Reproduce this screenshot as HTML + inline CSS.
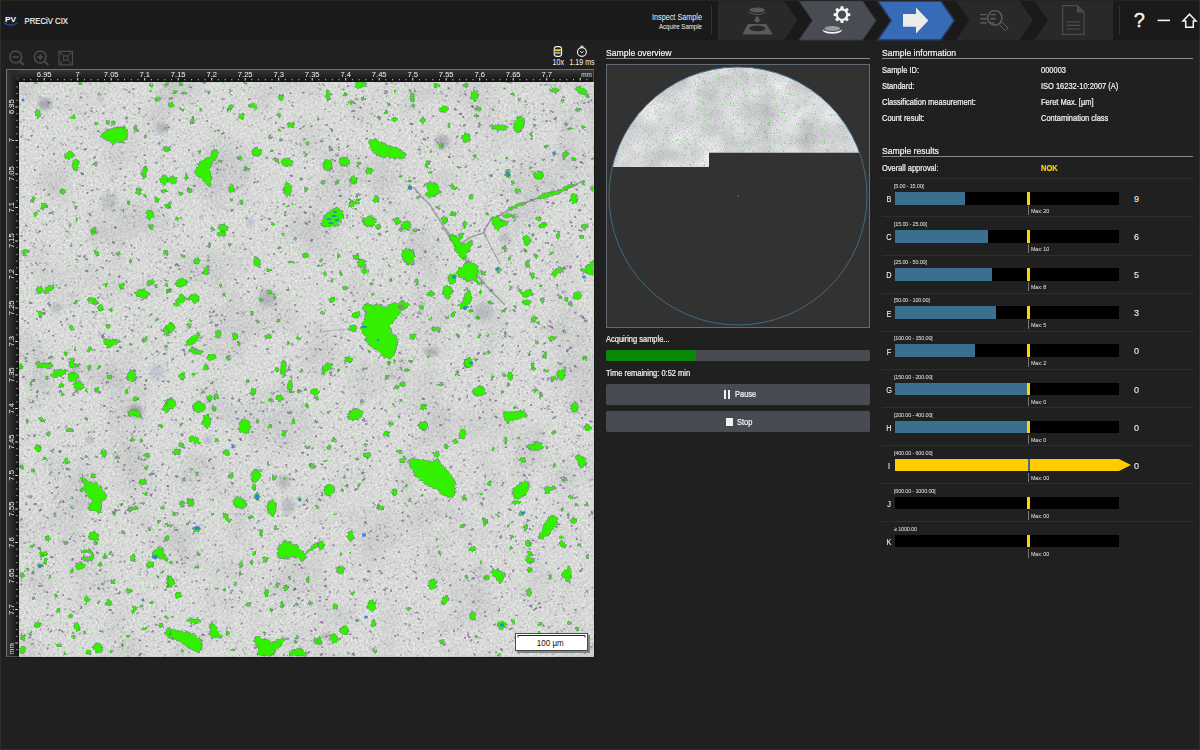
<!DOCTYPE html>
<html><head><meta charset="utf-8"><title>PRECiV CIX</title>
<style>
*{box-sizing:border-box;margin:0;padding:0}
html,body{width:1200px;height:750px;overflow:hidden;background:#202020}
body{position:relative;font-family:"Liberation Sans",sans-serif;color:#f2f2f2;font-size:8.5px}
.abs{position:absolute}
#hdr{left:0;top:0;width:1200px;height:40px;background:#1a1a1a}
.t{position:absolute;white-space:nowrap;line-height:1}
.sec{position:absolute;height:1px;background:#8a8a8a}
.lbl{font-size:8.6px;color:#f4f4f4;-webkit-text-stroke:0.22px #f4f4f4;transform:scaleX(.87);transform-origin:0 50%}
.ttl{font-size:9.8px;color:#f6f6f6;-webkit-text-stroke:0.2px #f6f6f6;transform:scaleX(.878);transform-origin:0 50%}
.btn{position:absolute;left:606px;width:264px;height:21px;background:#494b52;border-radius:2px}
.row{position:absolute;left:882px;width:311px;height:38px}
.row .sep{position:absolute;left:0;top:-0.7px;width:311px;height:1px;background:#2e2e2e}
.row .rng{position:absolute;left:12px;top:4px;font-size:6px;color:#e8e8e8;white-space:nowrap;letter-spacing:-0.2px;transform:scaleX(.92);transform-origin:0 50%}
.row .let{position:absolute;left:2.5px;top:15.3px;width:8px;text-align:center;font-size:8.5px;color:#f4f4f4;transform:scaleX(.86);-webkit-text-stroke:0.08px #f4f4f4}
.row .bar{position:absolute;left:12.5px;top:13px;width:224.5px;height:12.5px;background:#000}
.row .fill{position:absolute;left:0;top:0;height:100%;background:#3a6f8f}
.row .mk{position:absolute;left:145px;top:13px;width:3.2px;height:12.5px;background:#ffd500}
.row .tick{position:absolute;left:146px;top:27px;width:1px;height:9px;background:#777}
.row .mx{position:absolute;left:148.5px;top:29px;font-size:6px;color:#e8e8e8;white-space:nowrap;letter-spacing:-0.2px;transform:scaleX(.9);transform-origin:0 50%}
.row .val{position:absolute;left:252px;top:15px;font-size:9px;color:#f4f4f4;-webkit-text-stroke:0.08px #f4f4f4}
</style></head><body>
<div id="hdr" class="abs"></div>
<svg class="abs" style="left:0;top:0" width="1200" height="41" viewBox="0 0 1200 41">
<rect x="0" y="0" width="1200" height="1" fill="#232323"/>
<!-- logo -->
<rect x="3.4" y="12.8" width="14.6" height="14.6" fill="#161c2c"/>
<path d="M4 22 Q10.5 27 17.5 22 L17.5 23.5 Q10.5 28 4 23.5Z" fill="#2d4f86"/>
<text x="10.5" y="22.3" font-family="Liberation Sans, sans-serif" font-weight="bold" font-size="8" fill="#fff" text-anchor="middle" textLength="11" lengthAdjust="spacingAndGlyphs">PV</text>
<text x="24.5" y="23.6" font-family="Liberation Sans, sans-serif" font-size="9.4" fill="#f4f4f4" stroke="#f4f4f4" stroke-width="0.2" textLength="43.5" lengthAdjust="spacingAndGlyphs">PRECiV CIX</text>
<text x="702" y="20" font-family="Liberation Sans, sans-serif" font-size="8.6" fill="#f2f2f2" text-anchor="end" textLength="50" lengthAdjust="spacingAndGlyphs">Inspect Sample</text>
<text x="702" y="28.6" font-family="Liberation Sans, sans-serif" font-size="7" fill="#f2f2f2" text-anchor="end" textLength="43" lengthAdjust="spacingAndGlyphs">Acquire Sample</text>
<rect x="711" y="6" width="1" height="28" fill="#333"/>
<!-- steps -->
<path d="M718 1H784L797.5 20.5L784 40H718Z" fill="#28292b"/>
<path d="M799 1H862.5L876 20.5L862.5 40H799L812.5 20.5Z" fill="#4a4c54" stroke="#3a3c42" stroke-width="1"/>
<path d="M877.5 1H941L954.5 20.5L941 40H877.5L891 20.5Z" fill="#376bb7" stroke="#27344e" stroke-width="1.6"/>
<path d="M956 1H1019.5L1033 20.5L1019.5 40H956L969.5 20.5Z" fill="#28292b"/>
<path d="M1034.5 1H1113V40H1034.5L1048 20.5Z" fill="#28292b"/>
<!-- icon1 -->
<g fill="#5a5a5c">
<ellipse cx="757.2" cy="10" rx="7.6" ry="2.5"/>
<path d="M747.8 11.2 Q757.2 17 766.6 11.2 L766.6 12 Q757.2 18.2 747.8 12Z"/>
<path d="M755.5 16.5h3.4v3h2.3l-4 3.4l-4-3.4h2.3z"/>
<path fill-rule="evenodd" d="M747.8 24H766.4L772.6 34.6H742.4Z M757.3 25.6a8 2.8 0 1 0 0.01 0Z"/>
</g>
<!-- icon2 gear -->
<g transform="translate(842,14.6)" fill="#f4f4f4">
<path fill-rule="evenodd" d="M0 -6.3a6.3 6.3 0 1 0 0.01 0Z M0 -4.1a4.1 4.1 0 1 1 -0.01 0Z"/>
<g id="teeth"><path d="M-1.7 -5.6L-1.3 -8.3H1.3L1.7 -5.6Z"/><path d="M-1.7 5.6L-1.3 8.3H1.3L1.7 5.6Z"/></g>
<use href="#teeth" transform="rotate(45)"/><use href="#teeth" transform="rotate(90)"/><use href="#teeth" transform="rotate(135)"/>
</g>
<ellipse cx="832.3" cy="30.3" rx="9.6" ry="3.5" fill="#f4f4f4"/>
<ellipse cx="832.3" cy="28.9" rx="9.4" ry="3.1" fill="#4a4c54"/>
<ellipse cx="832.3" cy="28.5" rx="7.8" ry="2.5" fill="#9a9b9f"/>
<!-- icon3 arrow -->
<path d="M903 14H916V7.4L928.4 20.5L916 33.6V26.8H903Z" fill="#ebebeb"/>
<!-- icon4 -->
<g stroke="#5e5e60" fill="none" stroke-width="1.4">
<circle cx="994.8" cy="17.8" r="7.2"/>
<path d="M980.3 14.6h6.2M980.3 18.8h6.2M980.3 23h6.2M990.2 14.6h5.6M990.2 18.8h5.6M990.2 23h4"/>
<path d="M1000 23.4l1.6-1.6 6.4 6.2-2.6 2.8-6.2-6.4z" stroke-width="1"/>
</g>
<!-- icon5 -->
<g stroke="#4c4c4e" fill="none" stroke-width="1.2">
<path d="M1062.6 5.6H1077.4L1084 12V34.4H1062.6Z"/>
<path d="M1077.4 5.6V12H1084" fill="#4c4c4e"/>
<path d="M1066.4 21.8h13.6M1066.4 25.4h13.6M1066.4 29h13.6"/>
</g>
<rect x="1119" y="6" width="1" height="28" fill="#333"/>
<text x="1139.3" y="27.2" font-family="Liberation Sans, sans-serif" font-size="20" fill="#f6f6f6" stroke="#f6f6f6" stroke-width="0.35" text-anchor="middle">?</text>
<rect x="1157.6" y="19.6" width="12.4" height="1.6" fill="#f6f6f6"/>
<path d="M1189.5 14.2L1196 21H1193.3V27.2H1185.7V21H1183Z" fill="none" stroke="#f6f6f6" stroke-width="1.5" stroke-linejoin="miter"/>
</svg>

<svg class="abs" style="left:0;top:44px" width="600" height="24" viewBox="0 44 600 24">
<g fill="none" stroke="#4d4d4d" stroke-width="1.5">
<circle cx="15.7" cy="57" r="5.9"/><path d="M12.6 57h6.2"/><path d="M20 61.4l3.8 3.6" stroke-width="1.8"/>
<circle cx="40.2" cy="57" r="5.9"/><path d="M37.1 57h6.2M40.2 53.9v6.2"/><path d="M44.5 61.4l3.8 3.6" stroke-width="1.8"/>
<rect x="58.9" y="51.3" width="13.6" height="13.6" stroke-width="1.2"/>
<rect x="63.6" y="56" width="4.2" height="4.2" stroke-width="1.1"/>
<path d="M60.6 53l2.6 2.6M70.8 53l-2.6 2.6M60.6 63.2l2.6-2.6M70.8 63.2l-2.6-2.6" stroke-width="0.9"/><path d="M60.5 54.6v-1.7h1.7M69.2 52.9h1.7v1.7M60.5 61.6v1.7h1.7M69.2 63.3h1.7v-1.7" stroke-width="0.8"/>
</g>
<!-- objective icon -->
<g>
<rect x="554.2" y="46.6" width="7.4" height="9.8" rx="2.6" fill="none" stroke="#f0f0f0" stroke-width="1.1"/>
<rect x="555" y="49.3" width="5.8" height="1.9" fill="#ffd400"/>
<rect x="555" y="52.4" width="5.8" height="1.2" fill="#f0f0f0"/>
</g>
<g fill="none" stroke="#f0f0f0" stroke-width="1.1">
<circle cx="581.9" cy="52" r="4.4"/><path d="M580.4 46.3h3M581.9 46.3v1.4" /><path d="M580.2 51.2l1.7 1.6 1.7-1.6" stroke-width="1"/>
</g>
<text x="558.3" y="64.9" font-family="Liberation Sans, sans-serif" font-size="8.2" fill="#f2f2f2" text-anchor="middle" textLength="11.5" lengthAdjust="spacingAndGlyphs">10x</text>
<text x="582" y="64.9" font-family="Liberation Sans, sans-serif" font-size="8.2" fill="#f2f2f2" text-anchor="middle" textLength="25" lengthAdjust="spacingAndGlyphs">1.19 ms</text>
</svg>

<svg class="abs" style="left:0;top:66px" width="600" height="594" viewBox="0 66 600 594">
<defs>
<linearGradient id="rt" x1="0" y1="0" x2="0" y2="1"><stop offset="0" stop-color="#3a3a3a"/><stop offset="1" stop-color="#111"/></linearGradient>
<linearGradient id="rl" x1="0" y1="0" x2="1" y2="0"><stop offset="0" stop-color="#3a3a3a"/><stop offset="1" stop-color="#111"/></linearGradient>
<filter id="rough" x="0" y="0" width="100%" height="100%" filterUnits="objectBoundingBox"><feTurbulence type="fractalNoise" baseFrequency="0.28" numOctaves="2" seed="5" result="n"/><feDisplacementMap in="SourceGraphic" in2="n" scale="4.4" xChannelSelector="R" yChannelSelector="G"/></filter>
<filter id="spk" x="0" y="0" width="100%" height="100%"><feTurbulence type="fractalNoise" baseFrequency="0.42" numOctaves="1" seed="11"/><feColorMatrix type="matrix" values="0 0 0 0 0.33  0 0 0 0 0.27  0 0 0 0 0.42  6 0 0 0 -3.75"/></filter>
<filter id="spk2" x="0" y="0" width="100%" height="100%"><feTurbulence type="fractalNoise" baseFrequency="0.3" numOctaves="1" seed="23"/><feColorMatrix type="matrix" values="0 0 0 0 0.30  0 0 0 0 0.28  0 0 0 0 0.36  0 7 0 0 -4.55"/></filter>
<filter id="lowf" color-interpolation-filters="sRGB" x="0" y="0" width="100%" height="100%"><feTurbulence type="fractalNoise" baseFrequency="0.02" numOctaves="3" seed="4"/><feColorMatrix type="matrix" values="0 0 0 0 0.42  0 0 0 0 0.42  0 0 0 0 0.45  0.4 0 0 0 -0.185"/></filter>
<filter id="grain" color-interpolation-filters="sRGB" x="0" y="0" width="100%" height="100%"><feTurbulence type="fractalNoise" baseFrequency="0.45" numOctaves="2" seed="9"/><feColorMatrix type="matrix" values="0.24 0 0 0 0.725  0.24 0 0 0 0.735  0.24 0 0 0 0.725  0 0 0 0 1"/></filter>
<filter id="blur2"><feGaussianBlur stdDeviation="2"/></filter>
<filter id="blur1"><feGaussianBlur stdDeviation="0.55"/></filter>
<clipPath id="imgc"><rect x="19" y="82" width="574.8" height="574.8"/></clipPath>
</defs>
<rect x="6" y="69" width="589" height="589" fill="#1a1a1a"/>
<rect x="6" y="69" width="588" height="588" fill="#161616"/>
<rect x="6" y="69" width="588" height="13" fill="url(#rt)"/>
<rect x="6" y="69" width="13" height="588" fill="url(#rl)"/>
<path d="M6 69L19 82V69Z" fill="#2a2a2a"/>
<rect x="6" y="69" width="588" height="1" fill="#6a7078"/><rect x="6" y="69" width="1" height="588" fill="#6a7078"/><rect x="6" y="656.3" width="588" height="0.7" fill="#5c6a78"/><rect x="593.3" y="69" width="0.7" height="588" fill="#5c6a78"/>
<g clip-path="url(#imgc)">
<rect x="19" y="82" width="575" height="575" fill="#d3d4d3"/>
<rect x="19" y="82" width="575" height="575" filter="url(#grain)"/>
<rect x="19" y="82" width="575" height="575" filter="url(#lowf)"/>
<ellipse cx="45" cy="104" rx="7" ry="6" fill="#555566" opacity="0.39" filter="url(#blur2)"/>
<ellipse cx="162" cy="128" rx="6" ry="6" fill="#666680" opacity="0.28" filter="url(#blur2)"/>
<ellipse cx="110" cy="200" rx="8" ry="8" fill="#77778a" opacity="0.21" filter="url(#blur2)"/>
<ellipse cx="442" cy="142" rx="7" ry="7" fill="#55556a" opacity="0.32" filter="url(#blur2)"/>
<ellipse cx="267" cy="298" rx="9" ry="9" fill="#66667a" opacity="0.28" filter="url(#blur2)"/>
<ellipse cx="431" cy="352" rx="8" ry="4" fill="#5a4a6a" opacity="0.32" filter="url(#blur2)"/>
<ellipse cx="483" cy="312" rx="9" ry="9" fill="#7a7a90" opacity="0.28" filter="url(#blur2)"/>
<ellipse cx="505" cy="238" rx="6" ry="5" fill="#6a6a7a" opacity="0.24" filter="url(#blur2)"/>
<ellipse cx="90" cy="440" rx="4" ry="4" fill="#66667a" opacity="0.28" filter="url(#blur2)"/>
<ellipse cx="135" cy="411" rx="7" ry="6" fill="#4a3a4a" opacity="0.35" filter="url(#blur2)"/>
<ellipse cx="284" cy="482" rx="7" ry="7" fill="#6a6a80" opacity="0.28" filter="url(#blur2)"/>
<ellipse cx="288" cy="506" rx="6" ry="9" fill="#6a6a80" opacity="0.28" filter="url(#blur2)"/>
<ellipse cx="208" cy="440" rx="4" ry="4" fill="#6a78b0" opacity="0.35" filter="url(#blur2)"/>
<ellipse cx="157" cy="372" rx="8" ry="8" fill="#8a90c0" opacity="0.28" filter="url(#blur2)"/>
<ellipse cx="250" cy="222" rx="4" ry="5" fill="#8a90d8" opacity="0.35" filter="url(#blur2)"/>
<ellipse cx="100" cy="100" rx="3" ry="3" fill="#555" opacity="0.21" filter="url(#blur2)"/>
<ellipse cx="325" cy="636" rx="5" ry="4" fill="#66667a" opacity="0.28" filter="url(#blur2)"/>
<ellipse cx="56" cy="308" rx="6" ry="5" fill="#66667a" opacity="0.21" filter="url(#blur2)"/>
<ellipse cx="75" cy="370" rx="6" ry="5" fill="#66667a" opacity="0.21" filter="url(#blur2)"/>
<g fill="none" stroke="#3c3444" stroke-linecap="round" stroke-linejoin="round" filter="url(#blur1)" opacity="0.36">
<path d="M413.6 187.4L421 196L429.5 204.4L437 216L445.4 229.4L452 240L459 249.8L467 261L474.8 272.4L483 282L490.7 290.6L504.3 304.2" stroke-width="1.6"/>
<path d="M445.4 229.4L452 240L459 249.8L467 261L474.8 272.4L484 283" stroke-width="3" opacity="0.7"/>
<path d="M583.7 180.6L571 187L558.7 193L536 198.8L522 204L508.8 210L490.7 220.3L486 227L483.9 232.8L470.3 237.3L459 245.2" stroke-width="1.7"/>
<path d="M483.9 232.8L491 247L499.8 263.4" stroke-width="1.1"/>
<path d="M321 332L335 330L349 329" stroke-width="1.2" opacity="0.6"/>
</g>
<path d="M387 96l-1.3 0.9M78 300l1.4 0.6M238 342l0.8 -0.6M170 418h0M111 473h0M228 648l-1.5 1.1M459 156h0M405 296h0M357 86l-1.5 0.9M60 219l-1.3 0.9M350 221h0M73 460h0M516 113h0M54 500l-0.8 -0.1M262 242h0M20 306h0M183 482h0M449 115h0M509 172l-0.7 -1.0M515 314h0M200 234h0M282 615l-0.7 -0.7M171 618h0M231 173h0M524 234h0M108 244l1.1 -0.6M541 111h0M44 273h0M112 336h0M83 624l-1.4 0.2M104 155h0M341 584h0M121 319h0M162 173h0M41 352h0M220 553l-1.0 -0.5M172 144h0M199 430h0M351 228l-1.0 -1.0M204 336h0M182 463l-1.3 -0.7M133 96h0M131 482l-1.5 0.9M89 159h0M340 264h0M275 173h0M298 219h0M154 275l-0.8 0.5M425 119h0M258 201h0M355 481h0M238 85h0M237 514l-1.1 0.6M134 94l-1.2 -0.7M449 148h0M81 97h0M310 278h0M80 633h0M426 332h0M497 132l1.2 0.4M223 230h0M195 416h0M175 226l-1.3 1.1M416 192l1.6 0.8M189 289h0M92 108l-1.2 0.6M78 89h0M85 120h0M414 169h0M68 224h0M362 437h0M346 117l-1.2 -0.6M66 220l1.1 0.2M186 215h0M280 477h0M378 462h0M332 454h0M60 177h0M65 105l0.6 -0.7M120 380l1.2 -0.0M71 282h0M512 271l1.4 0.1M281 263h0M251 377h0M420 152h0M157 173h0M73 652h0M87 560h0M312 239h0M159 398h0M311 587l0.9 0.7M173 83h0M352 461h0M297 273h0M555 581l0.8 0.7M44 509h0M241 463h0M304 103h0M108 351l1.2 0.8M58 444h0M103 387h0M117 127h0M218 419h0M297 218h0M590 251h0M177 407h0M47 430h0M184 541h0M120 158h0M474 90h0M55 555l0.7 -1.1M144 337h0M583 293h0M54 240h0M472 200h0M448 355h0M82 371l1.1 1.1M54 357h0M324 342l-1.5 0.4M150 277h0M74 327h0M73 137h0M560 325l1.2 -0.4M351 204l-1.0 0.1M85 242h0M339 432h0M36 239h0M221 186h0M59 507l-1.0 -0.1M110 261h0M48 129h0M217 146h0M50 199h0M267 156l0.7 0.9M43 93h0M350 411h0M85 94h0M374 560l-0.8 0.2M352 473h0M586 268l0.7 -0.1M63 578h0M311 348h0M534 340h0M584 130l1.6 0.1M370 291h0M211 271h0M164 571h0M105 129h0M197 459l-0.9 -0.3M262 290l-0.9 0.6M228 495h0M163 450h0M78 568l-0.9 1.0M104 333l1.5 1.0M258 310h0M66 211l1.4 -0.9M184 558l1.0 -1.2M65 229h0M306 390h0M347 190h0M311 94l1.6 -0.6M28 535h0M172 129h0M366 327h0M177 645l1.0 0.7M230 302h0M163 147h0M275 132h0M303 289h0M584 156l1.6 0.5M321 524l1.2 -0.1M410 280h0M387 186h0M336 154h0M308 179l1.4 0.2M351 456h0M386 368l1.1 0.7M215 164l1.6 -0.9M173 224l1.5 -0.2M506 329h0M459 243h0M214 621l1.1 -1.1M98 273h0M112 651l1.1 0.0M34 354h0M117 443h0M82 93l-1.0 0.7M283 388h0M340 211l1.3 0.5M300 357h0M434 247h0M103 106l1.3 0.6M175 145l-1.3 0.1M386 112h0M553 316h0M294 196l-1.5 -1.0M349 389h0M544 182l-1.6 -0.2M304 620h0M523 87l0.9 1.2M331 366h0M27 276h0M130 433h0M265 270l-1.1 1.0M23 302l0.9 0.5M26 457l-1.1 -0.8M416 449h0M410 424h0M323 290l-1.2 -0.8M52 347h0M247 551h0M45 280h0M556 122l0.8 -0.9M388 501h0M532 339h0M65 635l0.7 1.2M245 155h0M108 190h0M38 461h0M276 468l-1.0 -0.6M185 550l0.8 0.9M304 640h0M158 211l1.5 0.1M278 295h0M49 298l-0.8 0.6M572 149h0M226 232h0M146 166h0M300 497h0M125 592h0M47 86h0M58 169h0M54 448h0M398 91h0M29 497l1.4 1.0M81 137l1.4 -0.6M247 296h0M390 272h0M413 243h0M248 126l1.3 0.1M240 507h0M64 510l-1.4 -0.4M36 239h0M399 131h0M516 89h0M436 403l-1.3 -0.8M174 236l1.0 -0.0M63 226h0M248 265h0M34 499l1.4 -1.0M295 312h0M417 394h0M391 107h0M249 514h0M25 231h0M548 131h0M219 279h0M219 138h0M58 108l1.2 0.4M127 269l1.1 0.3M425 253l-0.9 -0.6M86 296h0M328 610l-1.1 -0.9M25 160h0M310 366h0M328 179h0M38 233l-1.4 -0.6M187 411h0M256 116h0M279 446l1.3 0.9M280 362h0M506 135h0M47 139h0M74 205h0M95 123h0M78 262l-1.2 0.4M58 405l1.3 0.3M106 318h0M69 140h0M34 568l-1.3 -0.5M50 597h0M84 369h0M581 648l1.0 0.4M51 464l-1.3 0.5M174 591l0.9 -1.0M226 369h0M166 141h0M160 353l-1.2 1.0M24 197l-1.1 0.2M153 281h0M566 83h0M437 142l1.6 1.1M101 243l1.3 -0.3M82 143l-1.1 1.1M138 259l-1.4 -0.5M104 490h0M47 254l1.5 0.1M89 117l-1.4 -0.3M116 411h0M104 434h0M332 360h0M242 185l0.7 1.2M323 522h0M546 114l1.0 0.8M505 183h0M41 114l0.6 1.0M135 157h0M571 296h0M77 255l1.4 1.1M392 182h0M120 258l-1.5 1.1M244 653l1.5 1.1M146 407l-0.8 1.2M260 177h0M221 297h0M73 423h0M109 140l1.3 -0.5M74 308h0M50 84h0M85 533h0M517 355h0M64 600h0M587 332h0M499 230h0M58 305l1.1 1.0M26 484h0M84 168h0M171 458h0M118 313h0M250 309h0M47 355h0M512 475l1.6 -0.1M127 203h0M110 261l-0.8 0.9M71 98h0M31 530l-1.2 0.2M24 227l1.0 -0.3M220 227h0M169 490l-1.1 -0.6M52 574h0M123 138l-1.5 1.0M191 113l-0.9 1.2M123 128h0M199 115l-1.2 -0.8M266 328l-1.3 1.1M357 178l1.1 0.0M320 331l1.0 -0.7M309 153h0M235 450h0M47 148l1.1 -0.8M400 237l-1.1 0.3M466 559h0M255 174h0M208 595l-1.0 -0.4M84 312h0M115 158h0M505 142h0M346 334h0M272 118l-1.6 0.4M214 382l-1.1 0.4M388 167h0M371 89h0M203 272h0M336 299l1.4 -0.1M395 141h0M19 134h0M282 531l0.6 0.3M405 153h0M358 371l-1.2 -0.2M417 182l1.1 -0.3M96 319h0M191 485h0M186 280h0M204 148h0M503 246h0M320 97h0M470 199h0M279 436h0M148 453h0M427 293h0M584 125h0M88 105l-1.2 -0.6M335 124h0M142 273l1.6 0.8M583 87h0M411 266h0M492 297h0M564 178h0M23 120h0M210 132h0M422 124l1.2 -0.5M552 301l-1.1 -0.9M102 471h0M438 296h0M314 174h0M131 186h0M509 617h0M373 257h0M229 264l-1.4 0.5M210 357h0M299 144l1.5 -0.9M329 233l-1.5 0.8M141 103h0M114 377l-1.3 -0.0M225 208l0.8 0.4M526 105l1.4 -0.6M332 182h0M299 359h0M99 177h0M141 189h0M87 214h0M349 174l-0.7 -0.6M30 495l-0.8 0.3M101 416h0M313 178h0M362 122l-0.8 0.9M20 620h0M264 228h0M67 425l-1.3 0.7M344 433h0M136 399l0.9 -0.5M217 487h0M112 205l-0.8 1.1M22 134h0M269 119l-1.3 1.0M25 570h0M131 532h0M214 149l1.3 1.1M283 346l-0.9 -0.3M472 208h0M256 285h0M170 247h0M134 504l-1.4 0.8M330 106h0M321 325l1.0 0.4M120 643h0M155 353h0M306 203h0M481 401l-1.1 -1.2M261 159h0M326 263l-1.0 0.5M54 549h0M278 274h0M64 434h0M518 450h0M371 314l0.8 -0.4M187 236l1.4 1.1M164 509l0.7 -1.0M35 463l1.1 0.9M194 82h0M65 441h0M374 238l-0.8 1.1M106 365l1.6 -0.1M474 272h0M130 565h0M462 381h0M43 620l0.8 0.9M206 178l-0.6 -1.1M70 173h0M91 216h0M203 118h0M128 474l0.9 0.3M76 410h0M367 123l1.5 0.8M77 215l-1.2 1.1M340 402h0M79 537h0M538 398h0M256 445l-1.2 -0.7M276 310h0M362 379l1.6 -0.7M200 525h0M73 346l-0.8 0.7M72 311h0M416 413h0M192 501l-1.5 -0.4M525 331l-1.3 0.8M71 330l0.7 0.2M47 311h0M263 282h0M33 257h0M32 202l1.1 0.3M175 571h0M30 580l1.1 0.5M488 99l-0.9 -0.3M98 501h0M264 261h0M95 457h0M135 161h0M542 329h0M103 99h0M572 256h0M371 235l-0.8 -1.1M291 176h0M576 613l-1.4 -1.0M43 504l-1.1 -0.1M495 106h0M382 110h0M372 113l0.7 0.0M122 418h0M426 499h0M260 260h0M144 461h0M365 86l-0.6 -0.8M395 103h0M501 253l1.6 -0.8M183 461h0M177 385h0M371 145h0M87 569h0M257 274h0M25 197h0M292 102l1.5 0.1M499 254l-0.8 0.4M180 100h0M523 295l0.8 -0.3M41 198h0M465 164h0M398 261l-0.9 -0.7M178 265l-0.8 -0.9M335 238h0M349 180h0M48 302h0M275 286l-1.6 0.6M287 158h0M288 344h0M36 355h0M117 523l-1.0 0.5M376 397h0M500 148l-1.4 -0.8M71 551h0M544 257h0M55 599l0.7 -0.5M37 330h0M240 613l-0.7 -1.0M28 496h0M588 131h0M122 374h0M223 189h0M333 293h0M424 147h0M101 502h0M70 353h0M64 446l-1.5 0.1M25 343h0M210 285l-0.6 1.0M396 249l0.7 0.0M484 232h0M49 348h0M243 233h0M176 237l1.1 0.4M158 468h0M75 142l0.9 -1.1M375 115h0M69 429h0M557 449l1.3 0.4M462 230l-1.0 -0.4M168 102h0M466 93h0M19 104l1.5 0.2M21 630h0M249 445l0.7 -0.1M243 143h0M300 118l1.6 -1.2M214 276h0M141 457h0M395 352l-0.6 0.3M499 119l-0.7 -0.7M213 562h0M88 475l-1.4 0.2M212 151h0M42 139h0M466 91l-1.5 0.5M360 245h0M139 112l1.1 -0.8M455 107h0M120 533l-1.3 0.2M206 196l-0.9 -1.0M270 206l0.7 0.5M287 322l1.2 0.7M511 132h0M207 415h0M42 352l1.1 0.7M26 502l0.8 1.2M347 417h0M350 201h0M228 112h0M43 292h0M457 266h0M262 113h0M406 480h0M212 414h0M282 408l0.8 -0.3M232 200h0M461 626l1.2 -0.5M214 146l-0.9 -0.2M131 264h0M232 296h0M454 133h0M257 401h0M98 189h0M43 556l0.8 0.7M108 254h0M29 231l1.5 -0.9M113 239h0M224 248h0M415 137h0M26 379h0M340 478h0M81 537l-1.5 -1.1M192 88l-1.2 -0.7M573 181l-1.5 1.0M237 205l0.7 -0.9M97 520h0M42 270l1.3 0.8M149 316h0M230 89h0M247 382l1.0 0.2M77 613l-0.9 0.2M589 152h0M179 492l1.0 0.4M34 185l1.2 -1.0M63 513h0M135 462l1.4 0.1M29 521h0M88 340h0M40 184h0M51 222l-1.5 -1.0M32 264l-1.4 -1.0M250 212l-1.2 -0.5M405 396h0M316 189h0M157 510h0M255 576h0M129 223h0M341 332l-0.9 -1.1M43 497l-0.9 -0.5M56 630h0M528 310h0M155 410l1.1 -1.0M144 143l0.9 0.2M301 297l1.1 -0.6M230 259h0M39 506l-0.9 -0.3M386 484h0M327 218l1.5 1.0M192 619l-1.5 0.3M290 319h0M310 284h0M97 312l-0.7 -0.6M124 585h0M148 626h0M379 603l-0.6 0.3M364 168l-0.6 0.1M148 199h0M138 206h0M128 186l0.8 -0.1M162 417l0.7 -0.4M223 430h0M169 262h0M538 233h0M425 333h0M42 287h0M302 568l-0.8 -0.5M400 204l-1.0 -1.0M361 85h0M121 636l-0.8 0.7M183 514l1.4 0.6M74 293h0M242 236l1.4 0.3M46 126l1.0 -0.1M461 91h0M424 262h0M293 479h0M365 361h0M226 469h0M34 358l-0.7 0.6M337 236h0M86 439h0M270 175h0M271 373h0M69 359l0.7 -0.2M408 182h0M79 111h0M573 516h0M273 372l0.9 -0.9M68 296h0M401 169h0M283 571h0M113 117h0M103 314h0M67 390h0M111 98h0M158 526h0M83 116h0M223 109l1.2 -1.2M214 218h0M153 254h0M348 162h0M80 378h0M280 166h0M72 326l-1.0 0.1M113 372h0M281 101h0M549 150l1.2 -1.1M107 295l0.6 -0.9M470 324l0.8 0.8M300 152h0M259 411h0M351 112l1.1 -1.2M397 387l-0.8 0.5M529 337h0M250 108l0.8 -1.1M108 629l0.8 0.5M190 139h0M167 622l-1.4 0.2M57 99h0M30 400l-0.9 -0.2M176 226h0M503 204l-1.3 0.2M309 542h0M364 91h0M20 356h0M275 153h0M365 304h0M117 193h0M366 183h0M92 618h0M438 239l1.3 0.9M20 327h0M510 267h0M89 380h0M325 264l-1.6 -0.7M75 358h0M469 118l0.7 0.4M341 251l0.8 0.2M398 88h0M360 565l1.0 -0.0M341 113h0M364 272h0M142 358h0M23 88h0M101 335h0M409 300l-0.9 -0.6M484 461h0M128 388l1.6 -0.6M521 571h0M139 129h0M56 374h0M236 172l-0.7 -1.0M275 284h0M64 241l0.6 -0.7M132 271h0M412 240h0M24 254h0M251 315h0M290 376l0.8 0.5M140 216h0M259 334l-1.2 -0.9M561 88h0M214 323h0M369 580l0.7 -0.3M292 271h0M194 180l0.6 -0.7M25 270h0M197 551l1.2 0.0M161 271h0M285 104h0M547 281h0M244 555h0M122 437h0M89 294h0M298 121l0.7 0.8M135 225l-1.0 1.2M213 192l-1.4 0.8M116 178l0.9 0.3M153 143l0.6 -0.7M58 92h0M27 94l-1.3 0.6M375 116l-1.0 0.3M156 498h0M42 536h0M451 213l-1.1 1.0M401 225h0M119 397l-1.0 -0.1M113 195h0M193 413l0.7 1.1M248 178h0M30 301h0M167 348h0M436 364h0M166 606h0M300 477h0M411 228h0M503 89h0M317 190h0M164 255h0M239 259h0M437 133h0M217 164h0M248 259h0M20 122h0M356 356l-0.9 1.1M367 275l1.4 1.1M209 140h0M519 242h0M231 437h0M257 190h0M486 92l1.3 -0.6M298 506l1.6 0.9M69 560h0M287 597h0M421 143l1.5 0.6M146 230h0M90 160h0M71 479h0M348 155h0M443 260l1.6 -0.4M229 472h0M365 210h0M284 165h0M306 344l-1.2 -0.5M588 153h0M140 503h0M245 157h0M113 161l-0.8 0.7M78 533h0M49 645h0M362 181h0M26 149h0M30 401h0M300 380h0M473 153h0M535 186l1.4 -0.9M93 200h0M509 102h0M228 395h0M19 255h0M419 382h0M155 190h0M101 199l-1.3 0.2M161 237h0M466 166l-1.0 1.1M237 142l1.2 0.7M74 282l1.2 1.0M24 377l1.2 -0.6M318 494l-1.5 -0.2M199 134h0M338 365h0M263 374h0M252 436h0M222 111l-0.9 0.4M191 144h0M250 87l-1.0 1.0M234 291h0M111 196h0M172 324h0M430 268h0M409 278h0M269 248h0M161 170l-1.5 1.2M41 650h0M49 145h0M428 224l-0.7 0.6M141 353l-0.9 -0.0M211 146h0M529 157l-0.8 -0.1M76 623l1.6 -0.7M164 585h0M309 95h0M93 108h0M359 87h0M189 236l-0.9 0.3M49 645l-0.6 -0.4M206 115h0M80 510h0M146 236h0M26 139l-1.4 0.3M44 225l-1.4 -1.2M474 393h0M68 162h0M500 163l1.0 -0.4M184 611h0M219 142h0M203 325h0M475 273h0M160 322h0M262 414h0M29 403h0M53 283h0M51 161h0M236 97h0M91 204l-1.4 1.1M367 126h0M81 127h0M35 244l-1.4 -0.5M45 263l1.4 1.1M307 263h0M93 469h0M309 370l1.1 0.9M41 175l-1.6 -0.6M590 370h0M460 260h0M228 133h0M170 585h0M85 343h0M103 205h0M464 118h0M67 122l1.5 0.1M404 231l0.9 0.6M114 282h0M415 174h0M362 127h0M205 648h0M75 207h0M333 177l-1.6 0.2M113 332h0M71 91l-1.2 0.0M38 97h0M130 452h0M351 156h0M76 542h0M73 333h0M35 488l0.6 0.6M160 530h0M398 240h0M362 143h0M72 366h0M110 508l-1.1 0.0M36 162h0M92 239l1.1 0.7M270 625l-1.3 0.9M181 307h0M198 538h0M255 429h0M266 189l1.0 0.7M153 120l-0.7 -0.5M46 240h0M251 596l-0.7 -1.0M149 133h0M203 167h0M157 356l0.8 -0.6M189 130h0M315 262h0M376 199l0.8 -0.5M447 220l-1.1 0.1M221 150h0M141 310l0.9 -1.0M50 102l-0.9 0.9M136 448l-0.7 0.0M25 284l-1.1 -1.1M29 472l-1.4 0.7M221 395l0.6 -0.4M438 94h0M398 163l1.0 0.6M130 630h0M197 106l-1.0 -0.1M194 247l-0.8 0.8M471 370h0M241 311h0M333 298h0M99 336h0M255 98h0M68 237l-1.4 0.2M313 494h0M387 171h0M89 138h0M397 180h0M293 248h0M81 321l0.7 -0.3M353 102h0M106 459h0M513 162h0M550 121h0M58 99l-1.1 0.4M205 215h0M476 143h0M240 641l0.7 0.8M61 520h0M68 96l-1.4 0.9M226 316l-1.3 1.1M158 379l-1.1 0.9M354 620h0M38 324h0M53 199l-0.8 -1.0M39 645h0M371 128h0M486 389h0M52 115l0.9 0.4M159 250h0M89 126h0M146 491h0M187 457l-0.7 1.0M137 188l0.6 0.6M454 278h0M265 501l-1.2 1.1M555 247h0M263 495l1.1 1.2M177 655l0.6 -0.5M174 226h0M26 258h0M125 373l-0.7 0.5M168 230h0M222 494l-1.1 -0.9M64 199h0M411 123l-0.9 0.7M212 316h0M458 455h0M590 407h0M201 194h0M208 541l1.3 -0.9M158 503h0M221 372h0M494 154h0M115 322h0M289 140h0M33 178h0M591 108h0M277 317h0M87 239h0M185 609h0M170 578h0M86 285h0M551 331h0M202 565h0M132 352l0.9 -0.7M21 121l-0.6 0.5M169 113l-0.9 -0.2M30 497l1.5 0.6M133 172h0M151 542l-1.2 -0.6M27 567h0M161 238h0M396 157l-0.7 0.0M244 559h0M76 638h0M266 210l1.5 0.1M160 92h0M232 405l-0.7 -0.8M456 116h0M394 267h0M259 87h0M186 475h0M509 160h0M25 321l-0.9 -0.7M251 228h0M64 169l1.2 -0.9M510 429h0M86 404h0M292 261h0M527 565h0M287 467l-1.0 -0.8M449 88h0M22 260h0M425 184l-0.7 0.3M55 138h0M507 264h0M118 511l1.2 -0.9M95 113l-1.2 -0.2M414 180h0M109 408h0M205 406h0M204 142h0M110 355h0M127 287h0M250 105l-1.0 0.7M549 591h0M133 640l1.4 -1.1M435 170h0M22 173h0M246 204h0M286 221h0M370 513h0M98 190h0M316 143l-1.3 -0.2M414 89h0M262 113h0M86 545h0M83 185h0M426 230h0M73 499h0M41 432h0M77 376l1.0 -1.1M45 311l-1.0 -1.2M257 156h0M216 265l0.8 0.5M109 418h0M258 521l1.6 -0.3M328 299l0.8 1.2M80 590h0M202 389h0M304 348h0M239 457h0M206 225h0M71 295h0M395 399h0M112 294l-0.9 -0.5M430 334l1.4 0.5M42 311h0M388 125h0M160 231h0M195 493l1.3 -0.8M482 156h0M167 213h0M104 89h0M320 299h0M208 121h0M445 583l-0.8 0.7M124 619l0.8 1.2M172 241h0M162 240l0.7 0.6M124 86h0M304 185h0M324 141h0M467 237h0M196 405l0.7 -0.2M390 162l-0.8 0.5M189 296h0M159 269h0M216 391l0.7 0.6M399 402h0M100 524h0M424 229l-1.2 -0.2M37 371h0M302 412h0M267 241h0M214 385h0M268 94l0.6 -0.7M265 231h0M207 345h0M349 286h0M42 155l1.5 0.4M135 176l-1.4 -1.1M34 580l-1.0 -0.2M137 300l-1.1 0.2M445 288h0M140 134h0M197 119h0M151 484h0M523 91h0M535 108l-0.7 -0.8M110 181h0M82 175l1.5 -0.6M39 583l1.4 0.5M117 139l1.6 -0.9M96 428l1.5 -0.6M205 392h0M74 365h0M91 377l-1.3 0.5M456 158h0M240 110l-1.2 0.8M512 190h0M55 292h0M92 212l0.7 -0.4M279 400h0M578 187h0M313 163h0M133 509h0M329 480l-0.7 -0.8M384 437h0M106 623h0M179 632l1.5 -0.1M361 120l1.4 0.6M90 507l0.7 -0.5M207 447h0M264 179h0M299 249l0.8 0.8M260 562l-1.3 -0.0M356 209l1.2 0.8M235 380h0M365 421h0M350 149h0M447 281h0M349 382h0M76 610h0M507 228l-0.9 0.7M206 483h0M111 403h0M373 507l0.7 0.5M387 262l0.8 0.9M298 275h0M325 310l1.2 1.1M205 211l-1.3 -0.5M303 560l-1.0 0.7M103 252h0M297 334h0M130 189h0M232 599l0.7 0.5M204 557h0M352 137h0M150 282h0M284 333l-0.6 -0.1M56 285l1.5 0.5M429 364h0M407 272h0M200 86h0M225 151h0M324 501l-1.4 -1.1M242 316l0.8 -0.5M121 329l1.0 -0.7M320 94h0M53 296h0M323 85l1.5 1.1M108 297h0M275 439h0M475 151h0M81 474l-1.1 0.2M592 610h0M334 305l-0.9 -0.3M225 608h0M333 197h0M66 96h0M370 258h0M326 109l-1.4 0.4M268 374h0M126 209h0M304 410l0.8 0.5M497 647h0M254 88h0M504 191l-1.2 -0.3M419 340l-0.7 1.0M300 187h0M166 473h0M327 245l-1.0 0.9M135 132l-1.1 -0.9M483 221h0M187 119l0.6 -0.1M255 389l1.0 -0.9M79 216h0M392 605h0M181 436h0M226 165l1.6 0.9M231 94l1.0 0.9M139 315h0M160 491h0M394 254h0M378 111h0M109 303l0.6 -0.7M345 181h0M106 264h0M515 112l0.8 -0.8M186 140h0M106 320h0M110 399h0M416 601h0M103 337l1.1 -0.1M460 418h0M546 146h0M471 286h0M377 421h0M164 377h0M32 265h0M422 233l1.3 0.6M282 128l-1.3 -1.2M300 235h0M68 464h0M84 547l-0.8 -1.0M542 122h0M552 189l1.4 -0.6M48 128h0M293 195h0M126 247h0M127 569l1.2 0.2M576 226l-1.1 1.0M54 516h0M536 338h0M202 525h0M202 288h0M192 363h0M150 180h0M525 268h0M99 264h0M249 90h0M306 332h0M303 206h0M259 202l1.2 1.0M293 243h0M421 600h0M487 225h0M365 593l1.0 -0.7M376 405h0M298 262l-1.6 0.2M88 503l0.8 -0.3M457 127h0M104 441h0M205 92l1.0 -0.4M246 269l0.9 0.6M42 376h0M169 219h0M335 105l0.6 0.5M353 293l-0.8 -1.2M242 561l-0.9 -0.6M556 200h0M193 348l0.8 -1.1M26 558l1.3 -0.1M244 515h0M111 113l1.3 -0.3M119 147h0M143 310l1.4 -0.2M136 235h0M127 478h0M44 405h0M184 133h0M332 296h0M330 266h0M353 296h0M104 468h0M287 515l-0.9 1.0M350 228h0M280 561l-1.5 1.1M479 366h0M28 252h0M410 120l1.3 -1.2M166 354h0M565 475h0M25 156h0M420 305h0M47 418h0M303 492h0M86 176h0M367 96h0M266 489h0M126 319l-0.9 0.6M244 295l1.2 -1.2M525 161h0M76 305h0M514 121h0M345 224h0M227 211l0.6 -0.4M246 193h0M305 125h0M342 486h0M42 241h0M586 278h0M411 426l0.7 -0.0M216 379l1.5 0.9M361 213l-1.2 -0.4M171 325h0M531 162l1.3 0.1M137 348l1.2 -0.7M305 223l1.1 -0.8M367 227h0M552 343h0M81 333l-1.0 0.7M173 532h0M182 220h0M145 544l-1.6 -1.0M114 182l-1.3 -0.2M105 592h0M233 486h0M536 300h0M238 364h0M70 228h0M390 426h0M48 127h0M151 261l-1.2 0.2M185 352l-1.4 -0.7M122 153h0M435 170l-0.9 -0.8M245 178h0M158 432h0M285 343h0M97 247h0M92 103h0M503 148h0M191 96h0M143 527h0M247 164h0M164 311h0M137 157l-1.5 1.0M189 112h0M395 331h0M314 356h0M174 96h0M33 314h0M90 334h0M40 529h0M58 638h0M399 334l-1.4 -0.7M346 322l1.6 -0.7M472 208l0.7 0.4M486 279h0M358 474h0M80 167h0M525 225h0M52 315h0M77 129l1.1 -1.0M20 184h0M230 476h0M348 105l-1.6 -1.0M42 82h0M168 451l-1.3 -1.1M197 269l-0.6 -1.1M522 167l-0.9 -0.4M203 219h0M193 489h0M228 306l1.0 0.8M278 550h0M233 84h0M307 203h0M334 391l0.6 0.2M574 118h0M246 84l0.8 -1.2M46 126h0M337 530h0M27 329l0.6 -0.9M450 230h0M21 220h0M89 522h0M128 624h0M112 278h0M131 651h0M215 305l0.8 -0.7M279 84h0M457 151h0M386 223h0M41 143h0M180 570h0M228 368h0M34 246l-1.5 0.2M190 596l0.7 -0.4M252 143h0M516 375l1.2 0.6M372 305l-1.0 0.2M91 323h0M152 225l0.7 -0.7M90 294h0M317 240h0M103 305h0M110 531h0M27 533h0M177 356l-1.0 -0.9M175 460h0M31 408l0.9 -0.6M531 268h0M592 124h0M273 160l-0.6 -1.2M357 151h0M278 202l-0.7 -0.6M363 510l1.3 0.1M350 82h0M96 150l1.4 -0.2M118 102h0M261 131l0.7 -0.6M408 627h0M286 134h0M92 113h0M48 575l-0.9 0.1M99 535l-1.2 -1.0M434 396l-1.3 1.2M67 177h0M66 477h0M199 468h0M186 250h0M104 466l-0.8 0.8M21 232l0.7 0.5M177 168l0.7 -0.6M150 267h0M139 317h0M385 621l-0.7 0.7M334 354l-1.0 0.6M323 119l-0.7 -0.2M492 249h0M223 513h0M43 313h0M255 243h0M487 372h0M100 141h0M322 496h0M368 196h0M133 206l-0.6 -0.2M39 126h0M457 367h0M74 633h0M139 97h0M211 320h0M320 90l0.9 -0.5M582 151h0M21 438h0M117 497h0M310 124l0.7 -0.6M40 510l1.5 -1.1M230 94l1.0 1.1M264 568h0M522 114h0M248 431h0M141 629l1.0 0.8M312 187h0M338 538h0M216 218h0M78 295l-1.1 1.2M353 119h0M102 532h0M346 166l1.2 0.7M253 484h0M248 150h0M37 336l-1.1 -0.7M87 164h0M215 397l1.1 -0.8M399 136h0M217 444l1.4 -1.0M199 275l-1.4 -0.2M105 419h0M175 598h0M314 427h0M593 149h0M135 129h0M235 114l-1.5 -0.4M280 526h0M48 293l1.0 0.2M244 115h0M72 583h0M550 612h0M555 120l0.7 -0.7M136 215h0M65 88h0M113 140l-0.8 -0.2M163 140l-1.5 0.6M306 377l-1.2 0.9M517 215l-1.4 -0.8M467 166h0M28 274h0M207 310h0M42 421l1.2 0.1M469 580l-1.5 0.7M268 495l1.2 -0.5M57 130h0M154 394h0M302 393h0M270 367h0M93 378h0M41 451h0M248 189l-1.3 0.9M120 510l-1.5 -0.3M360 195h0M188 448l1.4 0.8M348 141l0.8 0.6M414 141h0M80 490l1.1 1.1M169 86h0M114 196l-0.9 -1.1M135 206h0M142 323h0M75 541l-1.6 -0.6M282 435l1.2 0.3M154 377h0M250 593h0M329 242l1.1 1.2M262 291h0M526 107h0M94 586h0M383 326h0M182 245h0M241 438l-1.0 1.0M448 156h0M59 207h0M92 430h0M136 399h0M460 314h0M121 186h0M155 178h0M160 414l0.9 -0.9M436 348h0M112 308l0.9 -0.6M123 338h0M271 189l-0.9 0.4M362 518h0M142 488l-0.7 -1.1M338 430h0M317 372l-1.3 0.5M113 203h0M590 129h0M369 148h0M99 148h0M86 302h0M439 103h0M213 390h0M32 403h0M93 564h0M57 508h0M142 465l1.4 0.7M168 125l-1.6 1.0M375 336l1.5 -1.1M150 155h0M29 290h0M563 226l1.1 -1.2M44 116h0M90 201h0M256 214l-1.1 -0.2M44 90h0M230 144h0M81 279l-1.0 -1.0M50 491h0M486 247h0M302 197l-0.6 0.2M123 387h0M109 547h0M198 272h0M476 111h0M356 394l1.2 -0.4M484 253h0M187 318l-1.1 1.1M85 432l0.8 -0.2M168 570h0M328 441h0M311 550h0M224 377h0M191 313h0M174 177h0M309 348h0M223 107h0M121 245h0M78 164h0M91 370h0M147 389h0M593 147h0M162 462h0M153 355l-1.6 -1.1M43 393l1.1 0.1M75 128h0M547 442h0M373 391l1.3 0.1M198 373h0M294 289h0M163 109h0M411 239h0M454 277h0M94 446l0.7 -0.2M120 251h0M79 184l1.5 0.8M488 226h0M590 86h0M81 420h0M27 542h0M63 501l0.8 0.6M294 213h0M227 514l0.9 0.4M183 350h0M248 200h0M480 121h0M494 228l1.2 0.7M151 495l-0.9 -0.6M195 103h0M272 372l0.9 -0.8M165 608l0.7 0.1M375 340l0.8 0.2M104 344h0M264 419l-0.9 1.2M296 486l1.3 -0.6M153 547h0M141 166l-0.8 0.9M28 479h0M405 402h0M241 88l1.0 -1.0M54 498l1.2 0.3M261 513h0M131 260h0M546 84l1.6 0.2M72 89h0M191 132h0M330 140h0M28 526h0M458 288h0M186 134h0M121 163l-1.0 0.7M172 158l1.0 0.8M45 332l-0.7 0.9M305 82h0M48 445h0M489 187h0M157 160h0M296 116h0M228 626h0M100 408h0M434 613l1.4 -1.0M401 313l0.8 0.9M493 276h0M54 577h0M308 396l-1.0 1.2M212 128l-1.3 -1.2M39 620l-1.1 0.5M76 130h0M560 136l1.4 0.5M275 305l-1.0 0.3M548 263l-1.3 1.2M25 576h0M48 265h0M76 336l-1.5 0.5M87 241l-1.0 0.0M379 604h0M213 435h0M345 166l-1.0 -0.0M173 472h0M141 300h0M125 143l-1.2 0.4M145 160l1.6 1.0M282 515h0M69 423h0M115 109l-1.4 0.9M100 294l1.6 0.9M419 154l1.4 -0.7M116 453h0M58 603l1.3 0.4M344 331h0M141 295l1.2 -0.1M578 178h0M316 489h0M512 121h0M517 459l0.8 -1.1M501 213l0.7 -0.5M430 168l1.1 0.8M247 84l-1.5 -0.1M283 310h0M148 523h0M589 133h0M43 624h0M112 408l-1.0 -1.2M51 315h0M107 409h0M54 416h0M192 103h0M132 258h0M115 191h0M166 533h0M252 297h0M287 500h0M173 272h0M537 447h0M157 295h0M126 311h0M232 301h0M178 220h0M87 186h0M49 465h0M86 528l-1.1 -0.2M539 99h0M478 231h0M409 110h0M113 454l1.4 0.9M55 557h0M224 170h0M585 103h0M88 97h0M417 153h0M221 170l-1.2 -0.8M487 212h0M264 373h0M72 110l-1.0 -0.0M94 202l-0.7 -0.8M165 170h0M445 171h0M382 188h0M52 187h0M79 218l1.4 0.4M205 90l0.8 0.4M312 247h0M202 408h0M60 407l0.9 0.2M54 543l-1.0 -0.8M28 439l-0.7 -1.0M135 222h0M65 428l1.3 -1.1M571 481h0M123 154l-1.0 -1.1M23 111h0M286 258h0M304 253h0M41 506h0M147 200h0M149 588l-0.7 -1.1M208 323h0M462 382l-0.8 1.1M44 270h0M130 444h0M291 418l-0.6 -0.5M211 308h0M244 272h0M290 83h0M64 411l1.2 -0.7M396 93h0M352 372h0M247 554l1.3 1.0M346 243h0M53 213h0M564 176h0M151 208h0M58 479h0M101 357h0M113 176l0.7 0.8M387 213h0M181 228h0M48 608l-1.5 -0.0M418 540h0M222 419l0.8 -0.4M449 225l-1.0 -0.5M102 298l1.2 0.4M30 370h0M305 440h0M384 202h0M201 216h0M107 322l-0.7 0.3M35 294l0.7 -0.4" fill="none" stroke="#4c5052" stroke-width="1.0" stroke-linecap="round" opacity="0.5"/>
<path d="M69 324l-1.2 0.5M422 323l-1.4 -0.8M262 241h0M327 641h0M496 437h0M424 108l-1.5 0.9M558 454l-0.8 -0.3M588 449h0M504 527l1.0 -1.0M544 408l1.0 1.0M283 234h0M145 655l-1.5 -0.8M362 351h0M561 472h0M451 523l-1.1 1.1M523 233l-1.5 -0.5M386 432h0M329 529l1.1 -0.9M68 361h0M171 583l-1.3 -0.2M162 119h0M274 576l-1.6 1.0M507 177l1.5 -0.8M400 361l-1.2 0.1M352 105h0M344 264h0M371 649l1.5 -1.0M477 576l-1.3 -0.4M551 218h0M469 318h0M59 526h0M410 566l0.8 1.1M401 272h0M433 254h0M250 252h0M560 471h0M192 397l1.4 0.3M475 633h0M508 124h0M528 529h0M419 349h0M488 594h0M451 564h0M510 629h0M333 428l1.1 -0.3M404 540h0M548 645h0M359 463h0M517 186l0.9 0.6M49 628l-1.4 1.1M421 522h0M570 310l-0.7 0.7M508 427h0M469 281h0M174 546h0M269 502h0M212 366h0M525 401l-1.3 -0.0M455 478h0M475 135h0M264 510h0M215 636h0M541 253h0M346 248h0M421 623h0M407 576l1.2 0.6M331 319h0M454 441l-1.5 -0.1M519 584h0M282 497h0M509 575l1.5 -1.1M448 331h0M521 337h0M45 539h0M157 606h0M165 229h0M537 471h0M163 567h0M385 438h0M398 563h0M391 259h0M440 134h0M324 606l1.6 -0.5M519 544l-1.5 0.5M582 637h0M406 468h0M560 144l1.5 -0.7M40 654l-1.0 -0.3M565 482h0M437 590h0M373 621h0M493 135h0M577 111h0M356 549h0M472 424h0M587 392l-0.7 -0.3M472 420l-1.3 0.1M301 604l-0.7 -0.5M383 397h0M461 496h0M107 612h0M339 419l-1.0 0.9M342 523h0M362 589h0M368 320h0M322 259h0M458 248h0M320 309l1.4 -1.0M383 387h0M221 632l-0.7 -0.7M365 518l1.1 0.2M193 240h0M197 341h0M204 355l-1.4 0.8M464 472h0M474 549h0M444 475h0M129 656l-1.1 0.1M444 384h0M374 425l-1.3 -1.1M452 532l1.5 -0.7M409 409h0M466 371l-1.4 -0.9M437 385l0.7 -0.6M386 439h0M432 249h0M226 629h0M380 525l-1.0 -0.4M389 559h0M294 187h0M562 103h0M528 263h0M488 354h0M184 577h0M176 541h0M272 631l1.0 0.7M591 186l1.3 -0.5M43 581h0M410 629h0M468 102h0M409 627h0M349 386h0M242 404l0.8 0.3M418 655l-1.1 1.0M203 281h0M532 571h0M386 538l-1.4 -0.6M543 114l-0.8 1.0M149 626l-0.9 0.3M494 98h0M413 253l1.0 -0.1M232 404h0M573 600h0M434 191h0M287 587l1.1 1.1M143 285h0M526 458h0M458 292h0M131 400h0M87 642h0M368 378h0M301 405l1.3 1.2M355 539h0M465 414h0M104 473h0M548 583l-1.1 0.1M593 357h0M518 473l0.8 -0.6M534 308h0M142 557h0M77 524h0M288 193l1.2 0.5M413 612h0M146 632h0M588 296h0M454 542h0M208 381l0.7 0.0M484 342h0M454 644h0M263 300h0M530 220h0M144 578h0M586 381l-1.2 -0.2M471 265l0.8 0.1M575 402l-0.9 -1.0M435 403h0M210 631h0M158 429h0M336 527h0M76 645h0M545 295h0M352 322l1.2 -0.6M336 624h0M440 284h0M320 564h0M588 212h0M395 575l1.0 -0.1M385 485h0M534 610h0M417 407h0M122 570l-1.4 0.5M461 630h0M224 622h0M429 129h0M383 507l-1.5 -0.1M457 141h0M339 376l-1.2 0.7M360 194l0.9 0.3M481 271h0M513 641l-1.1 -0.8M575 531l1.0 1.0M134 654h0M506 538l0.8 0.4M430 535h0M534 390l-1.3 -0.3M353 412h0M463 420l-1.1 -0.5M114 647l-0.9 -0.2M285 540l1.0 0.6M527 340l-0.8 0.6M484 118h0M362 433l1.2 0.8M362 412h0M200 341h0M502 363l-0.9 -0.5M459 398l1.1 0.6M456 335h0M442 457h0M485 419h0M383 177l-1.4 0.2M325 425h0M537 550h0M422 158l-1.4 0.4M300 413h0M420 570h0M576 555l0.9 0.2M345 361h0M90 574l0.8 0.5M95 455h0M177 458h0M539 177l-1.0 -1.0M318 337l-1.6 -0.2M240 635l1.2 -0.6M365 496h0M458 630l-0.6 -0.7M549 627l1.0 -0.2M387 391l-1.1 -0.7M484 390h0M499 473h0M439 568l0.7 0.3M113 629h0M433 178h0M429 413h0M150 374h0M445 323h0M433 238h0M308 600h0M583 630h0M181 567h0M303 525h0M456 223h0M579 131l0.7 0.2M269 635l1.5 -0.3M497 269l-0.7 0.6M424 428h0M335 136h0M381 452l-0.6 -1.0M538 337h0M496 272h0M36 474l-0.9 -0.1M306 589l0.7 -0.7M528 384h0M476 650h0M77 459h0M420 607h0M564 406l1.1 -0.8M504 268h0M546 526h0M553 534h0M116 590h0M386 591l-1.3 -0.4M472 496h0M351 517h0M479 101l-0.7 -0.8M235 502h0M37 623h0M378 358l1.6 -0.1M171 450h0M238 189h0M170 562l-0.7 -0.4M330 639h0M502 552h0M537 541h0M88 517h0M578 546h0M574 140h0M471 580h0M213 538h0M494 237h0M456 580h0M134 115l1.3 -0.5M493 372l-0.8 -0.0M276 633h0M217 563h0M467 205l-0.9 -0.2M493 310h0M400 566h0M369 253l1.2 0.9M203 162h0M189 603h0M354 653l-1.3 0.3M293 622l-1.4 0.9M395 210h0M261 591h0M286 150h0M353 438l-1.5 -0.3M532 648h0M470 530h0M532 516l-1.2 -0.6M418 280h0M564 609l-0.8 -1.1M361 110h0M419 444h0M182 532h0M415 358l-1.5 0.8M404 168h0M435 140l0.9 -1.1M487 584h0M408 327h0M531 88h0M416 357h0M371 577h0M532 359h0M289 367h0M512 339h0M194 374h0M565 291l0.9 0.6M364 493h0M75 460h0M383 541h0M80 597h0M446 317l-1.5 -0.3M355 613h0M582 608l1.6 -0.1M557 445h0M393 632h0M347 465h0M134 513l0.7 -1.1M477 482l1.0 1.1M580 261l0.8 0.9M514 336h0M132 498h0M209 489l1.2 0.7M379 566h0M569 381l0.7 -0.7M539 434h0M241 392h0M44 598h0M516 325h0M423 642h0M559 511h0M340 412l1.1 -0.2M201 306l-1.4 0.2M244 540h0M338 153h0M328 626h0M539 279h0M335 249l1.6 -0.3M405 217l-0.9 -0.1M387 241h0M382 548h0M329 457h0M532 420l-1.0 0.0M400 569h0M317 536h0M395 562h0M541 378h0M296 357l0.6 -1.1M123 632h0M290 358h0M309 323l1.5 0.2M524 387l-1.5 0.1M261 584h0M559 359h0M482 603h0M351 150h0M414 263l0.9 0.1M398 511h0M249 459h0M52 526h0M373 469h0M580 132h0M404 315l-1.5 0.1M437 403l0.8 1.1M280 314l-1.2 0.0M343 524h0M216 400l-1.5 -0.6M564 474h0M224 529l1.2 0.6M302 648h0M301 647l-1.4 -0.9M415 89h0M206 434h0M510 243l-1.4 0.5M555 230l-1.2 0.4M329 644l1.4 -0.1M449 381l-0.7 -0.6M524 397h0M459 130l0.9 -0.6M182 442h0M557 397h0M329 421h0M523 332h0M542 358l1.0 -0.6M217 351h0M564 356h0M187 215h0M256 404l1.4 -0.7M372 480h0M325 236l-0.9 0.3M32 640l1.3 -0.6M51 527h0M89 523h0M274 505h0M411 261h0M516 207h0M469 355h0M554 654l-1.3 0.7M454 544l1.0 -0.9M536 361l0.8 -0.8M219 502h0M545 400l1.4 0.1M280 527h0M527 438h0M83 382h0M94 583h0M321 485h0M288 449h0M531 554l1.1 0.6M499 127h0M351 469h0M397 388h0M459 614h0M547 375h0M435 537h0M553 446l-0.9 0.2M207 483h0M592 639h0M464 157h0M300 456h0M442 223h0M205 612h0M588 336l-0.8 -0.3M455 571l-1.5 0.8M27 480h0M590 481h0M540 384l-1.4 0.3M50 458h0M539 360l-1.1 -0.1M552 94h0M211 308l1.0 -0.5M592 644l1.5 0.9M521 476h0M396 406l-0.8 0.8M385 506l-0.8 0.6M65 530h0M289 455h0M552 648h0M206 345h0M246 504h0M194 557h0M245 268h0M535 596l1.3 1.0M477 494l1.2 -1.0M111 398l1.2 0.4M105 581h0M379 149l0.6 -0.0M306 545h0M342 637h0M40 523h0M491 517l0.7 0.5M587 360h0M586 247l1.5 0.3M304 501h0M527 216l-0.6 0.3M196 373l0.9 0.5M373 99l1.5 -0.1M212 532h0M479 592h0M503 410h0M516 513l-0.9 -1.0M478 601l1.3 0.1M558 470h0M283 492l-1.3 0.2M69 350h0M570 403h0M330 111h0M424 594h0M287 215h0M374 606h0M401 535h0M81 401l1.0 -0.2M215 549h0M269 534l-1.3 0.5M569 122h0M463 299h0M385 82l1.0 0.2M132 473h0M584 280l1.4 0.8M428 315l-1.1 -0.7M281 535h0M506 218h0M467 349h0M450 499l1.2 0.2M509 241l0.6 -0.9M119 422h0M479 577l-1.2 0.8M501 514h0M399 499h0M503 113h0M564 611h0M185 540l-0.7 0.1M222 567h0M409 652l-1.4 -1.2M144 426h0M392 543l-0.9 -0.1M54 631h0M302 615l0.7 0.1M267 434h0M315 622h0M504 530h0M345 619h0M460 454l1.3 -0.5M528 333l-1.3 0.2M519 390l-0.6 -0.9M539 553h0M419 400h0M293 155l1.0 1.1M370 104h0M565 442l-1.2 -0.7M586 643h0M586 373h0M550 113l0.9 0.7M443 581l1.2 -1.1M382 642l-0.9 -0.9M386 433h0M592 422l1.3 -0.6M105 411h0M491 342h0M28 466h0M99 486h0M379 486h0M240 478l1.3 0.3M212 617h0M341 526l-1.2 0.6M452 582h0M307 558h0M494 598h0M127 589h0M122 632l-1.3 -0.0M522 381l-1.1 -0.2M443 94l-1.4 0.0M299 464h0M185 567l-1.2 -0.8M327 187h0M539 538l1.2 -0.1M581 167h0M326 152h0M534 639h0M402 541h0M503 338l-1.2 -0.7M557 242h0M275 467h0M541 289h0M581 584h0M274 652l1.3 -0.2M499 425l0.7 1.1M90 464l-0.6 0.6M303 639h0M295 332h0M579 552h0M314 522l-1.1 0.9M494 475h0M215 605l-1.4 0.7M429 485h0M546 149l0.9 -0.3M489 593h0M216 489h0M147 574l-0.8 1.2M263 520l1.4 -1.1M405 99h0M178 415h0M468 434l-1.1 0.5M508 354l-0.8 -0.3M512 596h0M565 649l0.7 -0.6M305 443l-1.4 -0.0M528 176l1.1 -0.9M407 461h0M293 572h0M303 639h0M581 266l0.9 0.6M34 594l1.6 -0.2M194 276l1.3 -0.2M315 324h0M407 275h0M214 435h0M305 568h0M327 247h0M345 387l-1.3 -0.5M481 330l0.9 0.0M493 620h0M484 571h0M437 116h0M505 235l-1.0 -0.9M473 241h0M364 526h0M443 545h0M179 532h0M525 522l-1.4 1.1M523 553h0M443 342l-1.2 0.7M429 523l1.4 -0.4M294 504h0M494 541h0M464 615h0M172 510h0M417 476h0M442 229l1.5 -0.1M427 547h0M238 643l-1.2 -0.6M309 616l1.3 -0.2M579 243h0M316 332h0M301 627h0M385 335l-0.6 -0.6M499 512h0M461 471l-1.0 0.2M566 562l1.1 1.1M566 269h0M570 409l0.9 -1.1M60 628h0M549 601h0M269 327l1.3 0.4M429 616h0M67 351h0M192 647l-1.1 -0.5M433 549h0M471 566h0M278 546h0M485 203h0M168 469l0.7 -0.8M193 154l-1.3 -0.7M104 324h0M444 338l1.2 -0.7M346 561l1.6 0.8M443 424l1.0 0.0M436 619h0M152 117h0M549 572h0M527 497h0M560 457h0M577 175h0M590 256l-1.0 -0.6M483 276l-1.1 1.2M470 524h0M534 572h0M370 575h0M311 178l0.8 -0.5M507 334h0M160 546h0M150 542h0M36 166h0M562 131h0M388 600h0M429 461l1.5 0.5M521 496l1.5 0.3M378 437l1.4 0.9M525 381l1.1 0.6M430 620h0M357 380l1.2 1.2M415 626h0M576 377h0M468 355h0M457 372h0M277 579h0M401 317h0M330 632h0M390 579h0M477 488l-0.8 0.3M323 301h0M331 246h0M302 514l-0.9 0.1M67 447h0M234 648h0M263 605l1.6 0.3M395 178h0M192 309l1.5 -0.7M384 644l0.9 -0.1M257 596h0M328 534l-1.5 0.8M585 154l-0.8 -1.2M181 611l1.4 -0.7M583 637h0M424 430h0M386 146h0M44 496h0M415 632l0.9 0.3M379 274l-1.6 0.8M491 380l1.4 0.3M352 131l1.5 0.5M525 437h0M469 343l-0.6 0.5M376 189l-0.9 -0.2M571 515h0M465 167l1.6 0.0M397 165h0M387 198l1.3 1.2M373 322h0M473 106l-1.3 -0.1M483 298h0M226 642l-1.5 0.5M214 400l1.5 -1.1M593 588l-1.5 -0.9M46 436h0M473 270h0M312 368l1.1 -0.0M569 354h0M474 455h0M279 217h0M376 327h0M482 264l-0.9 -1.0M537 251h0M593 514h0M289 549l-1.0 1.1M467 391l-1.5 -0.8M567 272h0M543 304l-1.1 -0.3M588 156h0M243 601h0M413 240l-1.4 0.3M398 483h0M44 590h0M328 465h0M538 604h0M467 317l-1.1 -1.0M418 512h0M511 310l-0.9 0.6M503 180l0.7 0.6M116 467l1.0 -0.7M39 469h0M500 548h0M535 306l-0.6 -0.3M378 618h0M146 460h0M44 590h0M306 651h0M549 409l1.6 0.5M409 640l1.6 0.4M313 508h0M523 159h0M369 301h0M22 581l-1.5 -0.9M442 518h0M549 424h0M367 123h0M108 191h0M577 296h0M357 317h0M240 407h0M552 504l1.2 0.4M420 452h0M546 310h0M395 503h0M424 196h0M278 549l-1.4 -0.7M584 582h0M82 447l-0.9 -0.4M402 535l-1.0 0.0M572 235h0M401 299h0M436 592h0M539 503l-1.5 0.9M470 493h0M330 222h0M460 427h0M432 504h0M342 573l-0.9 -0.9M215 422h0M294 558h0M236 645h0M49 579h0M244 647h0M589 397h0M588 517h0M182 482h0M482 570h0M132 456h0M584 472l1.6 -0.8M577 442l-1.0 -0.5M589 467h0M489 301h0M541 211h0M295 480h0M240 656l-0.7 -1.0M542 538h0M469 460h0M328 202h0M570 428h0M93 439l1.2 -0.8M281 624h0M391 376h0M201 534h0M253 271h0M117 625l1.1 -0.9M547 449h0M409 322h0M223 351h0M562 177h0M315 655h0M430 485l-1.2 1.1M407 588l-1.0 -0.9M497 570l0.9 -0.7M443 409l-1.5 0.9M507 115h0M23 524h0M174 650h0M99 511h0M427 146l1.3 1.0M308 612h0M82 144l-1.4 -0.6M161 553h0M485 484l-0.8 -0.9M373 134h0M195 446l0.7 -0.2M462 157h0M446 420l0.8 -0.3M433 107h0M580 596h0M543 121h0M418 507h0M519 640h0M240 529l-0.6 0.2M309 496h0M561 241h0M367 294h0M335 496h0M145 636h0M328 644h0M519 446h0M452 171h0M231 600l-1.4 -0.8M347 623l0.8 -0.8M246 431l-1.1 0.3M250 498h0M488 258l1.2 -0.9M493 141h0M430 600h0M148 631l0.7 1.0M548 596l1.2 0.4M105 465h0M555 547l-1.5 1.1M466 166h0M477 642l1.6 -0.5M71 653h0M325 553h0M423 217h0M490 251h0M578 606h0M422 462h0M520 99l-0.6 0.8M258 521l1.1 0.5M274 452l-1.5 -1.1M451 371h0M410 585h0M548 370h0M109 641h0M394 315l1.2 -0.7M336 448l-1.2 0.7M143 473h0M320 523l1.0 0.9M267 593h0M139 432l0.7 -1.2M534 368l0.8 -0.5M167 354h0M393 163h0M42 575h0M546 156h0M566 296h0M389 507h0M24 572l1.5 -0.7M522 466h0M327 552l-1.5 1.0M461 196l0.8 0.6M582 205l0.9 0.3M417 305h0M443 264h0M104 578h0M253 381h0M498 154h0M27 549h0M308 580h0M281 318h0M320 521l1.0 0.1M410 446h0M540 139h0M482 465l1.2 -0.9M511 628h0M286 603h0M247 621h0M173 460h0M542 468h0M317 507l0.8 1.1M119 601h0M470 566l-1.5 -0.7M584 446l-0.9 0.1M386 415h0M244 364l-0.8 -0.2M531 446l0.6 -0.8M345 430h0M590 360h0M457 206h0M527 325h0M377 431h0M234 445l-1.6 -0.6M324 311h0M89 265l1.2 -0.4M369 589l1.3 -0.2M487 196h0M365 421l-1.2 0.9M587 605h0M480 497h0M249 401h0M245 482h0M575 152h0M36 109l1.5 0.5M488 391h0M49 589l0.7 -0.4M371 548l-1.2 -0.9M534 448h0M398 504l0.7 -1.2M143 552l-1.4 0.6M396 569l1.0 -0.1M519 454h0M392 502l0.8 -0.5M368 380l-1.6 -0.7M421 314l1.1 -0.8M422 356h0M156 263l0.7 -1.2M292 274l-0.8 0.6M76 543h0M427 594h0M538 424h0M523 472h0M570 384h0M530 306h0M576 537h0M306 475l1.2 0.4M90 362h0M499 111h0M567 491h0M267 609l0.8 0.4M548 425h0M523 544h0M163 321l1.2 0.3M429 351h0M261 516l-1.2 -0.3M376 599l0.7 0.4M285 520h0M416 578h0M342 637h0M558 544l-0.6 0.2M498 337l1.1 -0.8M154 569h0M271 460l-0.8 0.8M302 465h0M275 603l0.9 1.2M225 573l1.1 -0.8M572 430h0M311 460h0M358 415h0M550 266h0M588 411l1.3 -0.7M446 331h0M438 385l1.1 -0.3M536 572h0M379 584l0.7 -0.0M49 392h0M186 557h0M521 173h0M564 601h0M175 106h0M393 330h0M578 94h0M443 399h0M419 329l0.7 0.3M539 284h0M156 135h0M452 546l-1.5 -0.6M304 504h0M425 439l-1.4 0.1M194 399h0M472 103h0M458 629h0M174 420h0M53 573l1.0 -1.1M558 604l1.4 0.2M156 603h0M506 337l-1.6 -0.0M504 207h0M178 432l-0.9 0.7M168 366l-0.8 0.4M579 439l-1.5 -1.1M369 546h0M311 416l-1.3 -0.8M441 391h0M478 430h0M367 340h0M253 418l0.9 -0.9M254 372h0M526 196h0M323 305l-1.3 -0.9M535 598h0M185 356l-0.8 -1.2M360 469l-1.1 0.2M562 138l0.9 -0.3M454 629h0M526 502l0.7 -0.5M551 465l-0.6 1.0M571 392l-1.0 -0.5M564 327l0.9 -0.9M425 567h0M437 270l-1.3 -0.4M39 446l1.5 -0.7M523 628h0M372 444l-1.5 0.8M522 465h0M363 394l1.0 -0.1M161 326h0M399 282l1.4 0.9M365 476l-1.5 0.7M54 525l1.4 -0.2M348 178h0M564 434h0M337 458h0M307 536l-0.8 0.7M424 503h0M330 609h0M263 509h0M233 396l-1.0 -0.6M516 363l1.1 0.8M445 561h0M363 582l1.1 -0.4M513 652l-1.0 0.6M112 511h0M578 104l0.7 0.9M433 587l1.2 -0.8M232 429l1.5 0.5M418 391l1.2 -1.0M385 589l-0.9 0.8M518 417h0M319 452h0M373 604l-1.6 -1.0M481 166h0M205 596h0M272 464h0M498 490h0M301 535h0M269 282h0M165 611l1.2 -0.2M592 486l-1.5 1.0M592 445h0M522 513l-1.2 0.5M131 434h0M356 624h0M251 563l-1.3 -1.0M274 240h0M287 562h0M70 609l1.2 1.1M460 535h0M66 498h0M388 599h0M499 239h0M168 334h0M228 525h0M390 473l0.7 0.7M167 350l-1.1 -0.1M451 334h0M418 502l1.2 -0.0M568 312h0M71 537l0.8 -1.2M104 589l-1.5 -0.2M202 619l1.4 0.6M263 308h0M445 419h0M461 294h0M214 457l1.3 -0.0M169 630h0M483 174h0M468 491h0M519 128h0M521 332l1.1 -1.1M364 294h0M460 96l0.6 -0.4M385 424l0.8 -1.0M177 640l0.6 -0.4M565 229h0M500 331l1.6 0.3M329 538l0.8 1.0M177 477h0M580 265l0.8 0.3M438 432h0M361 393h0M406 229h0M575 444l-1.3 0.1M194 513h0M347 185h0M441 312h0M259 426h0M550 184h0M211 348h0M385 437h0M593 426h0M533 201l1.6 0.7M578 369h0M209 610h0M572 86h0M518 653l1.6 0.9M328 493h0M272 534h0M455 415h0M230 459l0.8 -1.0M472 484h0M457 167l1.2 0.5M519 379h0M578 452h0M520 359h0M404 119l-0.9 0.7M473 455h0M544 602h0M469 383l-1.0 -1.0M547 602l-0.8 0.2M353 348h0M202 446l-1.1 -1.0M358 425l1.5 -0.9M529 528h0M372 344h0M365 365h0M315 628h0M73 577h0M492 193l1.1 -0.4M347 171h0M471 571l1.3 0.7M511 256l1.4 -0.4M206 403l1.5 -0.9M289 639h0M414 604l0.7 -1.1M206 527l-1.2 0.2M342 334h0M444 631h0M449 205l0.9 0.4M482 540l0.6 -0.2M344 641h0M478 568h0M370 652h0M444 455h0M107 526l-1.1 1.1M524 624h0M316 175h0M312 624h0M261 634h0M419 520h0M517 461h0M446 547h0M204 532h0M293 646h0M181 435l0.9 1.1M403 380h0M352 618h0M156 310h0M252 652l0.7 -0.5M461 612h0M166 545h0M400 465h0M343 387h0M97 620l0.8 0.6M483 628h0M390 306h0M60 635h0M463 426h0M492 393l1.5 1.1M43 563h0M303 485l-1.5 -0.5M435 240h0M406 601h0M380 528l-0.6 1.1M445 514l1.5 -0.4M111 179l1.5 0.5M341 516h0M419 196h0M523 314h0M350 600l1.4 -0.6M426 389h0M491 211h0M393 596h0M586 206h0M563 165h0M553 500l1.2 1.1M586 445h0M127 438l0.7 0.4M505 525h0M157 551h0M542 488l-1.3 -0.4M322 412h0M133 624h0M462 483l-0.9 0.2M537 394h0M411 108h0M550 85h0M233 563l-1.2 -0.6M549 473h0M197 622h0M150 560h0M101 425h0M460 190l-1.5 -0.4M565 611l-1.0 -0.8M504 427l0.7 0.4M487 523l-1.2 -1.0M412 434h0M281 610h0M509 649h0M279 629l0.7 0.1M438 532h0M515 537l0.7 -0.9M461 450h0M458 361h0M324 443l-0.7 -1.2M141 565h0M354 557h0M273 410l1.5 0.2M528 649l-1.2 0.4M132 446h0M238 601l1.3 -0.4M481 572h0M216 623h0M348 218l-1.3 -0.4M576 444h0M371 114h0M54 188l-0.9 0.9M350 191h0M365 373h0M493 504h0M367 633h0M251 581l1.0 -1.1M118 422l1.1 -0.5M133 367h0M510 241h0M402 285h0M425 431h0M382 276h0M371 426l1.4 0.9M232 639h0M348 605h0M199 588l0.7 -0.0M462 491h0M291 210h0M422 571l0.6 0.4M455 144l0.9 0.2M433 398h0M305 614l-1.5 -0.6M453 640h0M451 365h0M388 309h0M487 339h0M49 566l-1.4 1.1M568 161h0M384 309l-1.3 0.5M380 439h0M88 246h0M394 376l-1.0 -0.9M191 478h0M362 538h0M64 144l-1.5 1.1M554 256h0M180 457l-0.9 -0.6M554 591l-1.5 1.0M529 481l0.7 0.5M578 413l1.3 0.5M423 537h0M253 634l-0.9 -0.3M584 165h0M447 571h0M475 555h0M525 651h0M444 475h0M206 562h0M320 552h0M254 513h0M195 516l-1.6 -0.7M363 279l1.2 0.2M409 643h0M462 325h0M573 518l-0.7 0.5M430 611h0M158 647l0.8 -0.2M557 337h0M538 250l1.0 0.4M576 126l1.4 0.7M540 525l1.5 0.2M332 322h0M423 120h0M401 354l-0.7 -0.8M347 464h0M234 233h0M480 190h0M481 166h0M278 562h0M295 627h0M520 447h0M548 573h0M455 564h0M195 556h0M473 559h0M585 84h0M178 408l1.2 -0.0M50 568h0M137 594l1.6 0.5M451 615l-1.2 -0.4M445 644h0M74 567h0M514 570l-1.0 -0.1M32 521h0M270 584l1.4 0.3M236 534l0.9 0.5M414 405l-1.0 -0.4M592 357h0M582 291l-0.7 0.5M188 575h0M469 582h0M429 121h0M176 549h0M112 430h0M453 398h0M287 454h0M351 563l0.8 0.9M358 518h0M295 284h0M114 651h0M377 246h0M374 240l-1.6 -0.7M589 176h0M289 631h0M537 508l-1.3 0.8M160 550l1.1 0.5M252 629h0M420 372h0M345 254h0M564 462h0M582 274l1.5 -0.0M570 420h0M184 432l1.2 0.8M577 546h0M535 555l1.2 0.1M497 245h0M509 464h0M225 374h0M250 545h0M554 466h0M286 637h0M398 632h0M125 581l-1.1 1.2M104 590h0M569 603h0M462 445h0M443 372h0M590 434h0M565 541h0M286 590h0M499 210h0M509 551h0M536 622h0M440 522h0M400 367h0M243 499h0M258 602l-1.4 -0.5M593 479l-1.5 0.8M562 636h0M89 465l-1.0 -0.3M376 638h0M386 526l-1.4 1.0M468 402l0.8 -1.1M556 454h0M577 577h0M361 404l1.2 0.1M593 481h0M509 290l0.9 -0.9M350 416l1.4 0.1M330 575h0M351 478h0M445 161h0M21 594h0M534 224l-1.2 -1.2M145 488h0M503 365h0M543 247h0M581 315l-1.2 0.8M353 637h0M571 412h0M496 90l-0.7 0.4M563 221l-0.9 -0.2M320 199l0.9 -0.2M219 452h0M468 452h0M336 450l1.1 0.5M570 617h0M551 611h0M21 632h0M337 408l-1.3 0.5M263 482l1.3 1.1M344 287h0M455 388h0M342 478h0M152 579h0M397 481h0M489 206l-1.1 -0.6M452 401h0M583 410l-0.8 -1.1M122 557l-1.3 -0.7M415 560h0M486 235h0M546 647l-1.6 -0.2M370 538l-1.5 0.7M499 195h0M512 403h0M429 551l-1.4 -0.6M168 273l1.1 0.8M213 101l-1.5 0.5M271 595l-1.3 1.2M185 439h0M42 332h0M491 533l-1.2 -1.1M374 533h0M553 579h0M531 607l1.6 0.3M409 499h0M403 259l1.4 -0.9M434 567l0.7 0.9M214 474h0M543 95h0M439 293h0M122 646h0M287 559h0M41 476h0M156 608h0M223 558l-1.0 -0.7M433 383h0M474 159l-1.4 0.9M387 412l-1.0 -0.1M501 419h0M447 380h0M241 475h0M506 326h0M376 647l-0.7 -0.5M443 385l1.2 -0.9M557 492l-1.0 0.2M348 623h0M484 581h0M388 518h0M457 572h0M512 629l-0.9 -0.9M576 314h0M404 428l-1.3 0.1M29 552l1.6 0.9M497 588h0M113 514h0M493 555h0M520 627h0M436 520l-0.9 0.1M200 492l0.7 0.1M493 644h0M333 642l0.7 0.4M190 234h0M516 267h0M312 641l-0.8 -0.7M533 420l-0.9 1.0M260 411h0M470 476h0M411 265l1.6 -1.1M471 420h0M410 653h0M251 621h0M20 392h0M123 443l1.3 0.4M414 314l-0.7 0.2M566 479h0M367 568h0M311 634l0.7 1.0M329 640h0M279 300h0M433 463h0M401 580h0M437 272l-0.8 1.0M147 622h0M434 617h0M243 638h0M146 481h0M565 403l1.4 -0.5M524 595l-1.5 0.2M501 203l0.7 0.8M506 482l-0.6 -0.4M499 517h0M544 527h0M516 417h0M533 242h0M503 247l-1.6 0.7M265 273h0M151 454h0M479 581l1.1 0.1M473 495h0M424 610h0M483 143h0M379 440h0M528 380h0M169 641l-1.0 0.9M561 269h0M465 466h0M337 501h0M123 334h0M55 477h0M438 613h0M569 614l-1.3 0.9M568 503h0M355 450h0M485 527h0M407 640h0M438 499l-1.5 -0.6M524 465l1.5 0.7M549 536l-0.9 -0.5M549 452h0M349 145h0M518 95h0M467 501l-0.7 -0.7M178 580l-1.5 0.2M440 148h0M550 633h0M43 436l1.3 1.0M456 617h0M523 548l0.8 -1.0M549 576l-0.8 -0.5M230 637h0M151 342l1.1 0.1M242 520h0M262 290l0.9 -0.8M537 279h0M495 475l0.6 -1.1M344 523h0M471 440h0M467 282h0M264 329l-1.2 -0.4M594 543h0M501 593l1.2 0.1M497 483l1.0 -0.2M90 227h0M403 488l1.2 0.0M553 309h0M386 454h0M413 549h0M298 410h0M457 333h0M315 421h0M587 461h0M315 553l-1.0 0.8M399 460h0M579 130h0M373 376h0M355 599l1.6 0.6M553 595l-1.1 0.9M272 373l-0.7 -1.1M330 322h0M496 185h0M556 375h0M593 616h0M173 420l-1.4 -0.2M340 273l1.2 0.9M398 450h0M528 614l1.0 -0.6M171 433h0M199 119h0M456 556h0M372 587l0.8 1.2M322 428l-0.7 -1.0M113 553h0M165 401l-1.5 -0.3M569 513l-1.0 0.4M521 482h0M258 567h0M535 617h0M422 423h0M591 534h0M517 270h0M481 110l-0.7 0.4M418 284l-0.8 0.2M452 401h0M162 642l0.9 0.2M237 86h0M348 545h0M372 330l0.9 -1.2M474 260h0M469 259l-1.0 -0.6M469 230h0M211 431l0.8 -0.8M265 588h0M250 520h0M303 403l1.0 0.7M254 233h0M241 514h0M579 447l-0.9 -0.9M340 513h0M505 126l0.9 0.1M459 502h0M441 646h0M409 177l1.3 0.8M535 285h0M384 142h0M490 587h0M522 504h0M330 635l-1.5 0.8M392 422l-0.8 -0.9M390 398h0M109 588l-1.3 0.1M85 604h0M68 375h0M497 536l-1.1 0.6M271 125h0M270 640h0M590 211h0M359 525h0M334 251h0M345 439h0M470 385h0M318 447h0M411 450l-1.0 0.2M123 342h0M236 480l-0.7 0.9M351 559l-1.2 -1.2M562 597l-1.4 -0.3M313 640h0M240 188h0M477 452l1.5 -0.2M526 606h0M216 240l-0.9 0.9M589 371h0M529 590l1.1 1.1M556 612h0M420 627h0M579 432h0M82 551l-1.3 -1.1M491 160h0M485 423l0.9 0.5M587 132h0M342 270h0M349 579l0.9 -0.1M85 562h0M537 498l-0.8 0.7M474 289h0M448 339l1.5 1.0M541 638h0M330 272h0M552 486h0M439 464h0M532 465h0M470 599h0M554 602h0M414 420h0M214 333h0M358 292l-0.6 1.2M185 471l-0.8 1.0M421 518h0M226 518h0M560 89h0M561 604l1.3 -0.1M44 481h0M400 409h0M573 297l1.1 0.6M506 274l1.4 -1.0M348 529l1.5 -1.0M443 100h0M262 470l1.1 -0.6M106 600h0M584 341h0M451 86h0M546 357h0M108 604l0.9 0.9M336 435h0M587 458h0M514 511h0M569 413h0M406 504l-1.6 -0.5M92 585h0M43 528l1.5 -0.2M582 124h0M144 624l0.7 -0.3M259 639h0M523 105h0M345 279h0M268 561h0M444 622l-0.7 0.0M314 591h0M565 423l0.7 -0.6M198 553h0M412 233l-1.5 0.5M572 244h0M530 465l-0.9 -0.7M488 546l1.4 0.1M534 540h0M245 617h0M572 118l-0.8 -0.5M32 483l1.1 0.8M84 612h0M131 537h0M397 345h0M304 387l-0.7 0.6M276 608l-1.0 1.1M180 596h0M491 210h0M351 312l0.6 -0.5M33 619h0M411 501l1.3 1.1M323 442h0M541 196h0M437 573l1.6 -0.4M533 460l-0.8 0.5M366 182h0M416 557l0.8 -0.7M571 521h0M134 104l0.7 0.3M566 645h0M409 445l1.3 0.8M269 488h0M467 357h0M428 92h0M213 295h0M498 447h0M160 573l1.3 -0.0M433 459l1.4 -1.1M398 293h0M405 413h0M359 341h0M376 348h0M40 630l1.1 -0.0M292 395h0M557 622h0M421 259l0.9 -0.7M567 468h0M220 546l1.4 -0.5M197 622l1.0 1.2M167 272l1.3 -0.1M373 635l0.7 0.5M432 185l-1.1 0.4M264 217l1.5 0.3M341 409h0M549 320l1.4 0.9M561 250h0M471 536l-1.4 -0.6M425 574h0M557 649h0M593 518l-0.7 -0.1M345 569l-1.2 0.8M100 505l-0.8 0.9M419 310l0.6 -0.7M531 191h0M445 101l0.8 -0.2M107 544h0M299 592l-0.9 0.8M180 306h0M439 515l-1.1 -0.8M475 87l-0.8 0.9M281 617h0M200 598l0.8 -1.0M539 604h0M168 362l-0.6 0.1M283 625h0M477 609h0M434 608h0M285 528h0M388 479l-1.2 0.8M557 187h0M472 351h0M554 185l1.0 0.6M564 361h0M461 126l-1.6 -0.9M282 377l1.4 0.6M528 521l-1.5 1.1M508 192h0M417 551l1.0 1.0M353 272l-0.6 -0.3M412 522l0.8 0.4M292 538h0" fill="none" stroke="#6c3f8c" stroke-width="1.0" stroke-linecap="round" opacity="0.53"/>
<path d="M63 463l0.7 -0.7M81 458l1.2 0.8M121 169l-1.0 -0.5M190 87l0.9 0.1M406 106h0M160 262h0M242 313h0M198 510h0M130 92l-1.2 0.1M477 147h0M253 432l-1.3 0.0M130 309l-0.9 -0.8M485 180h0M55 341h0M492 516h0M121 401h0M310 446h0M135 211l-0.9 -0.8M426 521l1.1 -1.0M44 516h0M115 446h0M255 346l1.2 0.1M441 92h0M422 298h0M176 332h0M166 284h0M252 125h0M185 345l1.3 0.1M37 311l0.9 0.2M164 381l-1.5 0.7M209 257h0M27 613h0M26 82l1.4 -0.2M271 393h0M267 409h0M90 215l0.7 0.2M44 360h0M192 104h0M86 604h0M294 263l-0.7 -1.2M155 617l-0.9 -0.5M233 210l-1.1 -0.4M300 129l0.8 -0.8M246 460h0M58 494h0M161 281h0M338 180l0.7 0.9M77 148h0M168 343l1.2 -0.3M100 334h0M440 146h0M224 254h0M134 248l0.8 0.0M36 194h0M314 372h0M132 246l-0.9 -0.9M417 317l1.3 -0.0M81 326l1.1 0.6M358 119l0.7 0.3M167 298l0.7 0.2M324 216h0M113 486h0M316 437h0M285 391h0M127 431h0M320 130h0M140 371h0M85 129h0M232 167h0M355 209l1.3 0.1M31 496l0.8 0.4M325 572l0.9 -0.6M264 411l-1.5 0.5M44 270l0.8 -1.0M216 482h0M237 313l1.1 0.2M126 281l0.8 1.1M372 461h0M58 487l-1.2 0.5M570 268l1.0 -0.6M333 160l-1.1 -0.7M96 574l1.3 -0.1M482 633h0M27 226l-1.2 -0.9M566 193h0M550 121h0M278 159l-0.7 0.5M111 295h0M389 116h0M332 349h0M292 509h0M126 90h0M377 102h0M76 301l1.0 0.4M51 616l1.4 -0.6M53 366h0M343 89l0.7 0.6M39 341l1.2 0.6M291 125l-0.6 0.8M201 611h0M28 278h0M453 163h0M139 187h0M313 214h0M70 406h0M135 431l-1.4 1.2M179 236h0M322 265l-0.8 1.2M134 499h0M236 537h0M280 423l-0.7 -0.9M478 95h0M240 514h0M99 366h0M354 387h0M441 254h0M162 150h0M202 462h0M168 370h0M235 412l1.5 -0.2M104 113l-1.4 0.5M329 135h0M576 168l1.1 -1.0M170 268l1.2 -0.7M29 251l-1.2 -0.4M335 476h0M33 131h0M283 99h0M26 504l0.9 0.5M384 302l-0.9 -1.2M154 402h0M255 179h0M450 154h0M249 170h0M509 336l1.1 0.8M139 113h0M452 396l1.4 -0.2M350 181h0M178 244h0M77 490l-1.1 -0.1M20 466l1.1 0.9M87 312h0M323 84h0M77 501h0M79 338h0M319 84h0M80 98l1.6 -0.8M42 586l-0.8 -0.5M28 497h0M478 159h0M30 542h0M545 291h0M101 267h0M532 172h0M419 438h0M476 215h0M305 139l-1.4 0.7M285 212l1.0 0.6M100 288l-0.7 0.0M89 303h0M54 138h0M324 528l-1.4 0.0M246 385h0M126 378l1.0 -0.9M368 315l1.1 1.0M217 173h0M515 220l-1.1 0.9M450 157l-0.8 0.3M467 172h0M38 183h0M352 201l-1.5 0.6M304 126l-1.1 0.9M530 475l-0.8 -0.2M283 228h0M111 411l-0.9 0.7M489 116h0M279 453h0M115 452l0.9 0.6M356 95h0M539 528h0M156 101h0M39 211l-0.8 -0.8M149 276h0M338 404l-1.4 -0.6M359 158l-0.7 0.8M52 530h0M87 221l1.1 0.2M537 278l-0.8 -0.1M423 139h0M93 325h0M106 572h0M150 85h0M55 479h0M202 237l-0.9 0.4M47 571h0M386 232l1.5 -0.8M73 395l1.3 0.1M82 186l1.1 -0.2M124 501h0M274 159l1.4 -1.1M183 105h0M48 518l-1.1 -0.8M147 571h0M31 386h0M94 244h0M223 90h0M134 325h0M103 210h0M475 231h0M191 621h0M283 348h0M227 628h0M262 480h0M123 641h0M484 354l0.6 -1.0M348 340l1.5 0.7M232 211l-0.9 -0.1M133 331l-1.6 -1.2M179 266l-1.2 -0.7M326 232l1.3 -0.5M66 514h0M221 321h0M95 585h0M190 480h0M448 410l1.5 -0.8M504 88l1.2 0.8M240 248h0M526 101l-1.0 1.0M272 203h0M137 320h0M419 480h0M296 311l1.4 0.8M126 117h0M121 562l-1.1 0.1M260 267l-1.1 -0.1M370 181l-1.3 0.2M414 464l-1.6 -0.5M363 118h0M128 293h0M492 125l1.1 1.0M241 298h0M409 279h0M101 570l-1.5 0.7M85 113l0.6 0.9M136 377h0M257 182l1.4 -0.4M20 620h0M253 158h0M95 521l0.8 0.6M166 515h0M249 169l0.6 -0.2M286 527h0M356 156h0M298 605h0M97 111h0M241 177h0M25 321h0M236 648h0M397 171h0M47 626h0M250 99l-1.3 0.4M287 311h0M149 101h0M350 266h0M289 101h0M213 215h0M264 431h0M582 101h0M77 384h0M107 521h0M113 211l1.5 -1.0M49 363l1.6 -0.4M149 131h0M128 502h0M415 572l-1.6 -0.8M578 103h0M223 83h0M169 494h0M162 465l1.4 -1.2M183 419h0M26 307h0M267 106h0M181 210h0M23 356h0M189 499l-1.5 0.9M261 537h0M95 316h0M98 303l-1.0 0.8M541 85h0M24 107h0M69 446l-0.6 -0.7M44 150h0M155 99l0.9 0.5M266 158l1.5 0.4M167 239h0M44 246h0M334 305h0M49 483l0.7 -0.2M60 630l-1.3 0.3M359 259l1.6 0.6M229 138h0M154 588h0M234 351h0M70 234h0M300 207l0.8 0.4M204 520h0M126 177l-0.8 0.1M213 163h0M31 136l1.2 -0.7M359 168h0M297 553l1.3 -0.9M90 84h0M268 441h0M257 499l1.0 -0.5M265 323h0M160 314h0M224 568h0M390 202l1.3 0.8M150 91l1.0 0.5M548 176h0M118 593l1.3 0.5M56 377l-0.8 0.1M506 121h0M63 502l1.0 -0.1M582 426h0M274 237h0M527 393h0M48 394l-1.0 -0.9M76 267h0M225 320l-0.8 -0.6M193 121h0M555 85h0M135 315h0M314 216h0M485 236h0M255 182l-1.1 0.6M147 646l-0.8 0.4M26 524h0M292 360h0M350 362l-1.2 -0.9M227 432l-1.1 -0.4M163 166h0M520 351l-0.7 0.6M453 156h0M318 310h0M80 323h0M434 298l1.0 -0.0M553 202h0M343 320h0M40 548h0M135 383h0M140 377l1.2 0.1M193 375h0M244 314h0M248 169h0M123 619h0M333 171h0M320 304h0M313 159h0M280 109l0.9 0.0M257 380l-0.9 0.5M27 361l-1.4 0.4M225 451h0M180 108h0M422 514h0M274 268h0M521 164l1.0 0.0M149 254h0M233 398l-1.2 0.7M33 350l1.4 0.5M173 617l-1.0 -0.4M252 399h0M531 139l1.3 -0.3M93 547h0M509 282l1.3 -0.8M340 190h0M64 162h0M157 182l-0.7 0.5M146 434l-1.3 1.1M28 354l-1.2 -0.5M282 571h0M237 120h0M442 451h0M224 517h0M576 529l1.1 -0.8M158 216h0M321 350l-1.5 -1.2M27 267h0M269 136h0M163 331l-1.5 -1.2M478 127l1.2 -0.4M192 272l-0.7 -0.2M351 196h0M233 233l0.6 -0.8M40 263h0M345 93h0M532 200l-1.5 -0.5M37 265h0M125 183l-0.7 0.4M166 258l-1.2 -0.3M119 417l-1.3 0.6M404 441l0.8 -0.1M152 314l-1.6 1.2M110 534h0M590 237h0M202 216h0M453 305l-0.9 -1.0M132 441l-1.5 -0.5M34 532h0M189 352h0M21 137h0M296 400h0M99 502l-1.6 -0.2M132 523h0M125 451h0M217 315l-1.1 0.6M310 464l1.3 -0.3M187 346h0M406 318l0.8 -0.9M79 306h0M347 147l1.3 -1.1M70 118h0M364 104h0M71 312h0M533 104h0M42 250h0M134 370l1.5 1.2M139 195h0M359 200l1.4 -1.0M423 132l-1.4 -1.0M193 348l-0.9 -0.9M231 300l-0.8 0.7M65 609h0M184 225l-0.7 -0.6M165 280l1.3 0.9M20 445h0M56 488h0M372 381h0M243 244h0M146 115h0M309 591l-1.1 -0.3M96 457l1.5 -0.1M400 130h0M77 160h0M123 401h0M78 148h0M389 422l0.9 0.3M192 439h0M208 255h0M92 519l0.9 0.1M479 247l-0.8 0.3M454 368h0M202 273l1.4 0.2M266 448h0M107 431l-1.3 -0.3M261 220l1.5 -1.0M53 287h0M131 497l0.9 -0.5M464 368l-1.1 0.4M157 163l-1.4 -0.5M81 389l-1.0 0.8M141 459l1.0 1.0M99 332h0M140 575h0M89 214l0.6 -0.8M389 203h0M125 416l-0.8 -0.4M20 340h0M101 82l-0.7 -0.6M326 125l1.4 -0.1M132 435h0M265 116h0M111 132l-1.0 -1.0M104 222l1.0 0.2M167 364h0M242 285h0M125 337l0.7 -0.9M124 243l-1.1 0.8M406 262h0M22 319h0M174 161l1.5 0.4M537 189l1.1 1.2M184 280h0M410 625l-0.8 0.3M525 480h0M174 119h0M145 163h0M47 592l0.7 0.8M141 569h0M564 374h0M367 368l-1.0 0.8M387 227h0M546 243l-0.7 0.3M458 136l-1.4 1.1M522 126l-1.1 0.7M324 479l-0.8 0.1M312 449l1.2 -1.1M54 221h0M312 126l-0.9 0.3M335 103h0M108 348l-1.1 -1.0M73 292h0M293 106l-1.0 -0.6M389 120l-1.1 -0.6M101 351h0M341 120h0M576 85h0M560 86h0M54 336l-1.3 -0.5M130 470h0M427 331h0M281 252h0M28 435l1.5 1.2M44 310l-0.6 -1.1M250 404h0M429 288h0M81 409l1.0 1.1M428 612h0M182 559l-0.7 1.2M304 162h0M103 380h0M171 592h0M139 164h0M394 501h0M133 217h0M134 89l-1.2 0.1M361 217h0M575 182h0M146 337l1.0 0.1M389 376l-1.3 -0.2M57 572h0M467 595h0M334 204l1.1 -0.7M277 371l-1.3 -0.9M262 216h0M224 99h0M298 357h0M485 206h0M276 310h0M206 189h0M97 278h0M33 563h0M127 122h0M326 335h0M464 85l-1.1 -0.1M379 451h0M29 140l-0.7 0.0M262 231h0M157 625l-1.3 -0.4M194 625h0M157 99h0M229 352h0M186 173h0M192 582h0M48 195h0M150 506h0M358 237l-0.8 1.0M55 161h0M223 470h0M191 279h0M73 202l1.2 0.7M222 99l0.8 -0.1M171 398h0M97 189h0M134 336h0M100 132h0M36 230h0M212 124h0M198 101h0M358 164h0M196 280h0M393 115h0M249 292l-1.4 -0.6M161 158h0M237 188l0.9 -1.1M183 231h0M100 435h0M22 527h0M159 366h0M247 218l-0.9 0.4M283 282h0M45 592h0M276 123l-0.8 -0.3M77 260l-1.0 -0.6M37 398h0M385 210l-1.2 0.5M125 107l-1.4 1.1M66 145h0M155 338l1.4 0.8M459 301h0M492 109l1.3 1.1M193 534l0.8 -0.7M234 252h0M170 98l1.2 1.0M152 98h0M123 628h0M564 147h0M52 271l0.6 0.6M93 172h0M31 390h0M211 339h0M183 435l-1.5 -0.9M301 145h0M212 322l-1.6 0.9M24 126h0M73 316l1.6 -0.3M222 552h0M78 424l-0.7 0.8M140 572h0M529 113h0M306 327l-0.7 -0.7M585 194h0M158 352l-1.4 -1.1M309 278h0M497 170h0M59 427l-1.2 0.8M124 190l0.8 0.2M225 138h0M164 216l-1.2 -1.2M419 258h0M286 443l-1.3 -0.1M89 459h0M73 436h0M125 217h0M73 394l0.8 0.6M264 119h0M122 576h0M60 451l0.8 0.2M588 102l1.3 -0.2M347 216l0.7 -1.0M188 299h0M127 317l-1.6 -0.6M291 141h0M270 433h0M515 176h0M24 409h0M22 519l-1.2 1.1M141 240h0M278 391h0M254 143h0M32 578h0M68 232l-1.6 -0.7M320 539h0M277 275h0M267 269l1.5 0.4M412 199h0M231 591h0M207 589l-1.2 0.7M254 488l0.9 -0.9M269 353h0M505 272h0M157 268h0M162 453h0M31 128h0M392 83h0M513 167h0M283 383l-1.0 -0.2M49 194l0.8 0.2M160 142h0M132 295l-1.0 -0.7M90 338h0M284 328h0M412 455h0M261 286h0M134 133h0M310 221l-1.1 1.1M94 318h0M169 99h0M59 504h0M69 140h0M450 339h0M63 501h0M72 451h0M404 243h0M249 456h0M96 314h0M511 263h0M377 324l-1.0 -0.7M278 222h0M165 503l0.9 -0.5M93 190l-1.5 0.6M390 563h0M234 236h0M217 439h0M227 380h0M236 280l-1.5 -1.0M146 388l-1.3 1.2M168 486l-0.7 0.3M232 348h0M539 251l0.7 -0.6M426 218l0.7 0.1M79 481h0M252 163h0M106 130h0M386 180h0M382 367h0M448 88l1.1 0.6M336 344l-0.6 0.3M44 399h0M124 89h0M529 233h0M167 130h0M309 332l-0.7 -0.3M380 285l1.1 1.0M339 87h0M178 514l-0.8 -1.2M208 518h0M341 420h0M438 154h0M230 463h0M521 173h0M304 93l-1.1 -0.6M180 269l-0.8 0.3M66 356h0M377 240h0M69 476l1.3 1.2M109 337h0M211 236h0M60 288l-1.2 -0.1M363 218h0M102 383h0M143 525h0M255 110h0M270 480h0M211 208h0M526 311h0M217 418l1.1 -0.6M138 613l-0.7 0.5M379 474h0M43 645h0M396 402h0M144 431h0M466 95l-1.2 -1.0M178 137h0M175 337h0M386 258h0M172 434h0M91 111l1.2 -0.1M200 218h0M233 399h0M192 362l1.0 -0.8M535 387h0M87 193l1.0 -0.5M286 226h0M404 363h0M160 249h0M40 347h0M77 127h0M157 587h0M142 542h0M550 262h0M257 523h0M404 218h0M70 154l-0.7 0.3M115 580l-1.2 0.7M274 393l-1.1 0.9M246 249l-1.6 0.4M297 144h0M470 226l1.2 -0.6M94 549h0M247 395h0M25 241l-0.7 -0.6M119 325h0M366 196h0M386 84l1.5 -0.0M213 228h0M425 152h0M194 603l-0.8 0.2M366 139l1.3 -0.7M218 369h0M193 156h0M22 136h0M152 446l-1.0 0.1M85 402h0M286 465l0.8 -0.4M568 566h0M281 447h0M86 82h0M350 307h0M167 475l0.6 -0.2M234 105h0M49 164h0M164 300h0M531 561h0M195 160h0M80 634h0M318 88h0M198 164l1.0 1.2M577 292h0M276 310l-0.8 -0.6M62 358l1.2 1.1M329 353h0M63 542h0M477 182h0M154 518h0M290 93l0.9 0.4M105 94h0M396 84h0M419 114h0M95 350l-1.0 -0.2M127 90h0M516 275l-1.0 -1.0M507 171h0M156 487h0M21 236l1.2 0.0M360 141h0M67 427h0M110 157h0M147 380l-1.2 0.2M458 212h0M387 154h0M24 120h0M294 155h0M68 632h0M53 140h0M82 490l-1.0 1.0M113 412h0M258 480h0M66 285l-0.8 0.6M113 255l0.6 0.5M101 405h0M385 330h0M388 154h0M228 577l-0.9 -0.6M444 468h0M415 182h0M211 196h0M178 225h0M556 94h0M47 225l-1.1 -1.0M564 268l1.2 0.5M176 169h0M191 278l-1.0 -0.3M69 266h0M438 260h0M304 152h0M62 466h0M82 127h0M298 377l-0.6 0.7M222 323h0M320 89h0M109 83h0M284 128l-1.5 -0.3M223 108h0M70 110h0M357 166l1.0 0.6M142 524h0M339 144h0M81 245l-0.7 0.4M99 297l-1.3 1.2M40 405h0M346 367l0.7 -0.3M244 90h0M162 208l-0.9 -0.4M109 275l0.7 -0.8M163 156l1.0 -0.1M398 380h0M78 379h0M267 489h0M144 155l1.1 0.3M479 231l0.8 -1.0M149 124l-1.3 -0.3M373 503h0M397 426h0M254 399l-0.8 -1.0M73 516l-0.9 1.1M216 131l-1.0 0.2M20 510h0M200 154h0M151 431h0M148 327h0M40 97h0M31 243h0M286 254h0M316 350l-0.6 -1.1M147 358l-1.4 0.8M61 143h0M49 103l-0.9 -0.5M276 213h0M193 406h0M295 472h0M226 603h0M198 481l1.6 -0.7M241 146h0M497 217l1.4 0.5M108 373l-1.4 0.7M169 127l-1.4 0.9M77 583h0M339 190h0M245 312h0M362 91h0M380 270h0M248 511h0M92 561l-1.0 -1.1M47 128h0M283 405h0M511 83h0M99 520l1.4 0.3M144 117h0M303 592h0M160 651h0M97 162h0" fill="none" stroke="#4c5052" stroke-width="1.5" stroke-linecap="round" opacity="0.62"/>
<path d="M516 615l0.9 0.4M353 216h0M486 453h0M190 521h0M148 573h0M400 589h0M519 394h0M243 650h0M308 617h0M144 460l1.4 -0.8M546 408h0M71 577h0M134 504l1.0 -1.1M415 178l-1.3 0.1M159 386h0M557 400h0M307 595h0M136 550h0M544 513l0.7 -0.2M194 528l-1.3 0.7M443 500h0M511 549l-1.1 -0.1M161 480h0M326 520h0M496 161l-0.9 -0.7M443 591h0M275 442h0M262 649h0M349 310l0.9 0.4M480 568h0M326 654h0M35 248h0M400 377l-0.7 0.9M54 564h0M375 505h0M591 400h0M359 581h0M29 638l1.4 -0.7M434 93h0M257 451l-1.0 0.9M340 615h0M537 256h0M496 598h0M387 446l1.1 0.1M373 340h0M323 447h0M521 121h0M319 427h0M339 284h0M482 376h0M274 299h0M356 99l1.1 0.2M319 601l1.3 0.0M373 345l1.4 0.9M208 490h0M563 508l-0.7 0.6M382 124h0M285 614h0M546 233l1.4 -0.7M304 584h0M302 391h0M350 591h0M397 579h0M505 560h0M30 509l-0.6 1.1M346 202h0M424 442h0M581 565h0M568 341h0M514 553h0M290 186l1.6 0.4M255 279l-1.0 -0.6M580 635h0M323 414h0M552 412l1.0 0.5M514 460h0M548 409h0M512 621h0M520 515h0M155 559h0M280 568l-0.6 1.1M455 564h0M459 102l-1.1 -0.7M289 456h0M440 205h0M576 189l1.4 1.1M153 131h0M415 564h0M76 446h0M349 199l1.4 0.7M406 181h0M533 320h0M132 632l1.1 -0.4M475 655l-1.1 -1.2M167 223h0M493 518h0M538 187h0M439 417h0M478 354h0M73 612l1.2 -0.5M339 639l1.4 -0.3M330 146l-0.9 1.0M353 565h0M525 652h0M480 590h0M474 603h0M142 300l0.9 -0.6M375 408l-1.0 0.6M458 618h0M566 371h0M517 288h0M457 83h0M445 437h0M561 579h0M167 223h0M488 640h0M567 129h0M197 640l-0.7 -0.7M458 241h0M394 377h0M198 628h0M471 641l0.7 -1.1M286 181h0M120 647h0M551 327l1.5 0.5M577 257l1.0 -0.7M306 509l1.1 -0.8M246 648h0M424 304h0M569 439h0M400 414h0M40 642h0M307 359l-0.9 -0.5M164 506h0M483 498l1.1 1.2M252 579h0M489 652l0.9 0.4M179 542h0M587 198h0M544 110l-0.8 1.0M292 149h0M449 420h0M258 530h0M242 614h0M412 436l0.7 0.4M505 447l1.5 0.3M63 632l-1.3 -1.1M550 402h0M456 492h0M533 471h0M587 226l-1.1 0.8M287 639l1.3 -0.5M112 555l1.2 0.6M336 568h0M270 478h0M533 555l-0.8 -0.3M582 630h0M185 573l-0.9 -0.9M263 547l-0.6 -1.0M543 298h0M430 650h0M209 260l-1.4 0.9M178 368h0M301 553h0M571 266l-0.7 0.6M540 603l-1.2 0.6M589 525h0M325 450h0M205 345l-0.9 0.6M275 594l-1.5 0.5M561 202h0M293 479l1.3 0.8M590 421l1.4 0.7M168 281h0M499 525h0M446 631h0M266 230l1.0 -1.1M291 424h0M296 143h0M232 591l0.7 -0.8M185 563h0M591 647l0.8 -0.2M456 611l-1.0 0.7M509 577h0M469 331h0M329 632h0M554 231l0.7 0.2M443 211l0.8 0.9M333 255h0M590 515l-1.1 0.4M549 406l-0.8 0.7M570 222l1.5 0.7M217 641h0M535 212h0M522 251h0M472 514h0M541 433h0M179 120l1.2 0.2M239 597l0.7 0.7M525 600l-0.8 0.5M384 558l-1.4 0.2M586 329h0M561 177h0M186 331h0M385 533h0M129 506h0M421 490h0M118 507h0M398 529h0M515 448h0M471 307l0.6 -0.9M116 589l0.8 0.6M525 453h0M475 223l-1.2 0.7M367 458h0M353 329h0M111 562h0M203 243h0M259 564h0M528 533h0M178 551h0M506 438l-0.6 -0.8M341 338l0.8 -0.6M265 274h0M214 369h0M296 624h0M281 631l0.7 0.5M551 599h0M359 223h0M474 601l-1.0 0.9M292 412l-1.4 -0.1M391 329h0M408 546h0M385 410l0.7 0.4M342 521h0M250 497h0M351 634l-1.5 0.2M545 85h0M588 427l1.0 1.2M570 238h0M465 460l-1.4 0.5M453 600h0M508 589h0M535 634l-1.1 0.2M563 461l1.6 -0.8M391 444h0M528 303h0M502 220l-1.6 -0.2M406 588l1.2 -0.8M165 655h0M536 129h0M485 616l0.8 0.2M356 621l0.8 -0.8M542 409h0M424 225h0M19 609h0M473 529l-1.5 0.8M175 586l1.5 0.2M593 225h0M555 417h0M566 397h0M442 579h0M427 341h0M268 255h0M487 137h0M128 521h0M562 631h0M60 254h0M207 467h0M403 482l-0.7 -0.8M169 602h0M346 643h0M326 587h0M160 619h0M462 570l1.1 -0.9M574 166h0M500 425l0.8 -0.1M198 568h0M467 365h0M326 579l-1.5 0.9M417 352h0M369 533h0M328 281h0M438 546h0M431 265h0M585 653h0M428 168h0M411 420l-0.8 -0.3M491 400l-1.3 0.1M71 599h0M364 580l0.7 -1.1M128 648h0M308 373h0M297 638l-1.2 0.3M330 497h0M543 547l1.2 0.1M216 541h0M83 459h0M478 468l-1.2 -0.1M65 513h0M492 410h0M350 612h0M47 615l1.0 -0.2M460 346h0M363 215h0M126 307h0M418 613l-1.2 -0.9M182 564l0.8 -0.8M476 295h0M99 393l1.5 -0.8M261 611l-1.0 -0.3M71 367h0M218 335l0.9 -0.7M587 350h0M90 618h0M321 412h0M558 569l1.0 -0.9M380 403h0M590 480h0M77 189h0M140 655l-1.5 1.0M534 346h0M478 378l1.1 -1.0M243 607h0M416 439h0M585 205h0M302 350h0M294 613l0.7 -0.3M39 435h0M194 444h0M387 536l0.9 0.4M518 354h0M503 329h0M568 233l0.9 0.2M426 565l0.6 0.6M530 549l-0.7 -0.2M521 252h0M580 230l-1.3 0.2M556 388h0M542 271h0M578 486h0M333 359h0M244 514h0M512 337h0M413 315h0M552 626h0M225 365h0M165 329l0.9 0.7M258 387h0M43 118l-0.6 0.3M462 514h0M579 90h0M567 411h0M355 442l0.6 0.5M480 638h0M580 162h0M401 352h0M370 631l1.3 1.2M414 496h0M116 594h0M421 302h0M397 451h0M583 386h0M289 369l1.4 0.8M556 615h0M102 457h0M563 97l1.3 0.2M493 583h0M277 467h0M585 415l1.0 -0.4M332 440h0M336 336l-1.6 0.4M382 274h0M300 607h0M574 103h0M95 358h0M242 430l1.3 0.3M525 139h0M411 523h0M407 506h0M139 640l1.6 0.4M475 570h0M465 427h0M271 583h0M170 642l-1.4 -0.2M511 629l-1.5 0.3M295 517l-1.0 1.1M229 487h0M404 462h0M572 526l-0.9 -0.3M425 257h0M243 499h0M224 245h0M564 597h0M530 487h0M418 547h0M185 448l-1.4 -0.2M364 299h0M337 593h0M251 239l-1.4 -0.4M196 581l0.8 0.6M271 570l-0.6 1.0M576 610l-1.3 -0.4M56 496h0M543 213h0M236 506h0M187 558l1.3 0.2M482 370h0M327 636l-0.9 1.1M50 632l1.5 -1.2M207 559h0M74 534h0M372 109h0M316 630l-1.3 -0.6M498 318l0.8 -0.2M463 253h0M354 287h0M251 549l1.4 -0.3M375 321l0.8 -0.2M353 295h0M415 613h0M459 399l0.8 1.0M388 578h0M334 369h0M451 518l-1.0 -0.7M563 130h0M396 481l1.4 -0.1M237 353h0M589 445h0M355 545l-1.0 0.2M453 194h0M143 609h0M479 631h0M181 556h0M427 463l1.3 1.0M259 321h0M594 511h0M344 467h0M411 614h0M502 346l1.5 -1.0M553 204h0M83 648h0M548 207h0M268 462h0M380 501l0.8 -0.3M177 563h0M312 631l-1.4 0.0M466 141h0M583 318l1.6 0.7M116 370h0M475 175h0M290 579h0M367 424l-1.3 0.1M279 543h0M494 625l1.5 -0.8M557 288h0M363 349l-1.5 -1.1M407 614h0M576 469h0M464 465h0M376 601h0M539 554h0M195 523l-1.4 0.2M202 337l-0.9 1.0M280 154l-1.5 -0.2M343 299l0.7 1.2M507 267h0M321 212h0M374 134h0M566 427l-1.0 0.1M461 602l-1.5 -0.3M586 552h0M259 467h0M299 429h0M430 471l1.0 0.2M572 456h0M469 150h0M404 641h0M534 322h0M434 116l-1.0 0.3M410 336h0M383 199l0.7 -0.3M108 581h0M433 453l0.7 -0.5M107 261l-1.1 -0.4M541 409h0M379 571l1.4 0.1M305 279h0M534 610l1.3 -1.1M581 231l0.8 -0.5M480 247l1.0 -0.9M207 388l-1.5 0.6M451 585l-1.3 0.5M372 417h0M416 573h0M512 161h0M420 112l-0.7 -0.1M459 338h0M318 197h0M527 556h0M464 581h0M523 426h0M293 345l-1.2 -1.2M549 378l-1.1 0.8M478 643h0M289 559h0M429 198h0M566 649h0M457 176h0M553 328h0M21 584l0.8 1.0M285 357h0M485 209h0M485 490l1.5 -0.2M91 496h0M495 401l1.4 -0.1M548 627h0M307 162h0M394 611h0M573 282h0M417 339h0M499 532h0M409 416h0M236 573h0M237 491h0M134 481l-1.4 -0.6M378 90h0M294 222l1.4 0.2M67 624h0M505 604h0M547 199h0M305 156h0M415 504l1.3 -1.0M402 298l-1.2 -0.4M542 301h0M437 547h0M212 628h0M561 516l-0.6 -0.6M506 582l-0.6 -0.4M294 581h0M321 464l1.5 0.7M112 613l1.0 -0.1M497 378h0M532 391h0M353 221h0M268 641h0M446 96l0.7 -0.1M532 530h0M565 284h0M196 328h0M499 364h0M499 103h0M576 312l-0.8 0.8M254 203h0M240 591h0M386 93l-1.5 0.4M527 478h0M254 528l1.1 -0.0M139 453h0M165 498h0M534 642h0M552 377h0M310 533h0M399 614h0M381 573l1.4 0.0M481 404h0M416 579l0.9 -1.1M591 100l0.8 0.8M366 195h0M414 475h0M376 560l-0.7 -0.6M124 465l1.1 0.1M338 471l-0.9 0.6M581 540h0M355 268h0M550 279h0M145 342h0M573 495h0M457 230h0M396 307h0M53 410h0M157 536h0M424 322h0M564 629h0M495 387h0M426 453h0M233 607l-1.3 0.2M297 471l-1.3 -0.9M406 350h0M571 546l-1.1 0.8M300 553l-1.0 1.0M471 336h0M297 526h0M411 362l-1.0 -0.7M165 264h0M447 260l1.1 -0.1M435 220h0M526 468h0M588 506h0M312 487h0M544 344l1.5 -1.1M395 388l-1.1 0.1M377 540l1.0 -0.1M374 280l-1.1 -0.0M157 285h0M559 296h0M131 568h0M190 472h0M467 475h0M588 505h0M552 206h0M366 450l-1.4 0.2M413 414h0M588 312h0M437 459h0M510 579h0M420 147h0M415 561h0M365 512h0M518 472h0M144 445l0.7 0.7M538 559h0M535 601h0M463 352h0M213 632h0M385 594h0M551 322l-0.8 0.3M129 328h0M425 185l-1.3 1.1M151 547h0M337 572h0M37 480h0M231 482h0M422 620h0M24 543l0.8 0.1M425 597l-0.9 -0.4M73 446h0M401 655h0M492 531h0M500 537l1.3 0.9M465 290l-1.0 0.3M96 271l1.4 -1.1M538 382h0M175 648h0M571 245h0M502 352l-1.4 0.1M390 465h0M240 462h0M428 599h0M536 542h0M447 516l-1.2 0.6M253 403h0M205 283h0M351 427h0M251 530h0M242 623l-1.1 1.0M338 591h0M470 637h0M429 161l1.4 0.9M519 634h0M287 402l-0.6 0.9M138 528h0M473 451h0M444 539h0M211 459l-1.5 0.9M545 467h0M452 290l1.4 1.2M528 488h0M29 450h0M422 479l-1.1 1.0M70 305h0M406 608h0M449 484h0M551 578l-1.6 1.0M63 469h0M202 550h0M557 527l-1.1 0.2M319 487h0M546 639h0M571 119h0M506 564l-1.1 -0.8M210 450h0M567 266l0.9 -0.1M325 468l1.0 0.1M401 262h0M579 425h0M372 601l0.9 -1.0M374 503h0M416 136h0M502 485l0.7 0.6M346 301h0M285 567h0M442 228h0M89 432l-0.9 1.2M528 543h0M544 626h0M582 637h0M274 587h0M543 434l1.3 -1.1M391 590h0M528 652h0M319 540h0M341 628l-0.9 0.7M439 631h0M254 205h0M484 229h0M487 385h0M210 477h0M537 518l-1.0 -1.1M536 377h0M411 559h0M427 426h0M394 535h0M48 630h0M125 561l-0.7 0.6M350 456h0M522 639h0M132 254h0M553 269h0M449 651l-0.6 -0.4M428 553h0M577 497h0M280 584l-1.0 -0.2M173 512h0M297 295h0M214 468l-1.1 0.4M160 530h0M354 103l1.2 0.5M290 365h0M343 628h0M563 480l-1.0 -0.1M513 522l-1.4 0.4M418 360h0M288 369l0.9 1.1M383 259l1.1 0.3M354 638h0M275 493h0M348 653l1.0 0.6M398 105h0M560 346l-1.1 -0.2M362 624h0M248 486h0M352 530h0M550 326l-1.4 -0.0M361 108l-0.9 -1.0M371 125h0M543 260l-1.0 0.8M173 635h0M579 465h0M406 213h0M504 404h0M314 641h0M563 488l1.0 0.2M333 545l1.0 0.6M202 635l1.3 -0.8M414 264l-1.4 0.5M402 521l1.5 -0.7M575 476l-1.3 -0.7M501 497h0M328 597h0M169 467h0M169 382l-1.5 -0.9M236 507h0M395 478h0M570 368h0M505 309l1.4 -0.7M149 557h0M395 539h0M191 420l-1.2 -1.2M362 474l1.2 -1.0M537 500l-1.0 -1.2M335 375l-0.7 0.8M454 557h0M230 628h0M351 617h0M386 353l-0.9 0.7M449 497h0M585 596h0M513 419h0M436 207l1.0 0.9M505 175h0M507 593h0M531 543l-0.7 1.1M406 284l0.8 -0.3M351 252h0M410 517h0M435 500h0M393 577h0M555 531h0M515 589h0M533 315h0M358 587h0M59 533h0M156 287h0M118 461h0M537 608l-1.3 0.7M585 230h0M248 279l0.9 -0.9M499 101h0M165 590l1.4 -0.4M513 628h0M549 628h0M548 380h0M402 307h0M190 626l1.2 0.4M410 339h0M151 496h0M460 250h0M303 600l-1.0 0.7M445 387l0.6 -0.3M434 407h0M580 466l-1.2 -1.1M541 607l-1.4 0.4M287 559h0M83 536l1.4 0.2M333 480h0M567 638h0M154 612h0M295 588l0.8 0.9M513 439h0M366 580l1.4 0.8M572 442h0M418 638l1.2 1.0M146 531h0M168 633h0M472 586h0M91 432h0M370 647h0M573 454h0M516 452h0M300 565l-1.3 -0.5M435 512h0M349 419h0M76 209h0M48 648l-0.8 0.6M430 345l-0.9 -1.0M560 524l-1.4 0.6M528 601h0M579 436l1.5 -0.4M152 632l1.0 -1.2M470 151h0M564 330l-1.1 1.1M199 248h0M398 370h0M361 346l-1.3 -0.2M544 372h0M440 570h0M534 459l-1.0 0.0M426 503h0M380 461h0M455 390h0M406 624l-1.1 -0.4M182 350h0M468 633h0M366 629h0M381 409l1.2 -0.7M315 322h0M213 364h0M491 201h0M158 471h0M189 652h0M373 437l0.7 1.2M345 452l0.8 0.3M418 288h0M510 642h0M310 603h0M355 301l-1.1 0.3M496 547l0.8 -0.9M518 217h0M238 419l-1.2 -0.6M349 86l-1.5 0.2M447 559h0M20 261h0M538 342h0M283 204l1.4 -0.3M399 353l0.6 -0.7M590 340h0M372 639h0M577 435h0M252 254h0M560 485l0.8 0.4M210 316l0.6 1.0M385 551h0M532 540l1.5 0.6M556 337h0M562 547h0M216 622h0M492 567l-1.4 -0.8M295 548h0M296 432l-1.0 0.1M91 588l-1.0 0.7M152 494l-1.3 1.2M403 512l-1.0 0.8M449 442h0M458 476h0M341 314h0M576 498l-1.4 0.1M322 647l0.7 0.3" fill="none" stroke="#6c3f8c" stroke-width="1.5" stroke-linecap="round" opacity="0.65"/>
<path d="M270 219l-1.0 -0.1M581 162l1.4 1.0M557 262h0M167 255h0M86 259l0.9 0.3M318 266l0.9 -0.4M242 592h0M553 112h0M415 91h0M103 268h0M23 439h0M345 363h0M411 124l1.6 -0.1M37 626h0M115 227l0.8 1.0M151 327h0M335 161h0M222 134l1.5 -1.1M85 256l-0.7 0.9M139 109l0.7 -0.6M41 510l-1.3 0.4M483 412h0M165 242h0M37 396h0M337 139l0.9 0.2M424 139l1.4 0.5M233 483l-0.9 0.8M130 344l1.5 0.6M119 277l0.6 -0.9M86 271l1.4 -0.1M225 600h0M58 592h0M94 432h0M222 315h0M148 489h0M412 132h0M582 569h0M543 104h0M135 489h0M23 377h0M449 157h0M548 243h0M295 589l-1.2 1.0M146 381h0M317 284h0M247 456h0M48 604h0M469 261h0M44 313l0.7 0.3M278 516h0M311 207l-1.3 0.0M181 218h0M366 157h0M44 190h0M98 553l-1.1 -0.4M62 325h0M61 322h0M83 174l-1.6 -0.8M353 111l1.0 -0.0M299 391l-0.8 -0.9M105 406l-1.0 -0.1M367 330h0M511 124h0M50 246h0M391 591h0M418 230l1.1 -0.1M287 226h0M169 335h0M176 265h0M49 331h0M307 342h0M108 382l-1.5 0.4M60 452l-0.6 -0.7M302 453l1.3 -0.2M388 299h0M320 597h0M592 159l1.3 -0.6M290 479h0M185 354h0M229 440l1.3 0.4M204 580h0M114 243l-1.0 -1.1M591 219h0M246 411h0M237 148h0M312 240l-0.8 0.8M213 312l1.0 -0.6M34 436l1.0 -0.6M103 335l-0.7 1.1M575 366l0.9 0.8M492 379h0M164 354l1.0 -0.1M306 389l-1.2 1.0M263 578h0M552 160h0M585 321l1.6 -0.2M419 273h0M353 226h0M35 170h0M184 251h0M36 263h0M95 157l-0.7 0.8M571 183h0M112 253h0M127 118l-0.8 0.5M455 109l0.9 0.9M426 252l-0.9 -1.0M118 462h0M176 420h0M197 390h0M146 469h0M518 346h0M115 510l1.5 0.1M295 305h0M173 639l-1.3 -0.7M54 154h0M404 155h0M472 106l0.9 1.0M284 385h0M332 272h0M271 88h0M157 435h0M360 565h0M37 319h0M138 131l-1.2 -1.1M86 496l0.7 -0.7M284 655h0M403 252l1.2 -0.3M274 254h0M535 164h0M465 125l-1.2 0.5M137 535h0M492 290l-1.4 0.6M477 133l-1.0 0.2M84 541h0M153 542h0M135 427h0M120 347l0.8 0.8M348 470l-0.7 -0.7M529 225l1.0 1.1M63 595h0M52 493h0M107 488l-1.4 0.6M139 308h0M463 117h0M27 423h0M514 161l0.7 -0.0M446 265h0M117 351l0.8 0.1M177 264l-1.5 1.1M114 513h0M255 334h0M94 312l-1.2 -0.0M40 231l-0.7 0.7M165 128h0M63 378h0M32 273h0M307 224l-1.1 -1.0M172 98h0M305 168h0M324 389h0M367 131h0M38 147h0M157 551h0M128 510h0M28 323h0M194 186l1.0 -0.4M98 131h0" fill="none" stroke="#4c5052" stroke-width="2.1" stroke-linecap="round" opacity="0.58"/>
<path d="M579 210l1.4 0.5M177 562h0M402 491h0M120 592h0M367 441h0M162 611h0M439 332h0M407 531h0M567 351l1.0 -1.1M577 539h0M581 571l-0.9 -0.1M145 385h0M570 348l1.5 -0.5M508 200l-1.0 1.1M516 541h0M431 383h0M332 168l-1.2 0.8M59 473h0M266 592l-1.2 0.6M523 449h0M100 631h0M520 489h0M536 327h0M437 257h0M243 332h0M256 480h0M189 150h0M395 636h0M568 570h0M424 399l-1.6 -0.5M357 638h0M425 422h0M423 633h0M229 587h0M368 571l1.6 0.7M578 336h0M398 635h0M316 436h0M449 501h0M419 619h0M441 635h0M465 638h0M289 367h0M371 531h0M164 541h0M552 245h0M496 652h0M558 503h0M548 202l-1.1 0.3M469 637h0M259 648h0M322 654l-1.1 1.1M140 654l1.1 -0.3M525 476l-1.2 -1.2M405 272h0M109 423l-0.8 -0.0M355 490l1.6 -1.1M584 103h0M475 406h0M408 516h0M36 504l-1.5 0.1M155 490h0M182 402h0M558 295h0M255 648h0M170 555h0M418 555h0M399 552h0M531 405h0M547 121l-0.7 0.2M139 260h0M292 176l-1.2 -0.7M156 476h0M236 454l0.8 -0.0M111 610l-1.5 0.0M394 337h0M330 592h0M556 118l-1.6 1.2M115 642h0M168 486h0M98 588l1.4 0.8M315 538h0M351 293h0M501 536h0M581 401l0.6 0.5M298 598l1.2 0.5M51 557l1.6 0.2M440 425l1.0 0.4M207 121h0M551 111h0M304 505l0.6 -0.4M151 474l-1.2 0.9M514 274h0M165 518h0M409 435h0M475 472h0M460 580h0M546 563h0M70 539h0M479 381h0M543 379h0M572 226h0M370 466h0M490 126h0M87 464h0M435 196h0M325 586l0.9 -0.4M474 578l-1.5 0.7M290 474h0M276 304h0M557 632h0M308 455h0M321 622l1.5 0.6M575 217h0M472 283h0M583 317l-1.3 -0.6M534 637l0.9 -0.6M451 364h0M302 568h0M210 312h0M355 605h0M502 650l-0.6 -1.0M583 155h0M400 276h0M444 645l1.0 -0.7M147 448h0M454 631h0M216 326h0M513 571h0M460 114l1.3 -0.1M485 612h0M319 499l1.5 1.2M392 250h0M340 572h0M261 532h0M216 431h0M315 614h0M306 213l-1.6 -0.8M224 398h0M334 655h0M563 292h0M501 195l1.1 0.0M267 438h0M231 593h0M415 304h0M502 597h0M561 478h0M533 526h0M72 560l0.9 -1.1M241 440l-0.9 -1.1M183 651h0M354 655l-1.2 -1.0M354 117h0M294 606h0M396 601h0M69 599h0M86 149l-1.5 0.5M308 653l1.2 -0.8M321 428h0M428 414l0.8 -0.9M204 635h0M73 633h0M515 311l-1.5 -1.0M512 207h0M375 592h0M40 549l-1.4 -1.1M571 371h0M509 509l1.6 1.1M568 518h0M515 638h0M352 579h0M341 196l-1.4 -0.2M530 529h0M330 384h0M530 606l1.2 -0.4M468 635h0M542 396h0M342 446l-0.6 0.5M536 239h0M428 138h0M425 490h0M61 391l-1.5 0.9M237 283h0M176 476l1.3 0.7M35 215l1.2 -0.9M479 353l-1.3 0.5M459 509h0M561 268h0M582 418h0M474 573h0M209 461h0M503 483h0" fill="none" stroke="#6c3f8c" stroke-width="2.1" stroke-linecap="round" opacity="0.61"/>
<g fill="#30f000" stroke="#7a3ca8" stroke-opacity="0.8" stroke-width="0.55" filter="url(#rough)">
<rect x="0" y="60" width="1" height="1" fill="none" stroke="none"/>
<polygon points="100.0,135.6 107.0,130.0 117.0,127.0 125.0,127.0 128.0,132.0 127.0,139.0 122.0,143.0 117.0,142.0 113.0,145.0 110.0,141.0 104.0,139.0"/>
<polygon points="194.0,172.0 199.0,163.0 204.0,159.0 210.0,158.0 212.0,151.0 217.0,149.6 219.0,153.0 216.0,159.0 212.0,162.0 210.0,170.0 212.0,182.0 210.0,187.0 206.0,184.0 201.0,179.0 197.0,176.0"/>
<polygon points="368.0,143.0 370.0,139.6 376.0,138.6 382.0,142.0 388.0,146.0 396.0,147.6 403.0,150.0 405.4,154.0 404.0,158.6 398.0,159.0 390.0,157.0 383.0,158.0 377.0,155.0 371.4,150.0"/>
<polygon points="321.0,225.0 326.0,214.0 335.0,207.6 343.0,211.0 344.0,217.0 338.0,225.0 329.0,227.0"/>
<polygon points="425.0,186.0 428.0,183.0 434.0,182.0 437.0,184.0 439.0,188.0 441.4,191.6 439.0,194.0 435.0,195.0 431.0,198.0 427.0,197.0 426.0,193.0 428.0,190.0"/>
<polygon points="537.0,197.0 545.0,193.0 557.0,191.0 569.0,185.0 577.0,183.0 577.0,185.0 569.0,188.0 557.0,194.0 547.0,197.6 539.0,199.0"/>
<polygon points="509.0,208.4 516.0,204.4 524.6,202.0 525.4,204.0 517.0,207.2 510.0,211.0"/>
<polygon points="491.0,218.0 497.0,215.0 501.0,220.0 509.0,222.0 508.0,225.0 501.0,227.0 498.0,231.0 494.0,228.0 492.0,223.0"/>
<polygon points="36.6,287.0 41.0,286.0 44.0,290.0 49.0,285.0 53.4,284.0 54.0,288.0 49.0,292.0 46.0,294.0 42.0,291.6 38.0,294.0 36.0,292.0"/>
<polygon points="102.6,336.0 106.0,339.0 113.0,339.0 118.0,340.0 120.6,342.0 115.0,344.0 111.0,347.6 106.0,345.0 103.0,341.0"/>
<polygon points="35.4,363.0 38.0,361.0 45.0,363.0 51.0,364.0 52.0,368.0 47.0,369.0 39.0,367.6 36.0,365.6"/>
<polygon points="50.6,374.0 55.0,370.4 62.0,369.0 68.0,370.0 66.0,373.0 61.0,376.4 54.0,377.6 51.0,376.4"/>
<polygon points="174.0,304.0 178.0,299.0 181.0,293.0 184.0,296.0 186.0,299.0 191.0,296.0 195.0,293.0 199.0,296.0 199.0,301.0 195.0,303.0 190.0,300.0 185.0,301.0 180.0,304.0 176.0,307.0"/>
<polygon points="186.0,343.0 190.0,338.0 195.0,335.0 199.0,332.0 200.0,336.0 198.0,341.0 193.0,344.0 189.0,345.6"/>
<polygon points="188.6,350.0 192.0,348.0 199.0,350.0 203.4,352.0 201.0,354.4 195.0,354.0 190.0,352.6"/>
<polygon points="362.0,307.0 367.0,303.0 371.0,305.0 379.0,304.0 385.0,307.0 393.0,303.0 401.0,302.0 405.0,300.0 410.0,305.0 407.0,308.0 401.0,311.0 398.0,316.0 393.0,322.0 389.0,326.0 390.0,331.0 396.0,335.0 398.0,341.0 396.0,350.0 393.0,357.0 388.0,359.0 382.0,356.0 378.0,351.0 371.0,347.0 366.0,341.0 364.0,334.0 360.0,329.0 362.0,323.0 366.0,316.0 365.0,311.0"/>
<polygon points="402.0,251.0 407.0,249.0 413.0,249.6 415.0,256.0 413.0,262.0 409.0,265.0 404.0,262.0 402.0,257.0"/>
<polygon points="449.0,236.0 453.0,234.0 458.0,237.0 460.0,233.0 464.0,233.0 462.0,238.0 459.0,241.6 463.0,245.0 468.0,242.0 472.0,240.0 472.6,245.0 469.0,251.0 466.0,257.0 463.0,260.0 459.0,256.0 456.0,251.0 454.0,246.0 451.0,242.0"/>
<polygon points="456.6,272.0 461.0,267.0 466.0,262.0 473.0,262.4 478.6,266.0 479.0,272.0 476.0,277.0 479.0,281.0 483.4,283.6 482.0,285.6 477.0,283.0 473.0,280.0 469.0,282.0 464.0,279.0 459.0,276.4"/>
<polygon points="458.0,305.0 463.0,301.0 465.0,293.0 469.0,291.0 472.0,296.0 471.0,302.0 468.0,306.0 465.0,309.0 461.0,308.0"/>
<polygon points="551.0,275.0 554.0,270.0 559.0,267.0 564.6,267.6 563.0,271.0 558.6,273.6 555.0,277.0 552.0,277.0"/>
<polygon points="580.0,270.0 585.0,268.0 589.0,264.0 593.4,260.0 593.4,275.0 589.0,275.0 586.0,272.0 582.0,271.6"/>
<polygon points="517.4,285.0 520.0,288.0 523.0,292.0 528.0,290.0 531.0,289.0 533.4,295.0 529.0,296.4 524.0,298.0 521.0,294.0 518.6,290.0"/>
<polygon points="80.0,478.0 83.0,475.0 86.0,480.0 91.0,483.0 96.0,482.0 99.0,486.0 103.0,490.0 107.0,495.0 106.0,499.0 101.0,502.0 102.0,507.0 100.0,513.0 96.0,512.0 91.0,510.0 88.0,509.0 90.0,504.0 92.0,500.0 88.0,497.0 85.0,491.0 83.0,485.0"/>
<polygon points="128.0,414.0 131.0,410.0 137.0,410.0 141.0,414.0 142.0,418.0 138.0,417.0 134.0,415.0 130.0,416.4"/>
<polygon points="250.6,474.0 254.0,470.0 260.0,470.0 261.4,475.0 259.0,480.0 255.0,483.0 252.0,481.0"/>
<polygon points="233.0,502.0 236.0,496.4 241.0,497.6 246.0,501.0 246.0,507.0 241.0,509.0 236.0,507.0"/>
<polygon points="223.0,513.0 226.0,514.0 229.0,518.0 231.4,521.6 228.0,523.0 225.0,520.0"/>
<polygon points="408.6,459.0 413.0,457.6 421.0,459.0 428.0,461.0 434.0,461.0 437.4,457.6 440.0,463.0 445.0,468.0 451.0,475.0 455.0,481.0 455.4,491.0 454.0,497.6 448.0,497.0 441.0,493.0 435.0,488.0 428.0,486.0 422.0,481.0 416.0,475.0 411.0,469.0 409.0,464.0"/>
<polygon points="348.0,415.0 350.0,410.0 357.0,408.4 362.6,411.0 362.0,416.0 358.0,419.0 352.0,421.0 348.6,419.0"/>
<polygon points="503.4,413.0 509.0,411.6 517.0,412.4 521.0,409.6 525.0,411.0 526.6,416.0 522.0,419.0 515.0,419.6 510.0,421.0 508.0,424.0 505.0,421.0"/>
<polygon points="527.0,445.0 531.0,443.6 537.0,442.0 542.0,443.0 543.4,448.0 539.0,450.4 533.0,450.0 529.0,449.6"/>
<polygon points="575.0,457.0 579.0,454.4 583.4,457.0 586.0,462.0 585.0,467.0 581.0,468.4 578.0,463.0"/>
<polygon points="512.0,494.0 514.0,488.0 519.0,483.0 526.0,480.4 529.0,483.0 528.0,490.0 524.6,496.0 519.0,499.6 514.0,498.0"/>
<polygon points="544.0,491.0 545.0,487.0 549.0,486.4 552.0,485.6 556.0,487.0 556.0,490.0 552.0,490.0 549.0,493.0 545.0,494.0"/>
<polygon points="151.0,554.0 155.0,549.6 159.0,546.4 163.0,548.0 163.4,553.0 167.0,558.0 168.0,561.0 163.0,559.0 158.0,557.6 153.0,557.0"/>
<polygon points="81.0,553.0 84.0,550.0 89.0,549.6 93.4,552.0 94.0,557.0 91.0,560.0 86.0,561.0 82.0,558.4 83.4,555.0 86.0,557.6 89.4,557.0 90.6,554.0 88.0,552.0 84.6,553.0"/>
<polygon points="277.0,553.0 278.6,546.0 284.0,541.6 291.0,542.0 297.0,546.0 302.0,551.0 307.0,554.0 306.0,559.0 302.0,562.0 299.0,558.0 293.0,556.4 286.0,558.4 279.0,558.4"/>
<polygon points="306.0,551.0 311.0,547.0 318.0,542.0 319.0,546.0 313.0,549.0 308.0,553.0"/>
<polygon points="169.0,630.0 175.0,629.0 181.0,631.6 188.0,632.0 193.0,634.0 198.0,637.0 202.0,641.0 202.0,650.0 199.0,653.0 193.0,650.0 187.0,647.0 181.0,642.0 174.0,639.0 169.0,638.0"/>
<polygon points="209.0,625.0 213.0,622.0 216.0,626.0 219.0,632.0 222.6,636.0 221.0,638.4 216.0,637.0 211.0,637.6 209.0,634.0 211.0,630.0"/>
<polygon points="254.6,638.0 259.0,636.0 263.0,639.0 269.0,640.0 273.0,643.0 278.0,640.0 283.0,635.6 285.0,640.0 281.0,646.0 276.0,650.0 273.0,656.0 257.0,656.0 258.0,650.0 255.0,644.0"/>
<polygon points="287.0,656.0 292.0,650.0 299.0,648.0 305.0,651.0 308.0,656.0"/>
<polygon points="538.0,538.0 541.0,532.0 544.0,525.0 548.0,518.0 554.0,515.6 558.0,518.0 557.0,524.0 553.0,530.0 548.0,535.0 542.0,539.6"/>
<polygon points="561.0,575.0 565.0,570.0 569.0,566.4 571.4,570.0 571.0,578.0 570.0,583.6 567.0,582.0 564.0,578.0"/>
<polygon points="491.0,572.0 494.0,568.6 499.0,570.0 505.0,574.0 504.0,578.0 500.0,583.0 497.0,581.0 495.0,577.0 491.4,575.6"/>
<ellipse cx="38.0" cy="114.0" rx="2.5" ry="4.5"/>
<ellipse cx="73.4" cy="117.0" rx="2.1" ry="2.1"/>
<ellipse cx="96.6" cy="123.6" rx="1.9" ry="1.5"/>
<ellipse cx="107.6" cy="121.6" rx="1.7" ry="2.5"/>
<ellipse cx="113.0" cy="123.0" rx="1.7" ry="2.9"/>
<ellipse cx="135.6" cy="127.6" rx="1.3" ry="2.9"/>
<ellipse cx="158.6" cy="99.0" rx="2.5" ry="2.1"/>
<ellipse cx="80.0" cy="83.0" rx="2.1" ry="1.7"/>
<ellipse cx="36.0" cy="82.4" rx="1.7" ry="1.2"/>
<ellipse cx="151.0" cy="85.6" rx="2.1" ry="1.7"/>
<ellipse cx="166.0" cy="84.0" rx="2.1" ry="2.1"/>
<ellipse cx="69.0" cy="155.0" rx="4.5" ry="3.7"/>
<ellipse cx="75.6" cy="165.0" rx="3.3" ry="5.7"/>
<ellipse cx="95.0" cy="163.6" rx="1.3" ry="1.7"/>
<ellipse cx="144.6" cy="172.4" rx="2.5" ry="5.7" transform="rotate(15 144.6 172.4)"/>
<ellipse cx="166.0" cy="149.0" rx="2.5" ry="2.5"/>
<ellipse cx="164.0" cy="180.0" rx="4.1" ry="5.1"/>
<ellipse cx="164.0" cy="191.0" rx="3.1" ry="1.7"/>
<ellipse cx="138.4" cy="191.0" rx="3.7" ry="2.5" transform="rotate(-30 138.4 191.0)"/>
<ellipse cx="145.0" cy="195.0" rx="1.3" ry="1.7"/>
<ellipse cx="157.0" cy="200.0" rx="2.1" ry="2.5"/>
<ellipse cx="167.0" cy="206.0" rx="1.7" ry="2.1"/>
<ellipse cx="62.6" cy="191.4" rx="2.9" ry="2.1"/>
<ellipse cx="33.0" cy="199.0" rx="1.7" ry="3.3"/>
<ellipse cx="44.0" cy="206.0" rx="2.9" ry="2.9"/>
<ellipse cx="35.0" cy="214.0" rx="1.7" ry="2.5"/>
<ellipse cx="51.0" cy="213.0" rx="2.5" ry="1.3"/>
<ellipse cx="76.4" cy="207.0" rx="1.3" ry="1.7"/>
<ellipse cx="128.6" cy="202.4" rx="1.3" ry="1.5"/>
<ellipse cx="150.0" cy="215.0" rx="3.7" ry="4.5"/>
<ellipse cx="151.0" cy="227.0" rx="2.1" ry="2.1"/>
<ellipse cx="94.0" cy="230.0" rx="2.5" ry="2.1"/>
<ellipse cx="99.0" cy="94.0" rx="1.2" ry="1.2"/>
<ellipse cx="145.4" cy="136.4" rx="1.2" ry="1.7"/>
<ellipse cx="123.0" cy="210.0" rx="1.2" ry="1.7"/>
<ellipse cx="77.0" cy="219.0" rx="1.2" ry="1.3"/>
<ellipse cx="70.0" cy="225.0" rx="1.2" ry="1.3"/>
<ellipse cx="159.0" cy="144.0" rx="1.2" ry="1.2"/>
<ellipse cx="180.0" cy="84.0" rx="1.7" ry="2.9"/>
<ellipse cx="175.0" cy="93.0" rx="1.7" ry="2.1"/>
<ellipse cx="184.0" cy="93.0" rx="2.1" ry="1.3"/>
<ellipse cx="170.6" cy="105.0" rx="2.1" ry="2.9"/>
<ellipse cx="182.0" cy="109.0" rx="2.1" ry="1.2"/>
<ellipse cx="204.0" cy="82.4" rx="2.1" ry="1.2"/>
<ellipse cx="192.0" cy="120.6" rx="2.1" ry="3.3"/>
<ellipse cx="209.0" cy="92.0" rx="1.3" ry="1.3"/>
<ellipse cx="201.0" cy="109.6" rx="1.2" ry="1.7"/>
<ellipse cx="230.0" cy="108.0" rx="3.3" ry="2.1" transform="rotate(-30 230.0 108.0)"/>
<ellipse cx="230.0" cy="90.4" rx="1.2" ry="1.7"/>
<ellipse cx="241.4" cy="116.4" rx="2.9" ry="3.3"/>
<ellipse cx="253.4" cy="106.0" rx="4.1" ry="2.5"/>
<ellipse cx="281.0" cy="97.6" rx="2.9" ry="2.5" transform="rotate(40 281.0 97.6)"/>
<ellipse cx="291.0" cy="125.0" rx="3.3" ry="2.9"/>
<ellipse cx="279.0" cy="115.0" rx="1.3" ry="2.1"/>
<ellipse cx="279.6" cy="130.0" rx="1.3" ry="1.3"/>
<ellipse cx="271.0" cy="137.0" rx="1.7" ry="1.7"/>
<ellipse cx="281.0" cy="140.0" rx="1.7" ry="1.2"/>
<ellipse cx="307.0" cy="143.0" rx="2.1" ry="2.1"/>
<ellipse cx="257.0" cy="152.0" rx="5.3" ry="4.1"/>
<ellipse cx="272.0" cy="150.4" rx="1.3" ry="1.3"/>
<ellipse cx="240.0" cy="157.6" rx="2.1" ry="2.1"/>
<ellipse cx="245.6" cy="168.6" rx="1.7" ry="2.5"/>
<ellipse cx="277.0" cy="160.4" rx="2.1" ry="2.5"/>
<ellipse cx="287.0" cy="162.4" rx="5.7" ry="4.1"/>
<ellipse cx="305.0" cy="154.4" rx="1.7" ry="1.7"/>
<ellipse cx="220.0" cy="161.4" rx="2.1" ry="1.2"/>
<ellipse cx="217.0" cy="170.0" rx="1.3" ry="1.7"/>
<ellipse cx="199.0" cy="152.0" rx="1.3" ry="1.2"/>
<ellipse cx="172.6" cy="180.0" rx="5.1" ry="3.7"/>
<ellipse cx="186.6" cy="177.0" rx="2.1" ry="2.9"/>
<ellipse cx="189.6" cy="190.6" rx="2.5" ry="2.5"/>
<ellipse cx="180.0" cy="193.6" rx="1.7" ry="2.1"/>
<ellipse cx="170.0" cy="205.0" rx="1.7" ry="2.5"/>
<ellipse cx="177.0" cy="219.0" rx="1.7" ry="2.1"/>
<ellipse cx="231.6" cy="188.0" rx="2.9" ry="4.1"/>
<ellipse cx="231.0" cy="200.4" rx="1.7" ry="1.7"/>
<ellipse cx="241.4" cy="202.0" rx="1.7" ry="2.5"/>
<ellipse cx="287.6" cy="189.4" rx="3.7" ry="7.1"/>
<ellipse cx="305.4" cy="189.4" rx="1.7" ry="2.1"/>
<ellipse cx="287.0" cy="206.4" rx="1.3" ry="1.3"/>
<ellipse cx="293.0" cy="204.4" rx="1.2" ry="1.3"/>
<ellipse cx="277.6" cy="207.4" rx="1.2" ry="1.2"/>
<ellipse cx="285.0" cy="215.0" rx="1.2" ry="1.2"/>
<ellipse cx="273.4" cy="224.4" rx="1.7" ry="1.7"/>
<ellipse cx="223.0" cy="228.0" rx="5.1" ry="3.7"/>
<ellipse cx="212.0" cy="229.6" rx="1.7" ry="2.1"/>
<ellipse cx="170.0" cy="148.0" rx="1.2" ry="1.7"/>
<ellipse cx="219.0" cy="130.0" rx="1.2" ry="1.3"/>
<ellipse cx="245.0" cy="83.0" rx="1.2" ry="1.2"/>
<ellipse cx="318.0" cy="119.0" rx="1.2" ry="1.3"/>
<ellipse cx="301.0" cy="179.0" rx="1.2" ry="1.2"/>
<ellipse cx="360.4" cy="84.4" rx="5.7" ry="3.7"/>
<ellipse cx="328.0" cy="95.6" rx="2.9" ry="4.5"/>
<ellipse cx="345.4" cy="94.4" rx="1.7" ry="1.7"/>
<ellipse cx="351.0" cy="103.0" rx="2.1" ry="2.1"/>
<ellipse cx="363.0" cy="98.4" rx="1.7" ry="2.1"/>
<ellipse cx="412.4" cy="97.6" rx="2.1" ry="4.9"/>
<ellipse cx="413.4" cy="106.4" rx="1.7" ry="2.5"/>
<ellipse cx="437.0" cy="85.6" rx="2.9" ry="2.1"/>
<ellipse cx="466.0" cy="85.6" rx="2.1" ry="2.1"/>
<ellipse cx="444.0" cy="109.0" rx="4.5" ry="3.3"/>
<ellipse cx="423.0" cy="120.4" rx="3.3" ry="2.5"/>
<ellipse cx="448.6" cy="126.0" rx="1.7" ry="2.1"/>
<ellipse cx="466.0" cy="138.0" rx="4.1" ry="4.5" transform="rotate(40 466.0 138.0)"/>
<ellipse cx="394.6" cy="119.6" rx="2.1" ry="2.5"/>
<ellipse cx="386.0" cy="112.0" rx="2.1" ry="1.7"/>
<ellipse cx="379.0" cy="117.6" rx="1.7" ry="1.3"/>
<ellipse cx="327.4" cy="165.0" rx="4.5" ry="5.7"/>
<ellipse cx="344.6" cy="161.6" rx="5.1" ry="4.5"/>
<ellipse cx="359.0" cy="163.6" rx="1.7" ry="1.7"/>
<ellipse cx="369.0" cy="171.0" rx="3.7" ry="2.9" transform="rotate(30 369.0 171.0)"/>
<ellipse cx="353.4" cy="180.0" rx="3.7" ry="3.7"/>
<ellipse cx="350.0" cy="185.4" rx="1.3" ry="1.7"/>
<ellipse cx="336.6" cy="182.6" rx="2.1" ry="1.7"/>
<ellipse cx="323.4" cy="182.0" rx="1.7" ry="1.7"/>
<ellipse cx="427.0" cy="164.6" rx="1.7" ry="2.9"/>
<ellipse cx="430.4" cy="172.4" rx="1.3" ry="1.3"/>
<ellipse cx="459.0" cy="167.0" rx="1.7" ry="1.2"/>
<ellipse cx="453.4" cy="187.0" rx="4.1" ry="2.1" transform="rotate(30 453.4 187.0)"/>
<ellipse cx="410.0" cy="187.6" rx="2.1" ry="2.1"/>
<ellipse cx="409.0" cy="181.4" rx="1.7" ry="1.3"/>
<ellipse cx="400.6" cy="176.0" rx="1.7" ry="1.2"/>
<ellipse cx="418.6" cy="197.6" rx="1.3" ry="1.3"/>
<ellipse cx="376.0" cy="199.0" rx="2.9" ry="3.7"/>
<ellipse cx="356.6" cy="201.6" rx="2.9" ry="2.5"/>
<ellipse cx="351.4" cy="204.4" rx="2.5" ry="3.3"/>
<ellipse cx="357.0" cy="195.6" rx="1.3" ry="1.7"/>
<ellipse cx="369.4" cy="221.4" rx="6.5" ry="5.7"/>
<ellipse cx="378.6" cy="226.4" rx="2.1" ry="2.5"/>
<ellipse cx="397.0" cy="221.0" rx="4.1" ry="2.9"/>
<ellipse cx="406.0" cy="225.6" rx="4.9" ry="4.5"/>
<ellipse cx="453.4" cy="213.6" rx="3.3" ry="1.7"/>
<ellipse cx="444.0" cy="220.0" rx="2.9" ry="4.1"/>
<ellipse cx="464.6" cy="225.0" rx="1.7" ry="4.1"/>
<ellipse cx="438.6" cy="207.4" rx="1.3" ry="1.3"/>
<ellipse cx="415.0" cy="230.4" rx="1.7" ry="1.7"/>
<ellipse cx="400.6" cy="229.6" rx="1.7" ry="1.2"/>
<ellipse cx="331.0" cy="149.0" rx="1.7" ry="1.7"/>
<ellipse cx="339.0" cy="148.0" rx="1.3" ry="1.3"/>
<ellipse cx="336.6" cy="155.0" rx="1.2" ry="1.2"/>
<ellipse cx="331.4" cy="130.0" rx="1.2" ry="1.3"/>
<ellipse cx="321.4" cy="141.0" rx="1.2" ry="1.2"/>
<ellipse cx="441.4" cy="145.6" rx="1.3" ry="2.5"/>
<ellipse cx="419.0" cy="150.0" rx="1.2" ry="1.2"/>
<ellipse cx="431.0" cy="151.0" rx="1.2" ry="1.2"/>
<ellipse cx="388.6" cy="104.4" rx="1.2" ry="1.3"/>
<ellipse cx="387.0" cy="91.6" rx="1.2" ry="1.2"/>
<ellipse cx="394.6" cy="91.0" rx="1.2" ry="1.2"/>
<ellipse cx="410.0" cy="91.0" rx="1.2" ry="1.2"/>
<ellipse cx="474.6" cy="95.6" rx="3.7" ry="5.7"/>
<ellipse cx="478.0" cy="108.6" rx="3.3" ry="1.7"/>
<ellipse cx="476.6" cy="116.0" rx="1.3" ry="1.3"/>
<ellipse cx="480.0" cy="124.6" rx="1.3" ry="1.2"/>
<ellipse cx="499.4" cy="127.6" rx="8.5" ry="2.9"/>
<ellipse cx="519.0" cy="124.4" rx="5.3" ry="8.5" transform="rotate(15 519.0 124.4)"/>
<ellipse cx="531.0" cy="134.0" rx="1.7" ry="2.5"/>
<ellipse cx="513.0" cy="94.4" rx="1.3" ry="1.7"/>
<ellipse cx="519.0" cy="100.4" rx="1.3" ry="1.7"/>
<ellipse cx="508.0" cy="82.4" rx="2.5" ry="1.2"/>
<ellipse cx="554.0" cy="90.0" rx="5.1" ry="2.1"/>
<ellipse cx="581.0" cy="90.4" rx="5.7" ry="3.3" transform="rotate(25 581.0 90.4)"/>
<ellipse cx="587.0" cy="95.6" rx="1.7" ry="2.1"/>
<ellipse cx="578.6" cy="109.6" rx="2.9" ry="1.3"/>
<ellipse cx="566.0" cy="123.6" rx="1.7" ry="1.7"/>
<ellipse cx="570.0" cy="129.0" rx="2.1" ry="1.3"/>
<ellipse cx="583.4" cy="127.0" rx="1.3" ry="1.3"/>
<ellipse cx="546.4" cy="146.4" rx="2.1" ry="1.3"/>
<ellipse cx="565.0" cy="154.4" rx="2.5" ry="5.3" transform="rotate(25 565.0 154.4)"/>
<ellipse cx="573.4" cy="159.0" rx="2.1" ry="1.7"/>
<ellipse cx="554.4" cy="153.4" rx="1.7" ry="1.7"/>
<ellipse cx="543.6" cy="159.4" rx="1.7" ry="1.3"/>
<ellipse cx="538.6" cy="175.0" rx="4.9" ry="4.5"/>
<ellipse cx="530.4" cy="167.6" rx="1.7" ry="1.3"/>
<ellipse cx="508.0" cy="174.0" rx="2.9" ry="3.7"/>
<ellipse cx="506.6" cy="158.6" rx="1.3" ry="1.7"/>
<ellipse cx="491.4" cy="175.6" rx="1.3" ry="1.3"/>
<ellipse cx="513.0" cy="182.6" rx="1.7" ry="1.7"/>
<ellipse cx="518.0" cy="191.0" rx="2.9" ry="2.1"/>
<ellipse cx="474.6" cy="156.4" rx="1.7" ry="2.1"/>
<ellipse cx="471.4" cy="197.0" rx="1.7" ry="2.1"/>
<ellipse cx="507.0" cy="215.6" rx="5.1" ry="1.7"/>
<ellipse cx="514.0" cy="216.4" rx="2.1" ry="2.1"/>
<ellipse cx="574.0" cy="199.0" rx="4.1" ry="4.9"/>
<ellipse cx="583.4" cy="183.6" rx="1.7" ry="1.7"/>
<ellipse cx="592.6" cy="189.0" rx="1.2" ry="2.5"/>
<ellipse cx="553.0" cy="203.6" rx="1.3" ry="1.3"/>
<ellipse cx="538.0" cy="219.0" rx="2.5" ry="2.1"/>
<ellipse cx="543.0" cy="225.6" rx="4.1" ry="2.1" transform="rotate(-20 543.0 225.6)"/>
<ellipse cx="584.6" cy="226.4" rx="3.7" ry="2.1"/>
<ellipse cx="487.0" cy="214.0" rx="1.2" ry="1.2"/>
<ellipse cx="563.0" cy="100.0" rx="1.2" ry="1.2"/>
<ellipse cx="535.0" cy="119.0" rx="1.2" ry="1.2"/>
<ellipse cx="534.6" cy="125.6" rx="1.2" ry="1.2"/>
<ellipse cx="24.6" cy="252.6" rx="2.9" ry="3.3"/>
<ellipse cx="94.0" cy="233.0" rx="2.5" ry="2.1"/>
<ellipse cx="71.4" cy="245.6" rx="1.7" ry="1.3"/>
<ellipse cx="96.6" cy="253.0" rx="2.1" ry="3.3"/>
<ellipse cx="118.4" cy="253.6" rx="1.7" ry="1.7"/>
<ellipse cx="79.6" cy="255.6" rx="1.3" ry="1.2"/>
<ellipse cx="166.0" cy="252.4" rx="2.5" ry="2.1"/>
<ellipse cx="130.6" cy="261.0" rx="1.2" ry="1.7"/>
<ellipse cx="49.4" cy="304.4" rx="2.1" ry="1.7"/>
<ellipse cx="31.0" cy="303.4" rx="1.2" ry="1.3"/>
<ellipse cx="40.6" cy="314.0" rx="3.3" ry="2.9"/>
<ellipse cx="75.0" cy="302.4" rx="1.7" ry="1.3"/>
<ellipse cx="93.0" cy="301.0" rx="5.7" ry="2.5" transform="rotate(30 93.0 301.0)"/>
<ellipse cx="100.6" cy="308.0" rx="2.5" ry="3.3"/>
<ellipse cx="105.4" cy="284.4" rx="2.1" ry="1.7"/>
<ellipse cx="121.6" cy="286.4" rx="2.9" ry="2.9"/>
<ellipse cx="150.4" cy="283.0" rx="4.5" ry="2.1" transform="rotate(-30 150.4 283.0)"/>
<ellipse cx="142.0" cy="293.6" rx="7.1" ry="4.1"/>
<ellipse cx="155.6" cy="286.4" rx="1.3" ry="1.3"/>
<ellipse cx="166.0" cy="285.0" rx="1.7" ry="1.7"/>
<ellipse cx="168.0" cy="291.0" rx="1.3" ry="1.7"/>
<ellipse cx="111.0" cy="310.4" rx="1.3" ry="1.7"/>
<ellipse cx="157.0" cy="319.6" rx="1.7" ry="1.7"/>
<ellipse cx="108.0" cy="326.0" rx="2.5" ry="2.1"/>
<ellipse cx="71.0" cy="327.6" rx="2.9" ry="2.5"/>
<ellipse cx="66.6" cy="319.0" rx="1.2" ry="1.2"/>
<ellipse cx="144.6" cy="339.6" rx="2.9" ry="1.7" transform="rotate(-30 144.6 339.6)"/>
<ellipse cx="166.6" cy="331.0" rx="3.3" ry="5.7"/>
<ellipse cx="166.0" cy="347.6" rx="2.1" ry="1.7"/>
<ellipse cx="90.0" cy="349.6" rx="2.1" ry="2.1"/>
<ellipse cx="75.0" cy="349.4" rx="1.3" ry="1.7"/>
<ellipse cx="65.4" cy="353.6" rx="1.7" ry="2.1"/>
<ellipse cx="51.0" cy="357.0" rx="1.7" ry="1.3"/>
<ellipse cx="20.0" cy="366.4" rx="2.1" ry="2.9"/>
<ellipse cx="73.0" cy="377.0" rx="4.9" ry="5.1"/>
<ellipse cx="72.0" cy="363.0" rx="2.9" ry="5.1"/>
<ellipse cx="77.0" cy="365.6" rx="2.1" ry="2.1"/>
<ellipse cx="89.0" cy="367.6" rx="1.3" ry="2.9"/>
<ellipse cx="132.0" cy="376.0" rx="4.5" ry="5.7"/>
<ellipse cx="110.0" cy="377.0" rx="2.1" ry="2.1"/>
<ellipse cx="47.0" cy="378.4" rx="1.3" ry="1.7"/>
<ellipse cx="33.4" cy="380.4" rx="2.1" ry="1.3"/>
<ellipse cx="26.0" cy="358.0" rx="1.2" ry="1.2"/>
<ellipse cx="99.0" cy="367.0" rx="1.2" ry="1.3"/>
<ellipse cx="221.4" cy="234.0" rx="4.5" ry="2.9"/>
<ellipse cx="209.0" cy="245.0" rx="1.7" ry="2.9"/>
<ellipse cx="229.6" cy="244.4" rx="1.3" ry="1.7"/>
<ellipse cx="183.4" cy="256.4" rx="1.7" ry="1.3"/>
<ellipse cx="197.0" cy="261.0" rx="2.5" ry="3.3"/>
<ellipse cx="206.6" cy="270.4" rx="2.9" ry="4.9"/>
<ellipse cx="257.0" cy="261.6" rx="3.3" ry="4.5"/>
<ellipse cx="268.6" cy="270.4" rx="2.5" ry="1.3"/>
<ellipse cx="305.6" cy="255.6" rx="2.9" ry="2.5"/>
<ellipse cx="279.0" cy="248.0" rx="1.3" ry="1.3"/>
<ellipse cx="283.4" cy="234.4" rx="1.3" ry="1.2"/>
<ellipse cx="295.4" cy="238.4" rx="1.2" ry="1.2"/>
<ellipse cx="290.6" cy="262.4" rx="1.7" ry="1.2"/>
<ellipse cx="181.4" cy="283.0" rx="5.7" ry="4.5"/>
<ellipse cx="170.0" cy="290.4" rx="1.3" ry="2.1"/>
<ellipse cx="220.6" cy="285.6" rx="1.7" ry="1.3"/>
<ellipse cx="224.0" cy="294.4" rx="1.3" ry="1.7"/>
<ellipse cx="256.0" cy="287.6" rx="1.2" ry="1.3"/>
<ellipse cx="269.0" cy="292.0" rx="2.9" ry="2.1"/>
<ellipse cx="274.4" cy="296.4" rx="1.3" ry="2.1"/>
<ellipse cx="260.6" cy="299.6" rx="1.7" ry="1.7"/>
<ellipse cx="287.6" cy="289.4" rx="1.3" ry="1.3"/>
<ellipse cx="252.0" cy="313.6" rx="1.2" ry="2.1"/>
<ellipse cx="278.4" cy="320.6" rx="1.7" ry="1.7"/>
<ellipse cx="257.4" cy="321.4" rx="1.2" ry="1.2"/>
<ellipse cx="171.0" cy="328.0" rx="4.1" ry="4.9"/>
<ellipse cx="189.0" cy="325.6" rx="2.1" ry="2.5"/>
<ellipse cx="190.6" cy="320.6" rx="1.3" ry="1.3"/>
<ellipse cx="217.0" cy="325.6" rx="1.3" ry="1.3"/>
<ellipse cx="218.4" cy="334.0" rx="2.9" ry="4.1"/>
<ellipse cx="235.0" cy="337.0" rx="2.9" ry="3.7"/>
<ellipse cx="239.0" cy="344.0" rx="1.3" ry="2.1"/>
<ellipse cx="268.0" cy="336.4" rx="3.3" ry="2.5"/>
<ellipse cx="298.4" cy="338.6" rx="2.1" ry="2.1"/>
<ellipse cx="288.4" cy="343.0" rx="1.2" ry="1.7"/>
<ellipse cx="211.4" cy="357.4" rx="4.5" ry="2.9"/>
<ellipse cx="228.6" cy="358.0" rx="1.7" ry="2.5"/>
<ellipse cx="206.0" cy="367.0" rx="2.1" ry="2.9"/>
<ellipse cx="182.4" cy="376.4" rx="2.9" ry="3.7"/>
<ellipse cx="193.6" cy="374.4" rx="1.7" ry="1.7"/>
<ellipse cx="283.6" cy="368.4" rx="2.9" ry="8.5"/>
<ellipse cx="277.0" cy="369.6" rx="2.1" ry="1.7"/>
<ellipse cx="301.4" cy="371.4" rx="1.7" ry="1.7"/>
<ellipse cx="291.0" cy="377.0" rx="1.3" ry="1.3"/>
<ellipse cx="183.4" cy="350.0" rx="1.2" ry="1.2"/>
<ellipse cx="172.0" cy="359.0" rx="1.2" ry="1.2"/>
<ellipse cx="273.4" cy="331.4" rx="1.2" ry="1.2"/>
<ellipse cx="267.4" cy="349.0" rx="1.2" ry="1.2"/>
<ellipse cx="248.0" cy="381.0" rx="1.7" ry="1.2"/>
<ellipse cx="356.0" cy="257.0" rx="3.3" ry="2.9"/>
<ellipse cx="362.0" cy="263.6" rx="4.1" ry="4.1"/>
<ellipse cx="365.0" cy="271.0" rx="2.5" ry="3.3"/>
<ellipse cx="338.6" cy="255.6" rx="1.3" ry="1.7"/>
<ellipse cx="321.0" cy="260.4" rx="1.7" ry="1.3"/>
<ellipse cx="324.6" cy="274.0" rx="2.1" ry="2.5"/>
<ellipse cx="341.0" cy="273.6" rx="1.7" ry="2.5"/>
<ellipse cx="332.0" cy="280.4" rx="1.3" ry="1.7"/>
<ellipse cx="345.0" cy="288.0" rx="2.1" ry="2.1"/>
<ellipse cx="332.0" cy="300.0" rx="2.5" ry="2.5"/>
<ellipse cx="323.0" cy="313.0" rx="1.7" ry="1.7"/>
<ellipse cx="371.6" cy="284.0" rx="2.1" ry="1.3"/>
<ellipse cx="372.6" cy="294.0" rx="1.2" ry="1.7"/>
<ellipse cx="390.0" cy="280.0" rx="1.2" ry="1.7"/>
<ellipse cx="416.6" cy="282.0" rx="1.7" ry="3.3"/>
<ellipse cx="424.4" cy="286.4" rx="1.3" ry="1.2"/>
<ellipse cx="431.0" cy="294.0" rx="3.7" ry="2.5"/>
<ellipse cx="421.4" cy="307.0" rx="2.5" ry="2.5"/>
<ellipse cx="419.0" cy="313.0" rx="1.3" ry="1.3"/>
<ellipse cx="430.4" cy="318.6" rx="1.7" ry="1.7"/>
<ellipse cx="453.4" cy="314.6" rx="2.1" ry="2.5"/>
<ellipse cx="447.6" cy="317.0" rx="1.3" ry="2.1"/>
<ellipse cx="436.6" cy="328.6" rx="4.9" ry="2.5"/>
<ellipse cx="413.0" cy="336.0" rx="2.9" ry="2.9"/>
<ellipse cx="457.6" cy="335.4" rx="1.3" ry="1.7"/>
<ellipse cx="356.0" cy="315.0" rx="4.1" ry="2.9"/>
<ellipse cx="353.0" cy="328.6" rx="3.3" ry="3.3"/>
<ellipse cx="348.6" cy="359.4" rx="3.7" ry="2.9"/>
<ellipse cx="327.0" cy="367.0" rx="5.7" ry="3.3" transform="rotate(-30 327.0 367.0)"/>
<ellipse cx="331.0" cy="373.6" rx="1.7" ry="2.5"/>
<ellipse cx="323.4" cy="373.0" rx="2.1" ry="2.1"/>
<ellipse cx="363.4" cy="369.0" rx="1.3" ry="1.3"/>
<ellipse cx="386.6" cy="377.0" rx="2.5" ry="1.7"/>
<ellipse cx="467.0" cy="363.0" rx="3.3" ry="5.1"/>
<ellipse cx="457.4" cy="373.0" rx="1.7" ry="2.1"/>
<ellipse cx="401.4" cy="369.0" rx="1.3" ry="1.7"/>
<ellipse cx="407.0" cy="370.0" rx="1.7" ry="1.2"/>
<ellipse cx="411.0" cy="361.0" rx="1.3" ry="1.3"/>
<ellipse cx="402.0" cy="361.6" rx="1.2" ry="1.2"/>
<ellipse cx="395.0" cy="361.0" rx="1.3" ry="1.2"/>
<ellipse cx="389.0" cy="363.0" rx="1.2" ry="1.2"/>
<ellipse cx="428.6" cy="357.0" rx="1.2" ry="1.3"/>
<ellipse cx="380.0" cy="234.0" rx="1.7" ry="1.2"/>
<ellipse cx="437.6" cy="239.6" rx="1.2" ry="1.3"/>
<ellipse cx="389.0" cy="265.6" rx="1.2" ry="1.2"/>
<ellipse cx="369.0" cy="351.0" rx="1.3" ry="1.3"/>
<ellipse cx="338.6" cy="370.0" rx="1.2" ry="1.2"/>
<ellipse cx="452.0" cy="279.0" rx="4.1" ry="5.7"/>
<ellipse cx="447.6" cy="292.0" rx="4.9" ry="6.5"/>
<ellipse cx="483.0" cy="273.0" rx="2.9" ry="2.1"/>
<ellipse cx="466.6" cy="288.4" rx="1.7" ry="1.7"/>
<ellipse cx="526.6" cy="240.4" rx="3.7" ry="4.5"/>
<ellipse cx="558.0" cy="235.0" rx="1.7" ry="4.1"/>
<ellipse cx="582.0" cy="237.0" rx="1.7" ry="2.1"/>
<ellipse cx="533.0" cy="235.0" rx="1.3" ry="1.7"/>
<ellipse cx="505.0" cy="249.0" rx="1.3" ry="2.9"/>
<ellipse cx="509.6" cy="258.4" rx="1.3" ry="1.7"/>
<ellipse cx="527.6" cy="263.6" rx="2.1" ry="3.7"/>
<ellipse cx="532.6" cy="275.0" rx="2.1" ry="3.3"/>
<ellipse cx="536.0" cy="255.6" rx="1.7" ry="1.7"/>
<ellipse cx="551.6" cy="252.6" rx="1.7" ry="2.1"/>
<ellipse cx="525.0" cy="250.0" rx="1.2" ry="1.2"/>
<ellipse cx="498.6" cy="269.6" rx="2.1" ry="2.5"/>
<ellipse cx="511.0" cy="287.4" rx="1.3" ry="1.7"/>
<ellipse cx="526.6" cy="302.4" rx="3.7" ry="2.5"/>
<ellipse cx="542.0" cy="300.0" rx="1.7" ry="2.9"/>
<ellipse cx="557.4" cy="285.0" rx="1.2" ry="1.3"/>
<ellipse cx="541.4" cy="286.0" rx="1.2" ry="1.2"/>
<ellipse cx="560.4" cy="297.4" rx="1.7" ry="1.3"/>
<ellipse cx="566.4" cy="299.0" rx="1.3" ry="1.7"/>
<ellipse cx="570.6" cy="304.0" rx="1.7" ry="2.1"/>
<ellipse cx="577.0" cy="295.6" rx="4.5" ry="3.7"/>
<ellipse cx="534.0" cy="319.6" rx="2.9" ry="3.3"/>
<ellipse cx="539.0" cy="323.0" rx="1.7" ry="1.3"/>
<ellipse cx="544.0" cy="328.0" rx="1.2" ry="1.2"/>
<ellipse cx="552.0" cy="338.4" rx="2.9" ry="2.1"/>
<ellipse cx="544.4" cy="355.0" rx="2.1" ry="2.9"/>
<ellipse cx="536.4" cy="341.6" rx="1.2" ry="1.3"/>
<ellipse cx="529.0" cy="353.4" rx="1.2" ry="1.3"/>
<ellipse cx="585.0" cy="358.0" rx="1.3" ry="2.1"/>
<ellipse cx="560.0" cy="363.4" rx="2.1" ry="1.3"/>
<ellipse cx="565.0" cy="368.4" rx="1.3" ry="1.3"/>
<ellipse cx="533.0" cy="365.0" rx="1.7" ry="3.3"/>
<ellipse cx="533.0" cy="369.0" rx="1.7" ry="1.3"/>
<ellipse cx="546.0" cy="370.6" rx="2.1" ry="1.3"/>
<ellipse cx="561.0" cy="374.4" rx="4.1" ry="5.3"/>
<ellipse cx="553.4" cy="378.6" rx="2.9" ry="2.1"/>
<ellipse cx="510.0" cy="376.0" rx="2.5" ry="3.7"/>
<ellipse cx="504.0" cy="374.6" rx="1.3" ry="2.1"/>
<ellipse cx="512.6" cy="369.6" rx="1.3" ry="1.3"/>
<ellipse cx="491.6" cy="376.0" rx="1.3" ry="1.7"/>
<ellipse cx="468.6" cy="362.4" rx="4.5" ry="5.1"/>
<ellipse cx="476.0" cy="359.0" rx="1.3" ry="1.3"/>
<ellipse cx="457.0" cy="373.6" rx="2.1" ry="2.5"/>
<ellipse cx="457.6" cy="335.4" rx="1.7" ry="1.7"/>
<ellipse cx="479.4" cy="336.4" rx="2.1" ry="1.7"/>
<ellipse cx="487.6" cy="335.4" rx="1.2" ry="1.3"/>
<ellipse cx="505.0" cy="334.0" rx="1.3" ry="2.1"/>
<ellipse cx="488.0" cy="352.6" rx="1.7" ry="1.3"/>
<ellipse cx="484.6" cy="354.0" rx="1.2" ry="1.2"/>
<ellipse cx="468.6" cy="326.0" rx="1.3" ry="1.2"/>
<ellipse cx="453.4" cy="314.4" rx="2.5" ry="2.5"/>
<ellipse cx="503.0" cy="311.0" rx="1.2" ry="1.7"/>
<ellipse cx="490.6" cy="303.0" rx="2.1" ry="1.3"/>
<ellipse cx="480.6" cy="291.6" rx="1.3" ry="1.7"/>
<ellipse cx="470.0" cy="311.0" rx="2.1" ry="1.3"/>
<ellipse cx="515.0" cy="306.0" rx="1.2" ry="1.2"/>
<ellipse cx="507.0" cy="323.0" rx="1.2" ry="1.2"/>
<ellipse cx="478.0" cy="317.0" rx="1.2" ry="1.2"/>
<ellipse cx="564.6" cy="331.0" rx="1.2" ry="1.2"/>
<ellipse cx="78.6" cy="385.6" rx="5.3" ry="4.1"/>
<ellipse cx="76.0" cy="391.6" rx="2.1" ry="1.3"/>
<ellipse cx="86.6" cy="390.4" rx="1.3" ry="1.3"/>
<ellipse cx="61.4" cy="385.0" rx="2.1" ry="2.5"/>
<ellipse cx="96.6" cy="390.0" rx="2.1" ry="2.5"/>
<ellipse cx="127.0" cy="391.0" rx="1.7" ry="1.7"/>
<ellipse cx="135.6" cy="399.0" rx="3.3" ry="2.1"/>
<ellipse cx="166.0" cy="409.0" rx="3.3" ry="3.7"/>
<ellipse cx="168.0" cy="402.0" rx="1.7" ry="3.3"/>
<ellipse cx="42.0" cy="419.6" rx="3.3" ry="1.7" transform="rotate(25 42.0 419.6)"/>
<ellipse cx="27.4" cy="421.4" rx="1.7" ry="1.3"/>
<ellipse cx="69.4" cy="430.0" rx="3.3" ry="1.7"/>
<ellipse cx="48.6" cy="433.6" rx="1.7" ry="2.1"/>
<ellipse cx="38.0" cy="448.0" rx="3.3" ry="2.9" transform="rotate(30 38.0 448.0)"/>
<ellipse cx="52.0" cy="450.4" rx="1.7" ry="1.3"/>
<ellipse cx="45.0" cy="459.4" rx="2.5" ry="1.3"/>
<ellipse cx="21.4" cy="466.4" rx="1.7" ry="2.1"/>
<ellipse cx="33.0" cy="470.6" rx="1.7" ry="1.7"/>
<ellipse cx="51.0" cy="473.6" rx="1.7" ry="1.7"/>
<ellipse cx="66.4" cy="461.4" rx="2.5" ry="2.5"/>
<ellipse cx="68.0" cy="469.0" rx="1.2" ry="1.3"/>
<ellipse cx="86.0" cy="456.4" rx="1.7" ry="1.3"/>
<ellipse cx="104.0" cy="453.4" rx="2.5" ry="3.7"/>
<ellipse cx="93.4" cy="476.0" rx="2.9" ry="2.1"/>
<ellipse cx="117.0" cy="457.6" rx="1.7" ry="1.7"/>
<ellipse cx="132.6" cy="439.6" rx="2.1" ry="2.1"/>
<ellipse cx="141.4" cy="440.4" rx="1.3" ry="1.3"/>
<ellipse cx="128.6" cy="448.0" rx="1.2" ry="1.3"/>
<ellipse cx="147.0" cy="455.4" rx="2.9" ry="2.1"/>
<ellipse cx="139.0" cy="458.0" rx="1.3" ry="1.2"/>
<ellipse cx="146.2" cy="467.4" rx="1.7" ry="2.5"/>
<ellipse cx="153.0" cy="473.4" rx="1.3" ry="1.7"/>
<ellipse cx="142.6" cy="482.0" rx="3.7" ry="2.5"/>
<ellipse cx="145.6" cy="494.0" rx="2.5" ry="1.7"/>
<ellipse cx="123.4" cy="469.4" rx="1.3" ry="1.3"/>
<ellipse cx="133.0" cy="508.4" rx="4.9" ry="2.1" transform="rotate(-15 133.0 508.4)"/>
<ellipse cx="126.0" cy="512.4" rx="1.7" ry="1.7"/>
<ellipse cx="142.6" cy="503.6" rx="2.1" ry="1.3"/>
<ellipse cx="60.4" cy="501.4" rx="1.7" ry="1.3"/>
<ellipse cx="71.4" cy="498.0" rx="1.2" ry="1.3"/>
<ellipse cx="72.0" cy="507.0" rx="1.2" ry="1.3"/>
<ellipse cx="54.4" cy="514.0" rx="1.3" ry="1.7"/>
<ellipse cx="114.0" cy="513.6" rx="1.3" ry="1.2"/>
<ellipse cx="121.0" cy="505.0" rx="1.3" ry="1.2"/>
<ellipse cx="159.0" cy="521.0" rx="1.7" ry="1.7"/>
<ellipse cx="150.0" cy="529.0" rx="2.1" ry="2.1"/>
<ellipse cx="167.0" cy="525.0" rx="2.1" ry="1.7"/>
<ellipse cx="162.6" cy="508.0" rx="1.2" ry="1.2"/>
<ellipse cx="160.4" cy="425.6" rx="1.3" ry="1.7"/>
<ellipse cx="86.0" cy="418.6" rx="1.3" ry="1.3"/>
<ellipse cx="37.0" cy="391.4" rx="1.3" ry="1.2"/>
<ellipse cx="32.6" cy="402.0" rx="1.2" ry="1.2"/>
<ellipse cx="62.4" cy="394.4" rx="1.2" ry="1.7"/>
<ellipse cx="31.0" cy="383.0" rx="1.3" ry="1.2"/>
<ellipse cx="82.0" cy="490.0" rx="1.3" ry="2.1"/>
<ellipse cx="171.4" cy="404.0" rx="4.5" ry="5.1"/>
<ellipse cx="199.0" cy="407.0" rx="6.5" ry="5.1"/>
<ellipse cx="206.6" cy="421.4" rx="4.1" ry="7.3"/>
<ellipse cx="210.0" cy="398.0" rx="2.9" ry="2.9"/>
<ellipse cx="216.0" cy="395.6" rx="2.1" ry="2.9"/>
<ellipse cx="213.4" cy="408.4" rx="1.7" ry="2.1"/>
<ellipse cx="202.6" cy="392.0" rx="1.7" ry="1.3"/>
<ellipse cx="252.6" cy="392.0" rx="2.5" ry="3.7"/>
<ellipse cx="239.4" cy="400.0" rx="1.3" ry="1.7"/>
<ellipse cx="290.0" cy="385.6" rx="2.5" ry="4.5"/>
<ellipse cx="291.4" cy="391.6" rx="2.9" ry="1.3"/>
<ellipse cx="299.0" cy="391.6" rx="2.1" ry="1.7"/>
<ellipse cx="279.4" cy="398.4" rx="3.3" ry="3.3"/>
<ellipse cx="270.6" cy="400.6" rx="2.5" ry="1.7"/>
<ellipse cx="262.4" cy="402.4" rx="1.7" ry="1.3"/>
<ellipse cx="315.0" cy="392.0" rx="4.5" ry="3.3"/>
<ellipse cx="316.0" cy="398.0" rx="2.1" ry="2.1"/>
<ellipse cx="307.0" cy="405.4" rx="1.7" ry="2.1"/>
<ellipse cx="293.6" cy="421.4" rx="1.3" ry="2.9"/>
<ellipse cx="269.6" cy="426.4" rx="2.1" ry="2.1"/>
<ellipse cx="284.4" cy="433.6" rx="2.1" ry="3.7"/>
<ellipse cx="244.6" cy="426.4" rx="5.7" ry="7.7"/>
<ellipse cx="257.4" cy="421.4" rx="1.7" ry="1.7"/>
<ellipse cx="194.6" cy="440.0" rx="6.5" ry="2.9" transform="rotate(30 194.6 440.0)"/>
<ellipse cx="216.0" cy="440.4" rx="1.7" ry="1.7"/>
<ellipse cx="181.4" cy="445.0" rx="2.9" ry="1.7"/>
<ellipse cx="177.0" cy="451.6" rx="3.7" ry="2.9"/>
<ellipse cx="226.4" cy="453.0" rx="3.3" ry="2.5"/>
<ellipse cx="307.0" cy="447.4" rx="1.7" ry="1.3"/>
<ellipse cx="312.6" cy="466.0" rx="2.5" ry="3.3"/>
<ellipse cx="268.0" cy="463.0" rx="1.3" ry="1.7"/>
<ellipse cx="254.0" cy="487.0" rx="2.1" ry="2.9"/>
<ellipse cx="231.0" cy="476.0" rx="2.1" ry="3.3"/>
<ellipse cx="274.4" cy="477.6" rx="1.7" ry="2.5"/>
<ellipse cx="284.4" cy="479.0" rx="1.3" ry="1.3"/>
<ellipse cx="257.0" cy="496.4" rx="2.5" ry="3.7"/>
<ellipse cx="271.6" cy="508.0" rx="4.5" ry="8.1"/>
<ellipse cx="190.6" cy="503.0" rx="3.3" ry="4.1"/>
<ellipse cx="182.6" cy="504.0" rx="2.1" ry="2.9"/>
<ellipse cx="174.0" cy="514.0" rx="2.1" ry="1.7"/>
<ellipse cx="251.4" cy="516.4" rx="2.5" ry="1.7"/>
<ellipse cx="276.0" cy="528.0" rx="1.7" ry="2.9"/>
<ellipse cx="196.6" cy="529.0" rx="4.1" ry="2.5"/>
<ellipse cx="187.4" cy="523.6" rx="1.7" ry="1.3"/>
<ellipse cx="171.0" cy="525.6" rx="1.7" ry="1.7"/>
<ellipse cx="176.0" cy="529.6" rx="1.7" ry="1.3"/>
<ellipse cx="317.0" cy="506.0" rx="1.7" ry="2.1"/>
<ellipse cx="307.0" cy="500.4" rx="1.3" ry="1.3"/>
<ellipse cx="299.4" cy="498.4" rx="1.7" ry="1.7"/>
<ellipse cx="212.0" cy="499.6" rx="1.7" ry="1.2"/>
<ellipse cx="225.0" cy="491.6" rx="1.3" ry="1.2"/>
<ellipse cx="212.6" cy="514.0" rx="1.2" ry="1.3"/>
<ellipse cx="197.0" cy="473.6" rx="1.7" ry="1.2"/>
<ellipse cx="191.4" cy="469.4" rx="1.3" ry="1.2"/>
<ellipse cx="184.0" cy="479.4" rx="1.3" ry="1.2"/>
<ellipse cx="233.0" cy="446.4" rx="1.7" ry="1.7"/>
<ellipse cx="289.0" cy="413.0" rx="1.2" ry="1.2"/>
<ellipse cx="251.0" cy="414.0" rx="1.2" ry="1.2"/>
<ellipse cx="317.0" cy="422.0" rx="1.3" ry="1.3"/>
<ellipse cx="211.6" cy="383.0" rx="1.3" ry="1.2"/>
<ellipse cx="181.0" cy="424.0" rx="1.2" ry="1.2"/>
<ellipse cx="403.0" cy="384.0" rx="3.3" ry="2.5"/>
<ellipse cx="396.6" cy="387.0" rx="1.7" ry="2.5"/>
<ellipse cx="441.0" cy="384.0" rx="1.7" ry="2.1"/>
<ellipse cx="342.0" cy="391.4" rx="1.7" ry="1.2"/>
<ellipse cx="362.0" cy="401.4" rx="1.7" ry="1.7"/>
<ellipse cx="400.6" cy="401.0" rx="1.7" ry="1.7"/>
<ellipse cx="393.4" cy="404.4" rx="1.3" ry="1.2"/>
<ellipse cx="423.6" cy="407.0" rx="2.9" ry="2.9"/>
<ellipse cx="364.0" cy="419.4" rx="2.1" ry="1.7"/>
<ellipse cx="328.6" cy="412.6" rx="1.2" ry="1.3"/>
<ellipse cx="391.0" cy="423.6" rx="2.5" ry="1.7"/>
<ellipse cx="386.6" cy="433.6" rx="2.5" ry="2.5"/>
<ellipse cx="423.0" cy="425.4" rx="4.9" ry="4.1" transform="rotate(30 423.0 425.4)"/>
<ellipse cx="462.6" cy="434.4" rx="3.7" ry="4.9"/>
<ellipse cx="456.0" cy="441.4" rx="2.1" ry="2.9" transform="rotate(-30 456.0 441.4)"/>
<ellipse cx="446.0" cy="446.6" rx="1.7" ry="1.7"/>
<ellipse cx="436.6" cy="454.4" rx="2.9" ry="2.5"/>
<ellipse cx="334.0" cy="440.4" rx="2.1" ry="2.1"/>
<ellipse cx="329.0" cy="447.4" rx="2.1" ry="2.5"/>
<ellipse cx="367.0" cy="455.0" rx="3.7" ry="2.9"/>
<ellipse cx="400.0" cy="452.0" rx="2.9" ry="1.7"/>
<ellipse cx="403.0" cy="460.0" rx="3.3" ry="2.5" transform="rotate(-30 403.0 460.0)"/>
<ellipse cx="326.0" cy="461.6" rx="1.7" ry="1.3"/>
<ellipse cx="357.4" cy="459.0" rx="1.3" ry="1.2"/>
<ellipse cx="365.4" cy="444.6" rx="1.2" ry="1.2"/>
<ellipse cx="345.0" cy="476.6" rx="1.3" ry="1.7"/>
<ellipse cx="363.4" cy="472.0" rx="1.2" ry="1.2"/>
<ellipse cx="364.0" cy="479.6" rx="1.2" ry="1.2"/>
<ellipse cx="358.6" cy="485.6" rx="1.3" ry="1.3"/>
<ellipse cx="329.4" cy="490.0" rx="5.3" ry="5.7"/>
<ellipse cx="322.0" cy="494.6" rx="1.3" ry="1.3"/>
<ellipse cx="342.6" cy="490.0" rx="1.7" ry="1.3"/>
<ellipse cx="347.0" cy="485.6" rx="1.2" ry="1.3"/>
<ellipse cx="394.6" cy="492.0" rx="2.9" ry="3.3"/>
<ellipse cx="406.0" cy="485.4" rx="1.7" ry="1.7"/>
<ellipse cx="380.0" cy="507.0" rx="2.5" ry="3.7" transform="rotate(-20 380.0 507.0)"/>
<ellipse cx="409.4" cy="500.4" rx="1.7" ry="1.3"/>
<ellipse cx="422.0" cy="496.0" rx="1.2" ry="1.3"/>
<ellipse cx="464.6" cy="498.0" rx="1.7" ry="2.9"/>
<ellipse cx="462.6" cy="526.0" rx="2.1" ry="1.7"/>
<ellipse cx="365.0" cy="522.6" rx="1.3" ry="1.2"/>
<ellipse cx="335.0" cy="514.6" rx="1.2" ry="1.2"/>
<ellipse cx="399.0" cy="417.0" rx="1.2" ry="1.3"/>
<ellipse cx="467.0" cy="396.4" rx="1.2" ry="1.3"/>
<ellipse cx="451.0" cy="467.6" rx="1.2" ry="1.2"/>
<ellipse cx="479.0" cy="391.4" rx="6.5" ry="5.1"/>
<ellipse cx="502.0" cy="392.0" rx="1.7" ry="1.3"/>
<ellipse cx="508.0" cy="384.4" rx="1.7" ry="1.3"/>
<ellipse cx="535.4" cy="390.4" rx="1.7" ry="1.7"/>
<ellipse cx="540.4" cy="395.0" rx="1.7" ry="3.3"/>
<ellipse cx="574.6" cy="407.0" rx="3.7" ry="4.9"/>
<ellipse cx="515.0" cy="408.0" rx="1.7" ry="1.2"/>
<ellipse cx="496.4" cy="417.0" rx="1.3" ry="1.3"/>
<ellipse cx="479.6" cy="418.0" rx="1.2" ry="1.3"/>
<ellipse cx="588.0" cy="427.6" rx="3.7" ry="2.9" transform="rotate(30 588.0 427.6)"/>
<ellipse cx="554.0" cy="432.6" rx="2.1" ry="1.7"/>
<ellipse cx="554.6" cy="418.0" rx="1.3" ry="1.3"/>
<ellipse cx="505.6" cy="440.4" rx="1.7" ry="3.3"/>
<ellipse cx="519.0" cy="438.0" rx="1.7" ry="1.7"/>
<ellipse cx="546.6" cy="447.6" rx="1.2" ry="1.3"/>
<ellipse cx="493.4" cy="449.6" rx="1.7" ry="1.2"/>
<ellipse cx="522.6" cy="460.6" rx="3.3" ry="2.9"/>
<ellipse cx="554.4" cy="466.0" rx="1.7" ry="2.1"/>
<ellipse cx="564.6" cy="479.4" rx="2.1" ry="2.5"/>
<ellipse cx="515.6" cy="502.6" rx="4.5" ry="2.1"/>
<ellipse cx="570.4" cy="496.6" rx="2.1" ry="2.1"/>
<ellipse cx="489.6" cy="483.4" rx="2.5" ry="2.1"/>
<ellipse cx="485.6" cy="476.6" rx="1.3" ry="1.7"/>
<ellipse cx="480.4" cy="494.6" rx="1.3" ry="1.3"/>
<ellipse cx="481.4" cy="504.0" rx="1.3" ry="1.7"/>
<ellipse cx="577.0" cy="504.4" rx="2.1" ry="1.3"/>
<ellipse cx="587.0" cy="505.0" rx="1.3" ry="1.7"/>
<ellipse cx="562.0" cy="510.0" rx="1.2" ry="1.7"/>
<ellipse cx="573.4" cy="520.6" rx="2.9" ry="2.9"/>
<ellipse cx="568.0" cy="515.0" rx="1.2" ry="1.2"/>
<ellipse cx="522.0" cy="513.0" rx="2.5" ry="2.1"/>
<ellipse cx="498.0" cy="515.0" rx="1.7" ry="1.7"/>
<ellipse cx="485.0" cy="521.6" rx="2.1" ry="3.3"/>
<ellipse cx="525.6" cy="527.4" rx="1.7" ry="2.9"/>
<ellipse cx="508.6" cy="526.4" rx="1.3" ry="2.1"/>
<ellipse cx="528.0" cy="520.0" rx="1.2" ry="1.2"/>
<ellipse cx="592.0" cy="513.0" rx="1.2" ry="1.3"/>
<ellipse cx="467.0" cy="397.0" rx="1.3" ry="1.3"/>
<ellipse cx="94.0" cy="536.4" rx="4.9" ry="4.5"/>
<ellipse cx="95.4" cy="543.0" rx="1.7" ry="1.7"/>
<ellipse cx="48.0" cy="538.6" rx="2.9" ry="2.1"/>
<ellipse cx="66.0" cy="543.0" rx="2.1" ry="1.7"/>
<ellipse cx="32.6" cy="546.4" rx="2.1" ry="1.3"/>
<ellipse cx="44.0" cy="553.0" rx="3.7" ry="2.1"/>
<ellipse cx="41.4" cy="556.4" rx="1.3" ry="2.1"/>
<ellipse cx="46.0" cy="561.0" rx="1.7" ry="2.9"/>
<ellipse cx="40.0" cy="566.0" rx="2.5" ry="2.1"/>
<ellipse cx="80.0" cy="566.0" rx="4.5" ry="3.3"/>
<ellipse cx="71.4" cy="571.0" rx="2.1" ry="2.1"/>
<ellipse cx="105.0" cy="556.6" rx="2.1" ry="2.1"/>
<ellipse cx="110.6" cy="553.4" rx="1.3" ry="1.3"/>
<ellipse cx="100.4" cy="564.4" rx="1.3" ry="2.5"/>
<ellipse cx="123.0" cy="533.0" rx="1.7" ry="2.1"/>
<ellipse cx="167.0" cy="538.0" rx="2.1" ry="2.9"/>
<ellipse cx="132.6" cy="558.0" rx="3.3" ry="2.9"/>
<ellipse cx="150.0" cy="565.0" rx="3.7" ry="3.3"/>
<ellipse cx="168.0" cy="581.0" rx="1.7" ry="6.1"/>
<ellipse cx="22.0" cy="575.0" rx="2.1" ry="2.5"/>
<ellipse cx="28.0" cy="569.4" rx="1.3" ry="1.3"/>
<ellipse cx="49.4" cy="576.4" rx="1.7" ry="1.3"/>
<ellipse cx="33.0" cy="573.0" rx="1.2" ry="1.2"/>
<ellipse cx="40.0" cy="586.0" rx="1.3" ry="1.3"/>
<ellipse cx="102.6" cy="583.6" rx="1.3" ry="1.3"/>
<ellipse cx="112.4" cy="582.0" rx="1.7" ry="1.7"/>
<ellipse cx="128.6" cy="591.0" rx="2.9" ry="2.1"/>
<ellipse cx="87.0" cy="599.6" rx="2.5" ry="3.3"/>
<ellipse cx="108.6" cy="603.0" rx="2.9" ry="2.9"/>
<ellipse cx="98.0" cy="601.4" rx="1.2" ry="1.7"/>
<ellipse cx="56.0" cy="595.6" rx="1.3" ry="1.7"/>
<ellipse cx="34.0" cy="599.0" rx="1.7" ry="1.3"/>
<ellipse cx="58.4" cy="610.6" rx="1.7" ry="2.1"/>
<ellipse cx="70.6" cy="616.0" rx="2.1" ry="2.1"/>
<ellipse cx="81.0" cy="607.6" rx="1.2" ry="1.2"/>
<ellipse cx="134.0" cy="610.0" rx="2.1" ry="4.1" transform="rotate(20 134.0 610.0)"/>
<ellipse cx="151.0" cy="602.4" rx="2.5" ry="1.3"/>
<ellipse cx="141.4" cy="606.0" rx="1.3" ry="1.3"/>
<ellipse cx="166.6" cy="617.4" rx="1.7" ry="1.7"/>
<ellipse cx="37.4" cy="625.0" rx="3.7" ry="2.5"/>
<ellipse cx="30.4" cy="633.0" rx="1.7" ry="2.1"/>
<ellipse cx="23.0" cy="637.0" rx="2.5" ry="2.9"/>
<ellipse cx="22.6" cy="650.0" rx="3.3" ry="3.7"/>
<ellipse cx="32.6" cy="644.4" rx="1.2" ry="1.2"/>
<ellipse cx="77.0" cy="627.0" rx="2.9" ry="4.1" transform="rotate(-20 77.0 627.0)"/>
<ellipse cx="85.0" cy="632.6" rx="1.7" ry="1.7"/>
<ellipse cx="74.0" cy="637.0" rx="1.7" ry="1.7"/>
<ellipse cx="58.6" cy="645.4" rx="2.5" ry="2.5"/>
<ellipse cx="97.6" cy="648.0" rx="4.5" ry="4.9"/>
<ellipse cx="88.0" cy="652.0" rx="2.9" ry="2.1"/>
<ellipse cx="110.6" cy="651.0" rx="1.7" ry="1.3"/>
<ellipse cx="145.0" cy="628.6" rx="2.1" ry="1.3"/>
<ellipse cx="160.6" cy="625.0" rx="2.1" ry="2.9"/>
<ellipse cx="168.0" cy="633.0" rx="2.5" ry="5.1"/>
<ellipse cx="128.6" cy="636.4" rx="1.7" ry="1.2"/>
<ellipse cx="123.0" cy="646.0" rx="1.2" ry="1.3"/>
<ellipse cx="102.0" cy="631.6" rx="1.2" ry="1.2"/>
<ellipse cx="65.0" cy="654.0" rx="1.2" ry="1.2"/>
<ellipse cx="158.0" cy="576.0" rx="1.2" ry="1.3"/>
<ellipse cx="163.0" cy="572.0" rx="1.2" ry="1.3"/>
<ellipse cx="317.0" cy="641.0" rx="2.9" ry="4.1"/>
<ellipse cx="194.0" cy="621.0" rx="6.9" ry="2.9"/>
<ellipse cx="227.6" cy="633.0" rx="1.7" ry="2.5"/>
<ellipse cx="171.0" cy="581.6" rx="3.3" ry="5.7"/>
<ellipse cx="178.6" cy="595.0" rx="3.3" ry="2.9"/>
<ellipse cx="171.0" cy="562.4" rx="1.7" ry="1.3"/>
<ellipse cx="198.6" cy="554.0" rx="1.7" ry="1.7"/>
<ellipse cx="197.0" cy="566.4" rx="2.5" ry="1.3"/>
<ellipse cx="215.0" cy="545.0" rx="1.2" ry="1.3"/>
<ellipse cx="240.6" cy="565.0" rx="2.1" ry="2.1"/>
<ellipse cx="240.4" cy="574.0" rx="1.3" ry="1.7"/>
<ellipse cx="235.4" cy="584.0" rx="2.1" ry="2.1"/>
<ellipse cx="254.0" cy="554.0" rx="1.7" ry="1.7"/>
<ellipse cx="252.0" cy="562.0" rx="1.7" ry="2.5"/>
<ellipse cx="264.6" cy="559.6" rx="2.5" ry="2.9"/>
<ellipse cx="277.0" cy="585.0" rx="1.3" ry="2.1"/>
<ellipse cx="285.6" cy="588.0" rx="2.5" ry="2.9"/>
<ellipse cx="267.0" cy="593.0" rx="2.1" ry="3.7"/>
<ellipse cx="307.6" cy="579.6" rx="1.7" ry="2.5"/>
<ellipse cx="289.6" cy="577.4" rx="1.2" ry="1.3"/>
<ellipse cx="295.0" cy="565.0" rx="1.2" ry="1.2"/>
<ellipse cx="249.0" cy="604.0" rx="2.9" ry="2.1"/>
<ellipse cx="282.0" cy="604.4" rx="1.3" ry="3.3"/>
<ellipse cx="296.4" cy="604.4" rx="1.3" ry="1.7"/>
<ellipse cx="310.4" cy="603.4" rx="2.1" ry="2.1"/>
<ellipse cx="224.0" cy="590.0" rx="1.7" ry="1.2"/>
<ellipse cx="217.0" cy="589.0" rx="1.2" ry="1.2"/>
<ellipse cx="218.0" cy="570.0" rx="1.2" ry="1.2"/>
<ellipse cx="271.0" cy="610.0" rx="1.2" ry="1.2"/>
<ellipse cx="233.0" cy="650.0" rx="1.2" ry="1.3"/>
<ellipse cx="181.4" cy="651.0" rx="1.3" ry="1.7"/>
<ellipse cx="297.0" cy="637.0" rx="1.7" ry="2.1"/>
<ellipse cx="295.6" cy="642.0" rx="1.7" ry="1.2"/>
<ellipse cx="264.0" cy="633.0" rx="1.2" ry="1.2"/>
<ellipse cx="261.0" cy="533.0" rx="1.3" ry="3.3"/>
<ellipse cx="350.6" cy="536.0" rx="2.9" ry="4.9"/>
<ellipse cx="321.0" cy="545.6" rx="2.9" ry="4.5"/>
<ellipse cx="377.6" cy="536.4" rx="1.7" ry="1.3"/>
<ellipse cx="340.6" cy="554.4" rx="1.3" ry="1.3"/>
<ellipse cx="351.0" cy="552.4" rx="1.3" ry="1.3"/>
<ellipse cx="340.6" cy="570.0" rx="2.9" ry="4.1"/>
<ellipse cx="437.0" cy="539.4" rx="1.3" ry="1.3"/>
<ellipse cx="439.6" cy="553.4" rx="1.7" ry="2.1"/>
<ellipse cx="467.0" cy="577.0" rx="1.3" ry="2.1"/>
<ellipse cx="432.4" cy="584.4" rx="4.1" ry="5.1"/>
<ellipse cx="445.0" cy="600.0" rx="3.3" ry="4.5" transform="rotate(30 445.0 600.0)"/>
<ellipse cx="408.4" cy="608.4" rx="1.7" ry="2.1"/>
<ellipse cx="385.4" cy="589.0" rx="1.2" ry="1.2"/>
<ellipse cx="353.4" cy="593.6" rx="1.3" ry="1.7"/>
<ellipse cx="326.4" cy="600.0" rx="1.3" ry="1.3"/>
<ellipse cx="335.4" cy="606.4" rx="2.5" ry="2.9"/>
<ellipse cx="371.6" cy="606.0" rx="4.1" ry="5.3"/>
<ellipse cx="373.6" cy="623.4" rx="2.9" ry="3.3"/>
<ellipse cx="358.0" cy="620.4" rx="1.7" ry="1.2"/>
<ellipse cx="344.6" cy="630.4" rx="4.1" ry="4.1"/>
<ellipse cx="334.0" cy="638.4" rx="4.1" ry="4.9"/>
<ellipse cx="320.0" cy="641.0" rx="2.1" ry="3.7"/>
<ellipse cx="375.0" cy="651.0" rx="1.7" ry="2.1"/>
<ellipse cx="442.0" cy="641.6" rx="2.1" ry="1.7"/>
<ellipse cx="472.6" cy="549.0" rx="2.9" ry="2.9"/>
<ellipse cx="470.6" cy="544.0" rx="1.2" ry="1.2"/>
<ellipse cx="480.6" cy="562.0" rx="1.3" ry="1.7"/>
<ellipse cx="528.0" cy="543.6" rx="2.5" ry="3.3"/>
<ellipse cx="529.4" cy="553.6" rx="2.5" ry="2.5"/>
<ellipse cx="530.0" cy="560.0" rx="4.5" ry="2.9"/>
<ellipse cx="529.6" cy="570.0" rx="2.9" ry="2.1"/>
<ellipse cx="511.4" cy="537.0" rx="2.1" ry="1.7"/>
<ellipse cx="511.0" cy="547.0" rx="1.3" ry="1.2"/>
<ellipse cx="562.6" cy="544.4" rx="4.1" ry="2.5" transform="rotate(30 562.6 544.4)"/>
<ellipse cx="561.4" cy="537.6" rx="2.1" ry="1.7"/>
<ellipse cx="580.0" cy="545.0" rx="1.7" ry="1.3"/>
<ellipse cx="587.4" cy="556.4" rx="1.2" ry="1.7"/>
<ellipse cx="550.4" cy="575.6" rx="1.3" ry="1.7"/>
<ellipse cx="486.4" cy="578.0" rx="2.9" ry="2.5"/>
<ellipse cx="528.6" cy="592.0" rx="2.9" ry="3.7"/>
<ellipse cx="586.6" cy="591.6" rx="1.2" ry="1.3"/>
<ellipse cx="473.0" cy="616.0" rx="3.3" ry="4.1"/>
<ellipse cx="502.0" cy="625.6" rx="4.9" ry="4.5"/>
<ellipse cx="513.0" cy="621.0" rx="1.3" ry="3.3" transform="rotate(-20 513.0 621.0)"/>
<ellipse cx="540.0" cy="624.0" rx="2.5" ry="2.1"/>
<ellipse cx="569.0" cy="623.0" rx="1.7" ry="1.7"/>
<ellipse cx="577.0" cy="628.4" rx="2.1" ry="1.3"/>
<ellipse cx="499.0" cy="610.4" rx="1.3" ry="1.2"/>
<ellipse cx="476.0" cy="637.0" rx="1.2" ry="1.3"/>
<ellipse cx="499.6" cy="655.0" rx="1.7" ry="1.2"/>
<ellipse cx="539.0" cy="632.6" rx="1.3" ry="1.2"/>
</g>
<ellipse cx="401" cy="307" rx="3.2" ry="2.4" fill="#8a8a86"/>
<ellipse cx="329" cy="219" rx="2.5" ry="1" fill="#2a78e8" opacity="0.85"/>
<ellipse cx="334" cy="216" rx="3" ry="1" fill="#2a78e8" opacity="0.85"/>
<ellipse cx="337" cy="220" rx="2.5" ry="1" fill="#2a78e8" opacity="0.85"/>
<ellipse cx="331" cy="223" rx="3" ry="0.9" fill="#2a78e8" opacity="0.85"/>
<ellipse cx="335" cy="212" rx="2" ry="0.9" fill="#2a78e8" opacity="0.85"/>
<ellipse cx="410" cy="188" rx="2" ry="2" fill="#2a78e8" opacity="0.85"/>
<ellipse cx="23" cy="100" rx="1.5" ry="1.5" fill="#2a78e8" opacity="0.85"/>
<ellipse cx="584" cy="277" rx="2" ry="1.5" fill="#2a78e8" opacity="0.85"/>
<ellipse cx="554" cy="153" rx="1.5" ry="1.5" fill="#2a78e8" opacity="0.85"/>
<ellipse cx="508" cy="174" rx="2" ry="2" fill="#2a78e8" opacity="0.85"/>
<ellipse cx="497" cy="269" rx="2" ry="1.5" fill="#2a78e8" opacity="0.85"/>
<ellipse cx="465" cy="308" rx="2" ry="2" fill="#2a78e8" opacity="0.85"/>
<ellipse cx="454" cy="277" rx="2" ry="2" fill="#2a78e8" opacity="0.85"/>
<ellipse cx="257" cy="497" rx="2" ry="3" fill="#2a78e8" opacity="0.85"/>
<ellipse cx="233" cy="447" rx="1.5" ry="1.5" fill="#2a78e8" opacity="0.85"/>
<ellipse cx="300" cy="500" rx="1.5" ry="1.5" fill="#2a78e8" opacity="0.85"/>
<ellipse cx="197" cy="528" rx="3" ry="2" fill="#2a78e8" opacity="0.85"/>
<ellipse cx="155" cy="557" rx="3" ry="2" fill="#2a78e8" opacity="0.85"/>
<ellipse cx="40" cy="566" rx="2.5" ry="1.5" fill="#2a78e8" opacity="0.85"/>
<ellipse cx="366" cy="617" rx="2" ry="1.5" fill="#2a78e8" opacity="0.85"/>
<ellipse cx="502" cy="625" rx="2" ry="2" fill="#2a78e8" opacity="0.85"/>
<ellipse cx="523" cy="513" rx="2" ry="1.5" fill="#2a78e8" opacity="0.85"/>
<ellipse cx="471" cy="363" rx="2" ry="1.5" fill="#2a78e8" opacity="0.85"/>
<ellipse cx="364" cy="327" rx="3" ry="1.2" fill="#2a78e8" opacity="0.85"/>
<ellipse cx="378" cy="340" rx="1.5" ry="1" fill="#2a78e8" opacity="0.85"/>
<ellipse cx="143" cy="600" rx="1.5" ry="1.5" fill="#2a78e8" opacity="0.85"/>
<ellipse cx="364" cy="535" rx="2" ry="2" fill="#2a78e8" opacity="0.85"/>
<rect x="517" y="635" width="73" height="18" fill="#777" opacity="0.85"/>
<rect x="515.5" y="633.5" width="72" height="17" fill="#fff" stroke="#3c3c3c" stroke-width="0.9"/>
<path d="M518 637.5V635.5H585V637.5" fill="none" stroke="#222" stroke-width="1"/>
<text x="550.3" y="645.6" font-family="Liberation Sans, sans-serif" font-size="8.6" fill="#111" text-anchor="middle" textLength="27" lengthAdjust="spacingAndGlyphs">100 µm</text>
</g>
<g fill="#e8e8e8"><rect x="23.6" y="79" width="1" height="1.3" opacity="0.8"/><rect x="30.3" y="79" width="1" height="1.3" opacity="0.8"/><rect x="37.0" y="79" width="1" height="1.3" opacity="0.8"/><rect x="43.7" y="78" width="1" height="2.5" /><rect x="50.4" y="79" width="1" height="1.3" opacity="0.8"/><rect x="57.1" y="79" width="1" height="1.3" opacity="0.8"/><rect x="63.8" y="79" width="1" height="1.3" opacity="0.8"/><rect x="70.5" y="79" width="1" height="1.3" opacity="0.8"/><rect x="77.2" y="78" width="1" height="2.5" /><rect x="83.9" y="79" width="1" height="1.3" opacity="0.8"/><rect x="90.6" y="79" width="1" height="1.3" opacity="0.8"/><rect x="97.3" y="79" width="1" height="1.3" opacity="0.8"/><rect x="104.0" y="79" width="1" height="1.3" opacity="0.8"/><rect x="110.7" y="78" width="1" height="2.5" /><rect x="117.4" y="79" width="1" height="1.3" opacity="0.8"/><rect x="124.1" y="79" width="1" height="1.3" opacity="0.8"/><rect x="130.8" y="79" width="1" height="1.3" opacity="0.8"/><rect x="137.5" y="79" width="1" height="1.3" opacity="0.8"/><rect x="144.2" y="78" width="1" height="2.5" /><rect x="150.9" y="79" width="1" height="1.3" opacity="0.8"/><rect x="157.6" y="79" width="1" height="1.3" opacity="0.8"/><rect x="164.3" y="79" width="1" height="1.3" opacity="0.8"/><rect x="171.0" y="79" width="1" height="1.3" opacity="0.8"/><rect x="177.7" y="78" width="1" height="2.5" /><rect x="184.4" y="79" width="1" height="1.3" opacity="0.8"/><rect x="191.1" y="79" width="1" height="1.3" opacity="0.8"/><rect x="197.8" y="79" width="1" height="1.3" opacity="0.8"/><rect x="204.5" y="79" width="1" height="1.3" opacity="0.8"/><rect x="211.2" y="78" width="1" height="2.5" /><rect x="217.9" y="79" width="1" height="1.3" opacity="0.8"/><rect x="224.6" y="79" width="1" height="1.3" opacity="0.8"/><rect x="231.3" y="79" width="1" height="1.3" opacity="0.8"/><rect x="238.0" y="79" width="1" height="1.3" opacity="0.8"/><rect x="244.7" y="78" width="1" height="2.5" /><rect x="251.4" y="79" width="1" height="1.3" opacity="0.8"/><rect x="258.1" y="79" width="1" height="1.3" opacity="0.8"/><rect x="264.8" y="79" width="1" height="1.3" opacity="0.8"/><rect x="271.5" y="79" width="1" height="1.3" opacity="0.8"/><rect x="278.2" y="78" width="1" height="2.5" /><rect x="284.9" y="79" width="1" height="1.3" opacity="0.8"/><rect x="291.6" y="79" width="1" height="1.3" opacity="0.8"/><rect x="298.3" y="79" width="1" height="1.3" opacity="0.8"/><rect x="305.0" y="79" width="1" height="1.3" opacity="0.8"/><rect x="311.7" y="78" width="1" height="2.5" /><rect x="318.4" y="79" width="1" height="1.3" opacity="0.8"/><rect x="325.1" y="79" width="1" height="1.3" opacity="0.8"/><rect x="331.8" y="79" width="1" height="1.3" opacity="0.8"/><rect x="338.5" y="79" width="1" height="1.3" opacity="0.8"/><rect x="345.2" y="78" width="1" height="2.5" /><rect x="351.9" y="79" width="1" height="1.3" opacity="0.8"/><rect x="358.6" y="79" width="1" height="1.3" opacity="0.8"/><rect x="365.3" y="79" width="1" height="1.3" opacity="0.8"/><rect x="372.0" y="79" width="1" height="1.3" opacity="0.8"/><rect x="378.7" y="78" width="1" height="2.5" /><rect x="385.4" y="79" width="1" height="1.3" opacity="0.8"/><rect x="392.1" y="79" width="1" height="1.3" opacity="0.8"/><rect x="398.8" y="79" width="1" height="1.3" opacity="0.8"/><rect x="405.5" y="79" width="1" height="1.3" opacity="0.8"/><rect x="412.2" y="78" width="1" height="2.5" /><rect x="418.9" y="79" width="1" height="1.3" opacity="0.8"/><rect x="425.6" y="79" width="1" height="1.3" opacity="0.8"/><rect x="432.3" y="79" width="1" height="1.3" opacity="0.8"/><rect x="439.0" y="79" width="1" height="1.3" opacity="0.8"/><rect x="445.7" y="78" width="1" height="2.5" /><rect x="452.4" y="79" width="1" height="1.3" opacity="0.8"/><rect x="459.1" y="79" width="1" height="1.3" opacity="0.8"/><rect x="465.8" y="79" width="1" height="1.3" opacity="0.8"/><rect x="472.5" y="79" width="1" height="1.3" opacity="0.8"/><rect x="479.2" y="78" width="1" height="2.5" /><rect x="485.9" y="79" width="1" height="1.3" opacity="0.8"/><rect x="492.6" y="79" width="1" height="1.3" opacity="0.8"/><rect x="499.3" y="79" width="1" height="1.3" opacity="0.8"/><rect x="506.0" y="79" width="1" height="1.3" opacity="0.8"/><rect x="512.7" y="78" width="1" height="2.5" /><rect x="519.4" y="79" width="1" height="1.3" opacity="0.8"/><rect x="526.1" y="79" width="1" height="1.3" opacity="0.8"/><rect x="532.8" y="79" width="1" height="1.3" opacity="0.8"/><rect x="539.5" y="79" width="1" height="1.3" opacity="0.8"/><rect x="546.2" y="78" width="1" height="2.5" /><rect x="552.9" y="79" width="1" height="1.3" opacity="0.8"/><rect x="559.6" y="79" width="1" height="1.3" opacity="0.8"/><rect x="566.3" y="79" width="1" height="1.3" opacity="0.8"/><rect x="573.0" y="79" width="1" height="1.3" opacity="0.8"/><rect x="579.7" y="78" width="1" height="2.5" /><rect x="586.4" y="79" width="1" height="1.3" opacity="0.8"/><rect x="16.3" y="86.4" width="1.3" height="1" opacity="0.8"/><rect x="16.3" y="93.1" width="1.3" height="1" opacity="0.8"/><rect x="16.3" y="99.8" width="1.3" height="1" opacity="0.8"/><rect x="15.3" y="106.5" width="2.5" height="1"/><rect x="16.3" y="113.2" width="1.3" height="1" opacity="0.8"/><rect x="16.3" y="119.9" width="1.3" height="1" opacity="0.8"/><rect x="16.3" y="126.6" width="1.3" height="1" opacity="0.8"/><rect x="16.3" y="133.3" width="1.3" height="1" opacity="0.8"/><rect x="15.3" y="140.0" width="2.5" height="1"/><rect x="16.3" y="146.7" width="1.3" height="1" opacity="0.8"/><rect x="16.3" y="153.4" width="1.3" height="1" opacity="0.8"/><rect x="16.3" y="160.1" width="1.3" height="1" opacity="0.8"/><rect x="16.3" y="166.8" width="1.3" height="1" opacity="0.8"/><rect x="15.3" y="173.5" width="2.5" height="1"/><rect x="16.3" y="180.2" width="1.3" height="1" opacity="0.8"/><rect x="16.3" y="186.9" width="1.3" height="1" opacity="0.8"/><rect x="16.3" y="193.6" width="1.3" height="1" opacity="0.8"/><rect x="16.3" y="200.3" width="1.3" height="1" opacity="0.8"/><rect x="15.3" y="207.0" width="2.5" height="1"/><rect x="16.3" y="213.7" width="1.3" height="1" opacity="0.8"/><rect x="16.3" y="220.4" width="1.3" height="1" opacity="0.8"/><rect x="16.3" y="227.1" width="1.3" height="1" opacity="0.8"/><rect x="16.3" y="233.8" width="1.3" height="1" opacity="0.8"/><rect x="15.3" y="240.5" width="2.5" height="1"/><rect x="16.3" y="247.2" width="1.3" height="1" opacity="0.8"/><rect x="16.3" y="253.9" width="1.3" height="1" opacity="0.8"/><rect x="16.3" y="260.6" width="1.3" height="1" opacity="0.8"/><rect x="16.3" y="267.3" width="1.3" height="1" opacity="0.8"/><rect x="15.3" y="274.0" width="2.5" height="1"/><rect x="16.3" y="280.7" width="1.3" height="1" opacity="0.8"/><rect x="16.3" y="287.4" width="1.3" height="1" opacity="0.8"/><rect x="16.3" y="294.1" width="1.3" height="1" opacity="0.8"/><rect x="16.3" y="300.8" width="1.3" height="1" opacity="0.8"/><rect x="15.3" y="307.5" width="2.5" height="1"/><rect x="16.3" y="314.2" width="1.3" height="1" opacity="0.8"/><rect x="16.3" y="320.9" width="1.3" height="1" opacity="0.8"/><rect x="16.3" y="327.6" width="1.3" height="1" opacity="0.8"/><rect x="16.3" y="334.3" width="1.3" height="1" opacity="0.8"/><rect x="15.3" y="341.0" width="2.5" height="1"/><rect x="16.3" y="347.7" width="1.3" height="1" opacity="0.8"/><rect x="16.3" y="354.4" width="1.3" height="1" opacity="0.8"/><rect x="16.3" y="361.1" width="1.3" height="1" opacity="0.8"/><rect x="16.3" y="367.8" width="1.3" height="1" opacity="0.8"/><rect x="15.3" y="374.5" width="2.5" height="1"/><rect x="16.3" y="381.2" width="1.3" height="1" opacity="0.8"/><rect x="16.3" y="387.9" width="1.3" height="1" opacity="0.8"/><rect x="16.3" y="394.6" width="1.3" height="1" opacity="0.8"/><rect x="16.3" y="401.3" width="1.3" height="1" opacity="0.8"/><rect x="15.3" y="408.0" width="2.5" height="1"/><rect x="16.3" y="414.7" width="1.3" height="1" opacity="0.8"/><rect x="16.3" y="421.4" width="1.3" height="1" opacity="0.8"/><rect x="16.3" y="428.1" width="1.3" height="1" opacity="0.8"/><rect x="16.3" y="434.8" width="1.3" height="1" opacity="0.8"/><rect x="15.3" y="441.5" width="2.5" height="1"/><rect x="16.3" y="448.2" width="1.3" height="1" opacity="0.8"/><rect x="16.3" y="454.9" width="1.3" height="1" opacity="0.8"/><rect x="16.3" y="461.6" width="1.3" height="1" opacity="0.8"/><rect x="16.3" y="468.3" width="1.3" height="1" opacity="0.8"/><rect x="15.3" y="475.0" width="2.5" height="1"/><rect x="16.3" y="481.7" width="1.3" height="1" opacity="0.8"/><rect x="16.3" y="488.4" width="1.3" height="1" opacity="0.8"/><rect x="16.3" y="495.1" width="1.3" height="1" opacity="0.8"/><rect x="16.3" y="501.8" width="1.3" height="1" opacity="0.8"/><rect x="15.3" y="508.5" width="2.5" height="1"/><rect x="16.3" y="515.2" width="1.3" height="1" opacity="0.8"/><rect x="16.3" y="521.9" width="1.3" height="1" opacity="0.8"/><rect x="16.3" y="528.6" width="1.3" height="1" opacity="0.8"/><rect x="16.3" y="535.3" width="1.3" height="1" opacity="0.8"/><rect x="15.3" y="542.0" width="2.5" height="1"/><rect x="16.3" y="548.7" width="1.3" height="1" opacity="0.8"/><rect x="16.3" y="555.4" width="1.3" height="1" opacity="0.8"/><rect x="16.3" y="562.1" width="1.3" height="1" opacity="0.8"/><rect x="16.3" y="568.8" width="1.3" height="1" opacity="0.8"/><rect x="15.3" y="575.5" width="2.5" height="1"/><rect x="16.3" y="582.2" width="1.3" height="1" opacity="0.8"/><rect x="16.3" y="588.9" width="1.3" height="1" opacity="0.8"/><rect x="16.3" y="595.6" width="1.3" height="1" opacity="0.8"/><rect x="16.3" y="602.3" width="1.3" height="1" opacity="0.8"/><rect x="15.3" y="609.0" width="2.5" height="1"/><rect x="16.3" y="615.7" width="1.3" height="1" opacity="0.8"/><rect x="16.3" y="622.4" width="1.3" height="1" opacity="0.8"/><rect x="16.3" y="629.1" width="1.3" height="1" opacity="0.8"/><rect x="16.3" y="635.8" width="1.3" height="1" opacity="0.8"/><rect x="15.3" y="642.5" width="2.5" height="1"/><rect x="16.3" y="649.2" width="1.3" height="1" opacity="0.8"/></g>
<g font-family="Liberation Sans, sans-serif" font-size="7.6" fill="#f4f4f4" text-anchor="middle">
<text x="44.2" y="77.2">6.95</text>
<text transform="translate(14.2 106.6) rotate(-90)">6.95</text>
<text x="77.7" y="77.2">7</text>
<text transform="translate(14.2 140.1) rotate(-90)">7</text>
<text x="111.2" y="77.2">7.05</text>
<text transform="translate(14.2 173.7) rotate(-90)">7.05</text>
<text x="144.7" y="77.2">7.1</text>
<text transform="translate(14.2 207.2) rotate(-90)">7.1</text>
<text x="178.2" y="77.2">7.15</text>
<text transform="translate(14.2 240.7) rotate(-90)">7.15</text>
<text x="211.7" y="77.2">7.2</text>
<text transform="translate(14.2 274.2) rotate(-90)">7.2</text>
<text x="245.2" y="77.2">7.25</text>
<text transform="translate(14.2 307.8) rotate(-90)">7.25</text>
<text x="278.7" y="77.2">7.3</text>
<text transform="translate(14.2 341.3) rotate(-90)">7.3</text>
<text x="312.2" y="77.2">7.35</text>
<text transform="translate(14.2 374.8) rotate(-90)">7.35</text>
<text x="345.7" y="77.2">7.4</text>
<text transform="translate(14.2 408.4) rotate(-90)">7.4</text>
<text x="379.2" y="77.2">7.45</text>
<text transform="translate(14.2 441.9) rotate(-90)">7.45</text>
<text x="412.7" y="77.2">7.5</text>
<text transform="translate(14.2 475.4) rotate(-90)">7.5</text>
<text x="446.2" y="77.2">7.55</text>
<text transform="translate(14.2 509.0) rotate(-90)">7.55</text>
<text x="479.7" y="77.2">7.6</text>
<text transform="translate(14.2 542.5) rotate(-90)">7.6</text>
<text x="513.2" y="77.2">7.65</text>
<text transform="translate(14.2 576.0) rotate(-90)">7.65</text>
<text x="546.7" y="77.2">7.7</text>
<text transform="translate(14.2 609.6) rotate(-90)">7.7</text>
<text x="586.6" y="77" font-size="6.4" opacity="0.85">mm</text>
<text transform="translate(14 648.6) rotate(-90)" font-size="6.4" opacity="0.85">mm</text>
</g>
</svg>

<div class="t ttl" style="left:606px;top:48px">Sample overview</div>
<div class="sec" style="left:606px;top:58px;width:264px"></div>
<svg class="abs" style="left:606px;top:64px" width="264" height="264" viewBox="606 64 264 264">
<defs>
<filter id="ovn" color-interpolation-filters="sRGB" x="0" y="0" width="100%" height="100%"><feTurbulence type="fractalNoise" baseFrequency="0.04" numOctaves="3" seed="8"/><feColorMatrix type="matrix" values="0.26 0 0 0 0.735  0.26 0 0 0 0.74  0.26 0 0 0 0.745  0 0 0 0 1"/></filter>
<filter id="ovf" color-interpolation-filters="sRGB" x="0" y="0" width="100%" height="100%"><feTurbulence type="fractalNoise" baseFrequency="0.9" numOctaves="1" seed="3"/><feColorMatrix type="matrix" values="0 0 0 0 0.35  0 0 0 0 0.35  0 0 0 0 0.38  0.5 0 0 0 -0.19"/></filter>
<clipPath id="ovs"><path d="M606 64H870V152.5H709V167H606Z"/></clipPath>
<clipPath id="ovc"><circle cx="738" cy="196" r="129"/></clipPath>
</defs>
<rect x="606.5" y="64.5" width="263" height="263" fill="#323232" stroke="#626c76"/>
<g clip-path="url(#ovc)">
<path d="M606 64H870V152.5H709V167H606Z" fill="#d0d1d2"/>
<g clip-path="url(#ovs)"><rect x="606" y="64" width="264" height="104" filter="url(#ovn)"/><rect x="606" y="64" width="264" height="104" filter="url(#ovf)"/></g>
<path d="M815.5 114.1h0M813.6 143.5h0M769.6 150.3h0M767.2 138.3h0M827.8 128.4h0M686.8 139.6h0M709.5 82.8h0M786.4 87.9h0M713.1 111.6h0M726.7 143.5h0M784.8 143.0h0M813.0 108.0h0M778.9 132.5h0M836.0 138.1h0M723.5 85.3h0M693.8 91.3h0M784.6 143.7h0M659.2 119.9h0M634.2 127.2h0M702.8 80.5h0M648.1 109.0h0M803.8 114.2h0M815.7 111.6h0M747.5 83.2h0M719.2 110.5h0M685.4 148.5h0M666.2 133.2h0M762.2 75.5h0M796.9 107.1h0M692.1 152.5h0M809.4 97.3h0M783.5 78.5h0M742.8 74.3h0M741.4 113.4h0M723.4 81.3h0M681.2 111.4h0M628.2 134.1h0M672.3 95.3h0M697.7 87.1h0M784.5 112.6h0M635.2 153.1h0M694.0 135.3h0M683.1 92.7h0M820.4 116.7h0M698.8 117.2h0M826.5 123.5h0M725.6 132.3h0M767.5 107.0h0M719.1 79.3h0M688.3 102.9h0M764.4 125.6h0M654.9 111.0h0M637.8 142.3h0M630.8 129.3h0M682.8 132.3h0M787.5 117.5h0M828.5 151.0h0M768.6 151.6h0M655.4 113.9h0M691.8 129.1h0M638.5 155.4h0M704.8 145.2h0M801.4 139.4h0M727.2 94.1h0M654.4 107.6h0M675.4 128.6h0M722.0 128.0h0M726.4 94.9h0M778.7 90.6h0M737.8 124.7h0M809.3 96.9h0M696.7 127.8h0M651.6 160.3h0M680.0 119.1h0M666.6 112.1h0M659.1 165.4h0M689.8 91.0h0M845.6 150.4h0M810.4 91.8h0M794.3 115.6h0M827.5 151.9h0M796.7 139.9h0M708.1 123.9h0M676.6 112.2h0M673.3 103.2h0M824.3 141.2h0M761.7 98.5h0M710.5 98.0h0M812.4 95.8h0M759.6 89.0h0M780.1 125.0h0M682.1 139.8h0M662.9 159.0h0M640.4 125.8h0M790.5 140.0h0M771.1 135.8h0M729.2 121.1h0M634.4 140.9h0M698.7 114.0h0M743.6 150.7h0M687.3 122.5h0M765.0 132.2h0M689.9 94.2h0M730.4 126.7h0M775.0 79.5h0M724.2 122.6h0M737.7 95.8h0M651.3 106.4h0M700.0 136.2h0M668.6 94.4h0M675.9 114.5h0M734.2 81.1h0M780.8 138.8h0M732.2 120.3h0M739.3 132.9h0M694.7 135.1h0M704.2 128.3h0M767.2 133.7h0M846.9 137.5h0M791.6 137.1h0M669.0 128.0h0M803.1 88.9h0M736.0 118.9h0M794.9 143.3h0M723.4 123.2h0M631.6 144.5h0M776.9 120.5h0M647.5 115.1h0M767.6 136.6h0M852.2 142.4h0M695.4 143.8h0M746.1 133.4h0M736.3 115.8h0M778.3 122.7h0M622.6 162.9h0M691.6 116.5h0M686.4 148.0h0M671.8 133.4h0M732.1 99.2h0M676.3 102.7h0M700.7 91.2h0M685.1 129.5h0M732.5 77.9h0M744.1 93.2h0M646.9 145.3h0M806.1 120.8h0M798.7 147.9h0M719.2 118.6h0M726.1 97.4h0M688.8 144.5h0M672.5 108.7h0M744.0 134.0h0M782.1 118.7h0M703.9 80.9h0M782.7 100.1h0M669.8 97.7h0M736.2 87.2h0M828.2 114.8h0M837.9 124.4h0M684.6 138.0h0M621.8 155.8h0M824.2 125.9h0M656.4 111.0h0M735.9 145.2h0M644.3 161.7h0M831.6 114.8h0M846.6 150.6h0M849.2 139.4h0M699.0 100.9h0M742.1 103.7h0M678.4 107.6h0M617.9 154.9h0M799.3 142.0h0M767.4 114.1h0M794.9 109.2h0M699.2 107.7h0M681.4 144.9h0M736.1 83.2h0M666.6 130.5h0M701.8 96.1h0M687.4 127.3h0M738.8 115.3h0M784.2 113.8h0M769.2 125.5h0M812.2 137.9h0M659.5 108.1h0M785.9 99.2h0M701.6 110.0h0M789.4 88.1h0M758.7 131.0h0M683.6 155.8h0M766.2 137.7h0M645.5 150.1h0M683.5 128.4h0M798.7 98.5h0M677.9 99.4h0M730.6 122.8h0M777.9 92.5h0M759.0 126.5h0M737.1 108.6h0M730.6 103.5h0M804.6 124.1h0M641.4 162.5h0M744.8 141.6h0M750.1 125.4h0M757.5 77.6h0M643.5 139.8h0M699.5 79.0h0M818.8 141.5h0M805.5 105.1h0M643.7 142.7h0M665.2 133.5h0M788.3 93.6h0M812.3 125.4h0M797.2 110.0h0M758.6 96.5h0M669.0 121.4h0M764.6 116.5h0M776.6 129.4h0M714.4 92.9h0M784.7 105.1h0M701.9 135.3h0M778.0 115.5h0M819.0 99.0h0M699.9 141.9h0M783.9 109.0h0M816.7 119.8h0M780.1 130.8h0M709.7 78.6h0M658.8 161.9h0M737.6 142.2h0M698.5 90.5h0M704.3 165.3h0M659.1 157.4h0M836.0 134.7h0M678.0 139.8h0M841.7 125.9h0M666.3 127.6h0M675.9 115.8h0M783.0 98.0h0M758.9 119.2h0M812.0 124.2h0M773.4 122.9h0M639.2 153.4h0M838.9 127.5h0M829.1 136.8h0M706.3 77.5h0M805.8 137.7h0M730.4 93.4h0M703.2 160.5h0M728.6 87.2h0M796.8 105.1h0M731.3 135.1h0M679.9 126.0h0M749.6 109.2h0M697.8 76.7h0M690.9 165.1h0M702.7 150.4h0M657.2 109.6h0M695.7 82.8h0" stroke="#6a6a78" stroke-width="0.9" stroke-linecap="round" fill="none" opacity="0.5"/>
<path d="M649.6 146.3h0M651.9 161.2h0M700.2 77.4h0M682.6 120.9h0M748.9 124.0h0M790.2 94.2h0M742.4 146.5h0M694.0 80.0h0M691.2 120.5h0M788.0 135.8h0M787.6 102.5h0M698.9 82.8h0M754.8 96.4h0M759.8 126.9h0M740.4 97.3h0M773.8 97.9h0M660.0 114.6h0M661.4 101.8h0M718.0 141.6h0M795.5 127.7h0M646.8 121.1h0M718.9 73.9h0M780.8 81.0h0M730.3 90.0h0M659.9 108.6h0M795.3 115.8h0M758.9 139.9h0M704.3 161.9h0M737.4 111.8h0M747.0 95.4h0M703.3 104.1h0M711.7 100.2h0M788.7 145.0h0M653.2 144.3h0M838.8 136.2h0M672.9 102.7h0M629.4 137.2h0M721.3 143.7h0M822.9 135.8h0M688.8 131.6h0M744.9 133.8h0M769.9 146.6h0M675.8 140.5h0M826.0 149.6h0M653.2 153.9h0M709.9 119.5h0M695.0 139.8h0M756.8 133.2h0M645.7 130.3h0M647.2 138.8h0M781.6 110.5h0M745.6 131.7h0M760.1 129.7h0M747.5 79.5h0M718.5 85.5h0M666.4 127.8h0M753.9 125.6h0M724.3 77.6h0M813.8 150.0h0M723.7 128.0h0M752.5 75.6h0M672.4 124.7h0M770.6 148.1h0M667.0 130.9h0M709.7 126.2h0M768.4 122.9h0M685.7 101.5h0M740.6 76.9h0M736.0 123.1h0M707.0 129.6h0M681.3 88.9h0M794.1 95.4h0M690.0 165.1h0M705.1 116.1h0M681.3 165.4h0M771.3 115.7h0M718.6 78.3h0M821.2 128.8h0M679.4 145.0h0M759.7 149.5h0M749.2 93.0h0M682.8 81.6h0M800.3 127.4h0M733.6 113.9h0M675.4 141.1h0M742.1 119.9h0M674.7 99.9h0M711.3 112.9h0M734.9 69.7h0M784.0 121.1h0M749.9 124.1h0M710.4 114.7h0M635.6 158.1h0M681.7 152.0h0M787.3 85.8h0M710.8 94.9h0M662.9 144.9h0M773.2 114.3h0M715.9 121.5h0M739.0 125.2h0M748.7 89.2h0M711.9 148.8h0M631.1 139.0h0M766.8 131.2h0M693.8 162.2h0M728.6 95.5h0M698.8 158.7h0M798.7 107.8h0M721.9 76.9h0M722.4 104.3h0M761.2 124.1h0M749.3 141.0h0M767.1 109.6h0M710.1 97.8h0M667.7 160.8h0M686.8 103.8h0M777.8 129.8h0M732.0 128.7h0M730.1 91.7h0M832.7 141.8h0M698.0 89.7h0M733.7 103.5h0M734.1 138.0h0M691.0 132.2h0M692.0 154.6h0M707.2 114.5h0M752.2 134.8h0M774.7 133.2h0M755.7 129.1h0M700.8 101.8h0M744.3 128.0h0M805.2 101.2h0M707.4 149.9h0M764.7 131.4h0M662.7 118.3h0M656.2 140.8h0M684.2 105.9h0M754.0 86.4h0M749.2 70.0h0M803.9 142.8h0M767.3 109.3h0M704.4 81.6h0M745.4 82.1h0M685.8 154.9h0M790.5 81.4h0M736.5 82.3h0M798.4 95.0h0M770.0 133.5h0M709.3 139.7h0M743.1 89.3h0M754.1 73.9h0M678.0 140.0h0M750.2 138.5h0M766.8 133.9h0M689.6 164.5h0M670.1 101.4h0M754.0 115.6h0M760.9 90.6h0M728.2 71.1h0M716.9 91.8h0M753.9 107.2h0M729.6 69.8h0M776.4 106.6h0M818.8 119.7h0M770.9 120.7h0M689.9 87.7h0M830.9 115.1h0M748.2 123.7h0M663.0 139.3h0M709.0 149.5h0M781.1 144.0h0M765.5 79.1h0M739.0 109.3h0M769.5 124.3h0M738.8 136.8h0M757.1 103.8h0M680.8 142.0h0M769.2 122.2h0M824.8 142.7h0M671.6 124.0h0M722.0 93.0h0M622.5 148.0h0M708.7 72.7h0M764.7 83.1h0M729.1 94.8h0M696.5 109.3h0M702.8 102.6h0M732.3 125.0h0M748.4 149.5h0M733.1 119.6h0M704.8 83.3h0M659.1 146.3h0M782.3 112.6h0M663.9 143.5h0M697.7 76.5h0M666.1 164.8h0M834.3 114.7h0M697.2 94.0h0M770.6 86.3h0M672.9 141.9h0M711.1 90.4h0M704.2 165.2h0M783.5 150.9h0M799.1 106.5h0M757.3 135.0h0M674.5 153.2h0M730.7 105.3h0M730.8 97.5h0M754.0 104.7h0M806.1 136.0h0M707.3 125.9h0M698.9 94.7h0M798.0 124.6h0M774.7 142.7h0M675.4 93.7h0M731.9 142.1h0M709.7 133.7h0M695.2 150.7h0M730.6 87.1h0M704.3 120.9h0M733.5 105.4h0M741.6 84.0h0M646.0 157.9h0M710.7 135.6h0M761.5 121.9h0M717.7 128.8h0M790.6 143.4h0M827.5 149.9h0M727.3 109.0h0M660.8 119.4h0M790.6 94.4h0M702.1 127.1h0M727.9 77.7h0M698.9 85.2h0M648.4 135.7h0M677.5 139.6h0M818.0 150.3h0M677.1 131.2h0M753.2 150.9h0M777.7 81.8h0M767.1 75.4h0M822.7 142.6h0M726.1 147.2h0M651.6 163.5h0M765.8 72.5h0M759.1 86.8h0M679.5 134.7h0M797.0 141.0h0M803.9 120.9h0M776.3 103.9h0M812.8 103.8h0M806.1 135.1h0M743.4 73.3h0M745.4 95.9h0M668.5 140.5h0M692.1 116.4h0M779.9 136.4h0M761.8 95.9h0M663.9 108.5h0M746.5 73.4h0M786.5 120.7h0M740.8 143.4h0M730.9 102.5h0M794.7 112.3h0M743.9 104.7h0M713.4 88.1h0M767.9 94.2h0M819.3 125.9h0M826.3 130.2h0M814.3 104.2h0" stroke="#34e418" stroke-width="1.15" stroke-linecap="round" fill="none" opacity="0.8"/>
<path d="M847 123.5l6 1.2" stroke="#3c9a30" stroke-width="1" fill="none"/>
</g>
<circle cx="738" cy="196" r="129" fill="none" stroke="#3f6a82" stroke-width="1"/>
<rect x="737.5" y="195.5" width="1.2" height="1.2" fill="#4f87a8"/>
</svg>
<div class="t lbl" style="left:606px;top:335px">Acquiring sample...</div>
<div class="abs" style="left:606px;top:350px;width:264px;height:11px;background:#494b52;border-radius:2px"></div>
<div class="abs" style="left:606px;top:350px;width:90px;height:11px;background:#078a07;border-radius:2px"></div>
<div class="t lbl" style="left:606px;top:369px">Time remaining: 0:52 min</div>
<div class="btn" style="top:383.5px"></div>
<div class="abs" style="left:724px;top:390px;width:2px;height:8.5px;background:#f0f0f0"></div>
<div class="abs" style="left:728px;top:390px;width:2px;height:8.5px;background:#f0f0f0"></div>
<div class="t lbl" style="left:735px;top:390px">Pause</div>
<div class="btn" style="top:411px"></div>
<div class="abs" style="left:725.5px;top:418px;width:7.5px;height:7.5px;background:#f0f0f0"></div>
<div class="t lbl" style="left:737px;top:418px">Stop</div>

<div class="t ttl" style="left:882px;top:48px">Sample information</div>
<div class="sec" style="left:882px;top:58px;width:311px"></div>
<div class="t lbl" style="left:882px;top:66px">Sample ID:</div>
<div class="t lbl" style="left:1041px;top:66px">000003</div>
<div class="t lbl" style="left:882px;top:82px">Standard:</div>
<div class="t lbl" style="left:1041px;top:82px">ISO 16232-10:2007 (A)</div>
<div class="t lbl" style="left:882px;top:98px">Classification measurement:</div>
<div class="t lbl" style="left:1041px;top:98px">Feret Max. [µm]</div>
<div class="t lbl" style="left:882px;top:114px">Count result:</div>
<div class="t lbl" style="left:1041px;top:114px">Contamination class</div>
<div class="t ttl" style="left:882px;top:146px">Sample results</div>
<div class="sec" style="left:882px;top:156px;width:311px"></div>
<div class="t lbl" style="left:882px;top:164px">Overall approval:</div>
<div class="t lbl" style="left:1041px;top:164px;color:#ffd000;-webkit-text-stroke:0.2px #ffd000;font-weight:bold">NOK</div>
<div class="row" style="top:179.0px"><div class="sep"></div><div class="rng">[5.00 - 15.00[</div><div class="let">B</div><div class="bar"><div class="fill" style="width:70px"></div></div><div class="mk"></div><div class="tick"></div><div class="mx">Max: 20</div><div class="val">9</div></div>
<div class="row" style="top:217.1px"><div class="sep"></div><div class="rng">[15.00 - 25.00[</div><div class="let">C</div><div class="bar"><div class="fill" style="width:93px"></div></div><div class="mk"></div><div class="tick"></div><div class="mx">Max: 10</div><div class="val">6</div></div>
<div class="row" style="top:255.2px"><div class="sep"></div><div class="rng">[25.00 - 50.00[</div><div class="let">D</div><div class="bar"><div class="fill" style="width:97.5px"></div></div><div class="mk"></div><div class="tick"></div><div class="mx">Max: 8</div><div class="val">5</div></div>
<div class="row" style="top:293.3px"><div class="sep"></div><div class="rng">[50.00 - 100.00[</div><div class="let">E</div><div class="bar"><div class="fill" style="width:101px"></div></div><div class="mk"></div><div class="tick"></div><div class="mx">Max: 5</div><div class="val">3</div></div>
<div class="row" style="top:331.4px"><div class="sep"></div><div class="rng">[100.00 - 150.00[</div><div class="let">F</div><div class="bar"><div class="fill" style="width:80.5px"></div></div><div class="mk"></div><div class="tick"></div><div class="mx">Max: 2</div><div class="val">0</div></div>
<div class="row" style="top:369.5px"><div class="sep"></div><div class="rng">[150.00 - 200.00[</div><div class="let">G</div><div class="bar"><div class="fill" style="width:133px"></div></div><div class="mk"></div><div class="tick"></div><div class="mx">Max: 0</div><div class="val">0</div></div>
<div class="row" style="top:407.6px"><div class="sep"></div><div class="rng">[200.00 - 400.00[</div><div class="let">H</div><div class="bar"><div class="fill" style="width:133px"></div></div><div class="mk"></div><div class="tick"></div><div class="mx">Max: 0</div><div class="val">0</div></div>
<div class="row" style="top:445.7px"><div class="sep"></div><div class="rng">[400.00 - 600.00[</div><div class="let">I</div><div class="bar" style="background:#ffcc00;width:224.5px"></div><div class="abs" style="left:237px;top:13px;width:0;height:0;border-top:6.25px solid transparent;border-bottom:6.25px solid transparent;border-left:12px solid #ffcc00"></div><div class="mk" style="background:#3a6f8f;width:2px;left:146px"></div><div class="tick"></div><div class="mx">Max: 00</div><div class="val">0</div></div>
<div class="row" style="top:483.8px"><div class="sep"></div><div class="rng">[600.00 - 1000.00[</div><div class="let">J</div><div class="bar"><div class="fill" style="width:0px"></div></div><div class="mk"></div><div class="tick"></div><div class="mx">Max: 00</div><div class="val"></div></div>
<div class="row" style="top:521.9px"><div class="sep"></div><div class="rng">≥ 1000.00</div><div class="let">K</div><div class="bar"><div class="fill" style="width:0px"></div></div><div class="mk"></div><div class="tick"></div><div class="mx">Max: 00</div><div class="val"></div></div>

<div class="abs" style="left:0;top:0;width:1200px;height:750px;border:1px solid #2c2c2c;border-top-color:#242424"></div>
</body></html>
